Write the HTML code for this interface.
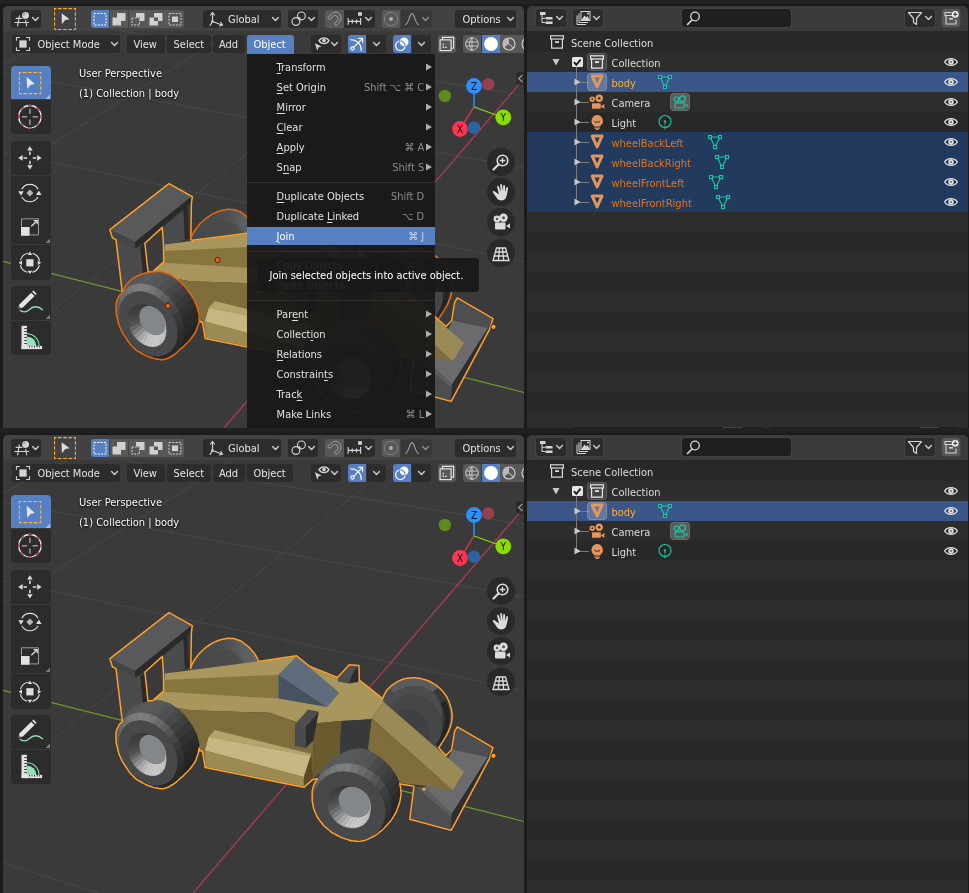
<!DOCTYPE html><html><head><meta charset="utf-8"><title>Blender - Join objects</title><style>
html,body{margin:0;padding:0;background:#1b1b1b;}
body{width:969px;height:893px;overflow:hidden;position:relative;font-family:"DejaVu Sans Condensed","DejaVu Sans","Liberation Sans",sans-serif;font-size:11px;font-stretch:condensed;color:#e0e0e0;}
div,span,svg{position:absolute;box-sizing:border-box;}
.panel{overflow:hidden;border-radius:5px 5px 0 0;will-change:transform;}
.vp{background:#3a3a3a;}
.hdr{background:#424242;left:0;top:0;width:100%;height:26px;}
.btn{background:#2c2c2c;border-radius:3px;height:18px;}
.tog{background:#585858;}
.on{background:#5680c2;}
.pd{background:rgba(32,32,32,.55);border-radius:3px;height:18px;top:30px;}
.t{white-space:nowrap;line-height:18px;height:18px;top:1px;color:#e3e3e3;}
.ol{background:#282828;}
.ol .hdr{background:#3b3b3b;}
.ol .hdr .btn{box-shadow:0 0 0 1px rgba(255,255,255,.045);}
.row{left:0;width:100%;height:20px;}
.alt{background:#2d2d2d;}
.rt{white-space:nowrap;line-height:20px;height:20px;margin-top:2px;color:#dcdcdc;}
.menu{background:rgba(24,24,24,.94);}
.mi{left:0;width:100%;height:20px;}
.ml{left:30px;top:1px;line-height:20px;white-space:nowrap;color:#e0e0e0;}
.ms{right:11px;top:1px;line-height:20px;white-space:nowrap;color:#8c8c8c;}
.ms2{right:5px;}
.sep{left:0;width:100%;height:1px;background:#2f2f2f;}
u{text-decoration:underline;text-underline-offset:1.5px;text-decoration-thickness:1px;}
.tool{left:8px;width:40px;background:#2c2c2c;}
.nav{width:28px;height:28px;border-radius:14px;background:rgba(36,36,36,.75);left:484px;}
.vt{white-space:nowrap;color:#fff;text-shadow:0 1px 2px rgba(0,0,0,.9),0 0 1px rgba(0,0,0,.8);left:76px;line-height:14px;}
</style></head><body>
<div style="left:0;top:0;width:969px;height:4px;background:#232323"></div><div style="left:0;top:428px;width:969px;height:5px;background:#212121"></div>
<div class="panel vp" style="left:3px;top:6px;width:521px;height:422px"><div style="left:0;top:-1px;width:521px;height:423px">
<svg style="left:0;top:0" width="521" height="423" viewBox="3 5 521 423"><defs><linearGradient id="ttra" gradientUnits="userSpaceOnUse" x1="143" y1="700" x2="192" y2="768"><stop offset="0" stop-color="#55575a"/><stop offset="0.22" stop-color="#5a5c5e"/><stop offset="0.36" stop-color="#4e4f51"/><stop offset="0.5" stop-color="#3c3d3e"/><stop offset="0.64" stop-color="#2d2d2e"/><stop offset="0.8" stop-color="#232324"/><stop offset="1" stop-color="#1a1a1a"/></linearGradient><linearGradient id="ttrb" gradientUnits="userSpaceOnUse" x1="343" y1="748" x2="396" y2="824"><stop offset="0" stop-color="#55575a"/><stop offset="0.22" stop-color="#5a5c5e"/><stop offset="0.36" stop-color="#4e4f51"/><stop offset="0.5" stop-color="#3c3d3e"/><stop offset="0.64" stop-color="#2d2d2e"/><stop offset="0.8" stop-color="#232324"/><stop offset="1" stop-color="#1a1a1a"/></linearGradient><linearGradient id="tsha" gradientUnits="userSpaceOnUse" x1="131" y1="712" x2="172" y2="790"><stop offset="0" stop-color="#5a5c5e"/><stop offset="0.1" stop-color="#6e7072"/><stop offset="0.2" stop-color="#7e8082"/><stop offset="0.32" stop-color="#626466"/><stop offset="0.45" stop-color="#505153"/><stop offset="0.6" stop-color="#38393a"/><stop offset="0.75" stop-color="#2a2a2b"/><stop offset="1" stop-color="#1e1e1e"/></linearGradient><linearGradient id="tshb" gradientUnits="userSpaceOnUse" x1="330" y1="762" x2="376" y2="842"><stop offset="0" stop-color="#5a5c5e"/><stop offset="0.1" stop-color="#6e7072"/><stop offset="0.2" stop-color="#7e8082"/><stop offset="0.32" stop-color="#626466"/><stop offset="0.45" stop-color="#505153"/><stop offset="0.6" stop-color="#38393a"/><stop offset="0.75" stop-color="#2a2a2b"/><stop offset="1" stop-color="#1e1e1e"/></linearGradient><linearGradient id="trma" gradientUnits="userSpaceOnUse" x1="138" y1="734" x2="156" y2="776"><stop offset="0" stop-color="#3f3e3e"/><stop offset="0.3" stop-color="#555657"/><stop offset="0.5" stop-color="#7a7b7c"/><stop offset="0.68" stop-color="#a2a3a4"/><stop offset="0.85" stop-color="#c6c7c8"/><stop offset="1" stop-color="#d0d0d0"/></linearGradient><linearGradient id="trmb" gradientUnits="userSpaceOnUse" x1="338" y1="786" x2="360" y2="829"><stop offset="0" stop-color="#3f3e3e"/><stop offset="0.3" stop-color="#555657"/><stop offset="0.5" stop-color="#7a7b7c"/><stop offset="0.68" stop-color="#a2a3a4"/><stop offset="0.85" stop-color="#c6c7c8"/><stop offset="1" stop-color="#d0d0d0"/></linearGradient><linearGradient id="trr" gradientUnits="userSpaceOnUse" x1="195" y1="660" x2="258" y2="650"><stop offset="0" stop-color="#474849"/><stop offset="0.45" stop-color="#4b4c4d"/><stop offset="0.62" stop-color="#545556"/><stop offset="0.8" stop-color="#5e5f60"/><stop offset="1" stop-color="#626364"/></linearGradient></defs><g transform="translate(0,-429)"><line x1="3" y1="862.9" x2="524" y2="1027.3" stroke="#484848" stroke-width="1"/><line x1="3" y1="580.7" x2="524" y2="690.7" stroke="#484848" stroke-width="1"/><line x1="3" y1="502.0" x2="524" y2="596.9" stroke="#484848" stroke-width="1"/><line x1="3" y1="441.2" x2="524" y2="524.3" stroke="#484848" stroke-width="1"/><line x1="3" y1="393.2" x2="524" y2="467.1" stroke="#484848" stroke-width="1"/><line x1="434.3" y1="430" x2="-150.5" y2="905" stroke="#484848" stroke-width="1"/><line x1="280.5" y1="430" x2="-478.1" y2="905" stroke="#484848" stroke-width="1"/><line x1="126.7" y1="430" x2="-805.8" y2="905" stroke="#484848" stroke-width="1"/><line x1="3" y1="690.4" x2="524" y2="821.5" stroke="#6c9c27" stroke-width="1.2"/><line x1="524.5" y1="507" x2="193" y2="893" stroke="#a33c4e" stroke-width="1.4"/><path d="M190.5 668.6 C191.2 666.9 190.2 667.7 192.5 663.5 C194.8 659.3 193.9 660.5 197.4 656.0 C200.9 651.5 199.0 653.7 203.0 650.0 C207.0 646.3 205.0 647.9 209.5 645.0 C214.0 642.1 211.7 643.2 216.5 641.2 C221.3 639.2 219.2 639.9 224.0 639.0 C228.8 638.1 226.3 638.2 231.0 638.5 C235.7 638.8 233.3 638.2 238.0 640.0 C242.7 641.8 240.6 640.8 245.0 644.0 C249.4 647.2 247.6 645.7 251.3 649.7 C255.0 653.7 253.6 652.1 256.0 656.0 C258.4 659.9 257.7 659.7 258.5 661.5 L262 661 L262 695 L189 695 Z" fill="url(#trr)"/><path d="M200 672 C201 658 212 650 224 650 C233 650 239 655 243 663 L243 672 Z" fill="#484949" opacity=".7"/><path d="M382.7 698.5 C383.6 696.5 383.2 696.2 385.5 692.5 C387.8 688.8 386.2 690.7 389.5 687.5 C392.8 684.3 391.2 685.5 395.5 682.8 C399.8 680.1 397.7 681.1 402.5 679.5 C407.3 677.9 405.1 678.5 410.0 678.0 C414.9 677.5 412.3 677.4 417.3 678.0 C422.3 678.6 420.0 678.2 425.0 679.8 C430.0 681.4 427.7 680.4 432.2 682.9 C436.7 685.4 434.6 684.0 438.5 687.3 C442.4 690.6 440.7 688.9 443.8 692.8 C446.9 696.7 445.6 694.6 447.8 699.0 C450.0 703.4 449.1 701.7 450.4 706.0 C451.7 710.3 451.3 708.1 451.8 712.0 C452.3 715.9 452.3 713.6 452.0 717.6 C451.7 721.6 452.0 719.9 451.0 724.0 C450.0 728.1 450.8 725.7 449.0 730.0 C447.2 734.3 448.0 732.5 445.5 737.0 C443.0 741.5 443.8 739.9 441.5 743.5 C439.2 747.1 439.6 746.3 438.6 747.7 L420 760 L375 705 Z" fill="#4b4c4d"/><path d="M389.500 687.500 C400 677 425 675 438.500 687.300 L433 692 C422 683 405 684 394 693 Z" fill="#5b5c5d"/><path d="M438.500 687.300 C452 700 455 722 438.600 747.700 L432 741 C446 722 444 703 433 692 Z" fill="#38393a"/><path d="M445 700 C453 712 452 730 438.600 747.700 L436 744 C446 728 447 714 441 704 Z" fill="#252526"/><ellipse cx="415" cy="723" rx="26" ry="30" transform="rotate(-35 415 723)" fill="#454647" /><ellipse cx="411" cy="729" rx="17" ry="21" transform="rotate(-35 411 729)" fill="#3f4041" /><polygon points="163.6,655.4 183.4,638.9 185.0,668.6 164.4,676.0" fill="#4a4b4c" /><polygon points="183.4,638.0 187.5,634.7 189.2,667.7 185.0,668.6" fill="#2a2a2a" /><polygon points="187.5,634.7 191.0,632.0 191.0,667.4 189.2,667.7" fill="#3a3a3a" /><polygon points="116.2,668.6 140.5,676.8 143.3,706.0 123.0,724.0" fill="#4a4b4c" /><polygon points="140.5,676.8 144.6,672.7 147.9,700.8 143.3,706.0" fill="#2a2a2a" /><polygon points="111.2,658.7 135.0,670.7 135.5,677.7 113.2,666.9" fill="#444546" /><polygon points="135.0,670.7 190.5,625.6 191.0,632.2 135.5,677.7" fill="#2a2a2a" /><polygon points="110.5,658.7 169.0,613.3 191.5,625.6 135.0,670.7" fill="#58595a" /><polygon points="164.8,673.6 296.5,656.5 310.0,667.2 338.0,678.5 359.5,680.5 383.0,699.0 383.4,701.7 371.7,718.4 369.4,719.5 341.4,720.9 313.3,723.4 295.7,721.7 269.3,712.7 190.0,710.2 148.0,702.5 152.8,700.8 163.6,691.7" fill="#a8965c" /><polygon points="164.4,680.1 278.3,674.7 278.3,698.6 163.6,691.7" fill="#86753f" /><polygon points="146.0,702.0 190.0,710.2 269.3,712.7 296.0,722.0 313.3,723.4 313.0,780.0 205.7,767.0 201.6,750.6 196.6,754.0 192.0,768.0 160.0,760.0" fill="#7f6e3b" /><polygon points="313.3,723.4 341.4,720.9 339.7,757.0 325.0,768.0 312.0,780.0" fill="#6a5b2e" /><polygon points="341.4,720.9 369.6,719.3 368.0,750.0 339.7,757.0" fill="#38393a" /><polygon points="296.5,656.5 339.4,692.8 327.0,706.9 278.3,674.7" fill="#5f6c7b" /><polygon points="278.3,674.7 327.0,706.9 278.3,698.6" fill="#46525f" /><polygon points="338.0,677.5 349.5,665.6 354.0,671.5 348.5,683.5 338.0,681.5" fill="#4b4c4e" /><polygon points="349.5,665.6 358.2,666.3 358.2,682.0 348.5,683.5 354.0,671.5" fill="#2c2c2d" /><polygon points="338.0,677.5 349.5,665.6 358.2,666.3 347.5,679.5" fill="#4e4f51" /><polygon points="455.0,732.2 457.5,728.1 491.9,748.2 488.1,757.0 452.6,749.5" fill="#4d4e50" /><polygon points="452.6,749.5 488.1,757.0 451.7,813.9 424.5,787.5 440.0,775.0" fill="#6a6b6d" /><polygon points="488.1,757.0 492.2,749.5 450.9,829.6 451.7,813.9" fill="#2d2d2e" /><polygon points="414.6,787.0 424.5,787.5 451.7,813.9 450.9,829.6 411.0,818.6" fill="#4d4e50" /><polygon points="416.0,787.0 424.5,787.5 451.7,813.9 451.0,816.5" fill="#5c5d5f" /><polygon points="383.4,701.7 463.9,771.7 452.8,790.3 371.7,718.4" fill="#9a8a55" /><polygon points="371.7,718.4 452.8,790.3 426.8,786.0 399.5,783.0 380.0,762.0 368.0,749.0" fill="#7f6e3b" /><polygon points="294.9,724.2 308.1,709.6 318.8,711.8 305.6,726.7" fill="#4c4d4f" /><polygon points="294.9,724.2 305.6,726.7 305.6,748.2 294.9,745.7" fill="#494a4c" /><polygon points="305.6,726.7 318.8,711.8 313.2,740.7 305.6,748.2" fill="#2c2c2d" /><polygon points="214.8,730.0 311.4,753.9 310.5,756.0 208.7,737.0" fill="#b4a36b" /><polygon points="208.7,737.0 310.5,756.0 303.9,777.1 204.9,750.6" fill="#c6b682" /><polygon points="204.9,750.6 303.9,777.1 303.9,786.5 205.7,766.8" fill="#9b8a52" /><polygon points="311.4,753.9 303.9,777.1 303.9,786.5 312.5,779.0" fill="#5a4a27" /><clipPath id="tcla"><path d="M122.3 721.4 C119.8 725.4 119.6 722.5 117.5 728.0 C115.4 733.5 116.0 731.3 116.0 738.0 C116.0 744.7 116.0 741.5 117.5 748.0 C119.0 754.5 117.7 751.2 120.5 757.5 C123.3 763.8 121.8 760.8 126.0 767.0 C130.2 773.2 128.0 771.0 133.0 776.0 C138.0 781.0 135.5 778.7 141.0 782.0 C146.5 785.3 143.8 783.9 149.5 786.0 C155.2 788.1 152.8 787.6 158.0 788.3 C163.2 789.0 160.3 789.3 165.0 788.2 C169.7 787.1 167.2 788.0 172.0 785.0 C176.8 782.0 174.6 783.2 179.3 779.2 C184.0 775.2 181.6 777.6 186.0 773.0 C190.4 768.4 188.8 770.8 192.5 765.5 C196.2 760.2 194.8 762.8 197.0 757.0 C199.2 751.2 199.0 754.3 199.2 748.0 C199.4 741.7 199.3 744.3 197.6 738.0 C195.9 731.7 196.9 734.7 194.0 729.0 C191.1 723.3 192.8 726.3 189.0 721.0 C185.2 715.7 187.3 717.8 182.5 713.0 C177.7 708.2 180.2 710.2 174.5 706.5 C168.8 702.8 171.7 704.0 165.5 702.0 C159.3 700.0 162.5 700.6 156.0 700.6 C149.5 700.6 152.0 700.6 146.0 702.0 C140.0 703.4 143.2 702.3 138.0 704.8 C132.8 707.3 134.8 705.8 130.5 709.5 C126.2 713.2 127.7 712.0 125.0 716.0 C122.3 720.0 124.8 717.4 122.3 721.4 Z"/></clipPath><path d="M122.3 721.4 C119.8 725.4 119.6 722.5 117.5 728.0 C115.4 733.5 116.0 731.3 116.0 738.0 C116.0 744.7 116.0 741.5 117.5 748.0 C119.0 754.5 117.7 751.2 120.5 757.5 C123.3 763.8 121.8 760.8 126.0 767.0 C130.2 773.2 128.0 771.0 133.0 776.0 C138.0 781.0 135.5 778.7 141.0 782.0 C146.5 785.3 143.8 783.9 149.5 786.0 C155.2 788.1 152.8 787.6 158.0 788.3 C163.2 789.0 160.3 789.3 165.0 788.2 C169.7 787.1 167.2 788.0 172.0 785.0 C176.8 782.0 174.6 783.2 179.3 779.2 C184.0 775.2 181.6 777.6 186.0 773.0 C190.4 768.4 188.8 770.8 192.5 765.5 C196.2 760.2 194.8 762.8 197.0 757.0 C199.2 751.2 199.0 754.3 199.2 748.0 C199.4 741.7 199.3 744.3 197.6 738.0 C195.9 731.7 196.9 734.7 194.0 729.0 C191.1 723.3 192.8 726.3 189.0 721.0 C185.2 715.7 187.3 717.8 182.5 713.0 C177.7 708.2 180.2 710.2 174.5 706.5 C168.8 702.8 171.7 704.0 165.5 702.0 C159.3 700.0 162.5 700.6 156.0 700.6 C149.5 700.6 152.0 700.6 146.0 702.0 C140.0 703.4 143.2 702.3 138.0 704.8 C132.8 707.3 134.8 705.8 130.5 709.5 C126.2 713.2 127.7 712.0 125.0 716.0 C122.3 720.0 124.8 717.4 122.3 721.4 Z" fill="url(#ttra)"/><g clip-path="url(#tcla)"><polygon points="190.7,769.2 185.6,771.8 168.9,786.9 174.1,784.2" fill="#1f1f20" stroke="#1f1f20" stroke-width="0.4"/><polygon points="185.6,771.8 179.7,773.1 163.0,788.2 168.9,786.9" fill="#1e1e1f" stroke="#1e1e1f" stroke-width="0.4"/><polygon points="179.7,773.1 173.4,773.0 156.6,788.1 163.0,788.2" fill="#1e1e1e" stroke="#1e1e1e" stroke-width="0.4"/><polygon points="173.4,773.0 166.8,771.4 149.9,786.5 156.6,788.1" fill="#1d1d1d" stroke="#1d1d1d" stroke-width="0.4"/><polygon points="166.8,771.4 160.3,768.5 143.3,783.5 149.9,786.5" fill="#1b1b1c" stroke="#1b1b1c" stroke-width="0.4"/><polygon points="160.3,768.5 154.1,764.3 137.0,779.2 143.3,783.5" fill="#1b1b1b" stroke="#1b1b1b" stroke-width="0.4"/><polygon points="154.1,764.3 148.3,759.1 131.2,773.8 137.0,779.2" fill="#1a1a1a" stroke="#1a1a1a" stroke-width="0.4"/><polygon points="148.3,759.1 143.3,752.9 126.1,767.6 131.2,773.8" fill="#2f2f30" stroke="#2f2f30" stroke-width="0.4"/><polygon points="143.3,752.9 139.3,746.1 121.9,760.7 126.1,767.6" fill="#494a4b" stroke="#494a4b" stroke-width="0.4"/><polygon points="139.3,746.1 136.3,738.9 118.9,753.4 121.9,760.7" fill="#4e5052" stroke="#4e5052" stroke-width="0.4"/><polygon points="136.3,738.9 134.5,731.6 117.1,746.0 118.9,753.4" fill="#525355" stroke="#525355" stroke-width="0.4"/><polygon points="134.5,731.6 134.0,724.5 116.5,738.7 117.1,746.0" fill="#545658" stroke="#545658" stroke-width="0.4"/><polygon points="134.0,724.5 134.8,717.8 117.3,731.9 116.5,738.7" fill="#56585a" stroke="#56585a" stroke-width="0.4"/><polygon points="134.8,717.8 136.8,711.8 119.3,725.9 117.3,731.9" fill="#57595b" stroke="#57595b" stroke-width="0.4"/><polygon points="136.8,711.8 140.0,706.8 122.6,720.7 119.3,725.9" fill="#585a5c" stroke="#585a5c" stroke-width="0.4"/><polygon points="140.0,706.8 144.3,702.8 126.9,716.8 122.6,720.7" fill="#595b5d" stroke="#595b5d" stroke-width="0.4"/><polygon points="144.3,702.8 149.4,700.2 132.1,714.1 126.9,716.8" fill="#595b5d" stroke="#595b5d" stroke-width="0.4"/><polygon points="149.4,700.2 155.3,698.9 138.0,712.8 132.1,714.1" fill="#5a5b5d" stroke="#5a5b5d" stroke-width="0.4"/><polygon points="155.3,698.9 161.6,699.0 144.4,712.9 138.0,712.8" fill="#585a5c" stroke="#585a5c" stroke-width="0.4"/><polygon points="161.6,699.0 168.2,700.6 151.1,714.5 144.4,712.9" fill="#56585a" stroke="#56585a" stroke-width="0.4"/><polygon points="168.2,700.6 174.7,703.5 157.7,717.5 151.1,714.5" fill="#545557" stroke="#545557" stroke-width="0.4"/><polygon points="174.7,703.5 180.9,707.7 164.0,721.8 157.7,717.5" fill="#4e4f51" stroke="#4e4f51" stroke-width="0.4"/><polygon points="180.9,707.7 186.7,712.9 169.8,727.2 164.0,721.8" fill="#464748" stroke="#464748" stroke-width="0.4"/><polygon points="186.7,712.9 191.7,719.1 174.9,733.4 169.8,727.2" fill="#3e3f40" stroke="#3e3f40" stroke-width="0.4"/><polygon points="191.7,719.1 195.7,725.9 179.1,740.3 174.9,733.4" fill="#373738" stroke="#373738" stroke-width="0.4"/><polygon points="195.7,725.9 198.7,733.1 182.1,747.6 179.1,740.3" fill="#313132" stroke="#313132" stroke-width="0.4"/><polygon points="198.7,733.1 200.5,740.4 183.9,755.0 182.1,747.6" fill="#2b2b2c" stroke="#2b2b2c" stroke-width="0.4"/><polygon points="200.5,740.4 201.0,747.5 184.5,762.3 183.9,755.0" fill="#282829" stroke="#282829" stroke-width="0.4"/><polygon points="201.0,747.5 200.2,754.2 183.7,769.1 184.5,762.3" fill="#252526" stroke="#252526" stroke-width="0.4"/><polygon points="200.2,754.2 198.2,760.2 181.7,775.1 183.7,769.1" fill="#232324" stroke="#232324" stroke-width="0.4"/><polygon points="198.2,760.2 195.0,765.2 178.4,780.3 181.7,775.1" fill="#222223" stroke="#222223" stroke-width="0.4"/><polygon points="195.0,765.2 190.7,769.2 174.1,784.2 178.4,780.3" fill="#212122" stroke="#212122" stroke-width="0.4"/><polygon points="174.1,784.2 168.9,786.9 164.2,784.3 168.7,782.0" fill="#272728" stroke="#272728" stroke-width="0.4"/><polygon points="168.9,786.9 163.0,788.2 159.1,785.4 164.2,784.3" fill="#282829" stroke="#282829" stroke-width="0.4"/><polygon points="163.0,788.2 156.6,788.1 153.5,785.3 159.1,785.4" fill="#2a2a2b" stroke="#2a2a2b" stroke-width="0.4"/><polygon points="156.6,788.1 149.9,786.5 147.8,783.9 153.5,785.3" fill="#2b2b2c" stroke="#2b2b2c" stroke-width="0.4"/><polygon points="149.9,786.5 143.3,783.5 142.1,781.3 147.8,783.9" fill="#2f2f30" stroke="#2f2f30" stroke-width="0.4"/><polygon points="143.3,783.5 137.0,779.2 136.6,777.6 142.1,781.3" fill="#353536" stroke="#353536" stroke-width="0.4"/><polygon points="137.0,779.2 131.2,773.8 131.6,773.0 136.6,777.6" fill="#3b3c3d" stroke="#3b3c3d" stroke-width="0.4"/><polygon points="131.2,773.8 126.1,767.6 127.2,767.6 131.6,773.0" fill="#404142" stroke="#404142" stroke-width="0.4"/><polygon points="126.1,767.6 121.9,760.7 123.7,761.7 127.2,767.6" fill="#454647" stroke="#454647" stroke-width="0.4"/><polygon points="121.9,760.7 118.9,753.4 121.1,755.4 123.7,761.7" fill="#494a4b" stroke="#494a4b" stroke-width="0.4"/><polygon points="118.9,753.4 117.1,746.0 119.5,749.0 121.1,755.4" fill="#4d4e50" stroke="#4d4e50" stroke-width="0.4"/><polygon points="117.1,746.0 116.5,738.7 119.0,742.8 119.5,749.0" fill="#535557" stroke="#535557" stroke-width="0.4"/><polygon points="116.5,738.7 117.3,731.9 119.7,736.9 119.0,742.8" fill="#595b5d" stroke="#595b5d" stroke-width="0.4"/><polygon points="117.3,731.9 119.3,725.9 121.4,731.7 119.7,736.9" fill="#5f6163" stroke="#5f6163" stroke-width="0.4"/><polygon points="119.3,725.9 122.6,720.7 124.2,727.3 121.4,731.7" fill="#67696b" stroke="#67696b" stroke-width="0.4"/><polygon points="122.6,720.7 126.9,716.8 127.9,723.8 124.2,727.3" fill="#6e7072" stroke="#6e7072" stroke-width="0.4"/><polygon points="126.9,716.8 132.1,714.1 132.4,721.5 127.9,723.8" fill="#747678" stroke="#747678" stroke-width="0.4"/><polygon points="132.1,714.1 138.0,712.8 137.5,720.4 132.4,721.5" fill="#797b7d" stroke="#797b7d" stroke-width="0.4"/><polygon points="138.0,712.8 144.4,712.9 143.1,720.5 137.5,720.4" fill="#7e8082" stroke="#7e8082" stroke-width="0.4"/><polygon points="144.4,712.9 151.1,714.5 148.8,721.9 143.1,720.5" fill="#7b7d7f" stroke="#7b7d7f" stroke-width="0.4"/><polygon points="151.1,714.5 157.7,717.5 154.5,724.5 148.8,721.9" fill="#737577" stroke="#737577" stroke-width="0.4"/><polygon points="157.7,717.5 164.0,721.8 160.0,728.2 154.5,724.5" fill="#696b6d" stroke="#696b6d" stroke-width="0.4"/><polygon points="164.0,721.8 169.8,727.2 165.0,732.8 160.0,728.2" fill="#5e6062" stroke="#5e6062" stroke-width="0.4"/><polygon points="169.8,727.2 174.9,733.4 169.4,738.2 165.0,732.8" fill="#525355" stroke="#525355" stroke-width="0.4"/><polygon points="174.9,733.4 179.1,740.3 172.9,744.1 169.4,738.2" fill="#454647" stroke="#454647" stroke-width="0.4"/><polygon points="179.1,740.3 182.1,747.6 175.5,750.4 172.9,744.1" fill="#3a3b3c" stroke="#3a3b3c" stroke-width="0.4"/><polygon points="182.1,747.6 183.9,755.0 177.1,756.8 175.5,750.4" fill="#343435" stroke="#343435" stroke-width="0.4"/><polygon points="183.9,755.0 184.5,762.3 177.6,763.0 177.1,756.8" fill="#303031" stroke="#303031" stroke-width="0.4"/><polygon points="184.5,762.3 183.7,769.1 176.9,768.9 177.6,763.0" fill="#2d2d2e" stroke="#2d2d2e" stroke-width="0.4"/><polygon points="183.7,769.1 181.7,775.1 175.2,774.1 176.9,768.9" fill="#2a2a2b" stroke="#2a2a2b" stroke-width="0.4"/><polygon points="181.7,775.1 178.4,780.3 172.4,778.5 175.2,774.1" fill="#29292a" stroke="#29292a" stroke-width="0.4"/><polygon points="178.4,780.3 174.1,784.2 168.7,782.0 172.4,778.5" fill="#282829" stroke="#282829" stroke-width="0.4"/><ellipse cx="148.3" cy="752.9" rx="35.5" ry="25.7" transform="rotate(55 148.3 752.9)" fill="#47484a" /><polygon points="160.2,773.5 157.3,775.0 159.6,763.6 161.6,762.5" fill="#c8c9ca" stroke="#c8c9ca" stroke-width="0.4"/><polygon points="157.3,775.0 154.0,775.7 157.3,764.1 159.6,763.6" fill="#cacbcc" stroke="#cacbcc" stroke-width="0.4"/><polygon points="154.0,775.7 150.5,775.6 154.8,764.0 157.3,764.1" fill="#cbcccd" stroke="#cbcccd" stroke-width="0.4"/><polygon points="150.5,775.6 146.8,774.7 152.3,763.4 154.8,764.0" fill="#c7c8c9" stroke="#c7c8c9" stroke-width="0.4"/><polygon points="146.8,774.7 143.1,773.0 149.7,762.2 152.3,763.4" fill="#c3c4c5" stroke="#c3c4c5" stroke-width="0.4"/><polygon points="143.1,773.0 139.5,770.6 147.3,760.6 149.7,762.2" fill="#b7b8b9" stroke="#b7b8b9" stroke-width="0.4"/><polygon points="139.5,770.6 136.2,767.6 145.0,758.5 147.3,760.6" fill="#a6a7a8" stroke="#a6a7a8" stroke-width="0.4"/><polygon points="136.2,767.6 133.4,764.1 143.1,756.1 145.0,758.5" fill="#8f9091" stroke="#8f9091" stroke-width="0.4"/><polygon points="133.4,764.1 131.1,760.2 141.5,753.4 143.1,756.1" fill="#78797a" stroke="#78797a" stroke-width="0.4"/><polygon points="131.1,760.2 129.4,756.2 140.3,750.6 141.5,753.4" fill="#636364" stroke="#636364" stroke-width="0.4"/><polygon points="129.4,756.2 128.3,752.0 139.6,747.7 140.3,750.6" fill="#515151" stroke="#515151" stroke-width="0.4"/><polygon points="128.3,752.0 128.0,748.0 139.4,745.0 139.6,747.7" fill="#4b4b4a" stroke="#4b4b4a" stroke-width="0.4"/><polygon points="128.0,748.0 128.4,744.2 139.7,742.3 139.4,745.0" fill="#464544" stroke="#464544" stroke-width="0.4"/><polygon points="128.4,744.2 129.6,740.8 140.5,740.0 139.7,742.3" fill="#424140" stroke="#424140" stroke-width="0.4"/><polygon points="129.6,740.8 131.4,737.9 141.7,738.0 140.5,740.0" fill="#403f3e" stroke="#403f3e" stroke-width="0.4"/><polygon points="131.4,737.9 133.8,735.7 143.4,736.5 141.7,738.0" fill="#3e3d3c" stroke="#3e3d3c" stroke-width="0.4"/><polygon points="133.8,735.7 136.7,734.2 145.4,735.4 143.4,736.5" fill="#3c3b3a" stroke="#3c3b3a" stroke-width="0.4"/><polygon points="136.7,734.2 140.0,733.5 147.7,734.9 145.4,735.4" fill="#3c3b3a" stroke="#3c3b3a" stroke-width="0.4"/><polygon points="140.0,733.5 143.5,733.6 150.2,735.0 147.7,734.9" fill="#3b3a3a" stroke="#3b3a3a" stroke-width="0.4"/><polygon points="143.5,733.6 147.2,734.5 152.7,735.6 150.2,735.0" fill="#3a3a3a" stroke="#3a3a3a" stroke-width="0.4"/><polygon points="147.2,734.5 150.9,736.2 155.3,736.8 152.7,735.6" fill="#3c3c3c" stroke="#3c3c3c" stroke-width="0.4"/><polygon points="150.9,736.2 154.5,738.6 157.7,738.4 155.3,736.8" fill="#414141" stroke="#414141" stroke-width="0.4"/><polygon points="154.5,738.6 157.8,741.6 160.0,740.5 157.7,738.4" fill="#454545" stroke="#454545" stroke-width="0.4"/><polygon points="157.8,741.6 160.6,745.1 161.9,742.9 160.0,740.5" fill="#4d4d4e" stroke="#4d4d4e" stroke-width="0.4"/><polygon points="160.6,745.1 162.9,749.0 163.5,745.6 161.9,742.9" fill="#656666" stroke="#656666" stroke-width="0.4"/><polygon points="162.9,749.0 164.6,753.0 164.7,748.4 163.5,745.6" fill="#7d7e7f" stroke="#7d7e7f" stroke-width="0.4"/><polygon points="164.6,753.0 165.7,757.2 165.4,751.3 164.7,748.4" fill="#98999a" stroke="#98999a" stroke-width="0.4"/><polygon points="165.7,757.2 166.0,761.2 165.6,754.0 165.4,751.3" fill="#b1b2b3" stroke="#b1b2b3" stroke-width="0.4"/><polygon points="166.0,761.2 165.6,765.0 165.3,756.7 165.6,754.0" fill="#babbbc" stroke="#babbbc" stroke-width="0.4"/><polygon points="165.6,765.0 164.4,768.4 164.5,759.0 165.3,756.7" fill="#bfc0c1" stroke="#bfc0c1" stroke-width="0.4"/><polygon points="164.4,768.4 162.6,771.3 163.3,761.0 164.5,759.0" fill="#c5c6c7" stroke="#c5c6c7" stroke-width="0.4"/><polygon points="162.6,771.3 160.2,773.5 161.6,762.5 163.3,761.0" fill="#c7c8c9" stroke="#c7c8c9" stroke-width="0.4"/><ellipse cx="152.5" cy="749.5" rx="15.9" ry="11.5" transform="rotate(55 152.5 749.5)" fill="#84878a" /></g><clipPath id="tclb"><path d="M317.2 778.8 C314.1 784.6 314.9 781.3 313.2 787.0 C311.5 792.7 312.3 790.0 312.2 796.0 C312.1 802.0 311.9 799.3 313.0 805.0 C314.1 810.7 313.0 807.5 315.5 813.0 C318.0 818.5 316.4 816.1 320.5 821.5 C324.6 826.9 322.6 824.7 327.9 829.2 C333.2 833.7 330.4 831.7 336.5 835.0 C342.6 838.3 340.1 837.1 346.1 839.1 C352.1 841.1 349.0 840.5 354.5 841.0 C360.0 841.5 357.1 841.8 362.6 840.7 C368.1 839.6 365.5 840.3 371.0 837.6 C376.5 834.9 373.8 836.7 379.1 832.5 C384.4 828.3 382.1 830.5 387.0 825.0 C391.9 819.5 390.2 821.9 393.9 815.9 C397.6 809.9 395.8 813.0 398.0 807.0 C400.2 801.0 399.6 803.5 400.5 797.8 C401.4 792.1 401.1 794.7 400.8 790.0 C400.5 785.3 401.1 788.3 399.7 783.8 C398.3 779.3 399.0 781.2 396.5 776.5 C394.0 771.8 395.8 774.4 392.3 769.7 C388.8 765.0 390.4 766.9 386.0 762.5 C381.6 758.1 384.1 760.0 379.1 756.5 C374.1 753.0 376.5 754.5 371.0 752.0 C365.5 749.5 368.3 750.0 362.6 749.1 C356.9 748.2 359.5 748.4 354.0 749.2 C348.5 750.0 351.6 749.4 346.1 751.6 C340.6 753.8 343.0 752.5 337.5 755.8 C332.0 759.1 334.5 756.9 329.5 761.5 C324.5 766.1 326.6 763.7 322.5 769.5 C318.4 775.3 320.3 773.0 317.2 778.8 Z"/></clipPath><path d="M317.2 778.8 C314.1 784.6 314.9 781.3 313.2 787.0 C311.5 792.7 312.3 790.0 312.2 796.0 C312.1 802.0 311.9 799.3 313.0 805.0 C314.1 810.7 313.0 807.5 315.5 813.0 C318.0 818.5 316.4 816.1 320.5 821.5 C324.6 826.9 322.6 824.7 327.9 829.2 C333.2 833.7 330.4 831.7 336.5 835.0 C342.6 838.3 340.1 837.1 346.1 839.1 C352.1 841.1 349.0 840.5 354.5 841.0 C360.0 841.5 357.1 841.8 362.6 840.7 C368.1 839.6 365.5 840.3 371.0 837.6 C376.5 834.9 373.8 836.7 379.1 832.5 C384.4 828.3 382.1 830.5 387.0 825.0 C391.9 819.5 390.2 821.9 393.9 815.9 C397.6 809.9 395.8 813.0 398.0 807.0 C400.2 801.0 399.6 803.5 400.5 797.8 C401.4 792.1 401.1 794.7 400.8 790.0 C400.5 785.3 401.1 788.3 399.7 783.8 C398.3 779.3 399.0 781.2 396.5 776.5 C394.0 771.8 395.8 774.4 392.3 769.7 C388.8 765.0 390.4 766.9 386.0 762.5 C381.6 758.1 384.1 760.0 379.1 756.5 C374.1 753.0 376.5 754.5 371.0 752.0 C365.5 749.5 368.3 750.0 362.6 749.1 C356.9 748.2 359.5 748.4 354.0 749.2 C348.5 750.0 351.6 749.4 346.1 751.6 C340.6 753.8 343.0 752.5 337.5 755.8 C332.0 759.1 334.5 756.9 329.5 761.5 C324.5 766.1 326.6 763.7 322.5 769.5 C318.4 775.3 320.3 773.0 317.2 778.8 Z" fill="url(#ttrb)"/><g clip-path="url(#tclb)"><polygon points="398.3,811.2 393.4,816.3 379.9,832.9 384.9,827.7" fill="#222223" stroke="#222223" stroke-width="0.4"/><polygon points="393.4,816.3 387.4,820.2 373.8,836.8 379.9,832.9" fill="#202021" stroke="#202021" stroke-width="0.4"/><polygon points="387.4,820.2 380.5,822.7 366.9,839.4 373.8,836.8" fill="#1f1f20" stroke="#1f1f20" stroke-width="0.4"/><polygon points="380.5,822.7 373.2,823.9 359.4,840.5 366.9,839.4" fill="#1e1e1e" stroke="#1e1e1e" stroke-width="0.4"/><polygon points="373.2,823.9 365.5,823.6 351.6,840.2 359.4,840.5" fill="#1c1c1c" stroke="#1c1c1c" stroke-width="0.4"/><polygon points="365.5,823.6 357.9,821.9 343.8,838.4 351.6,840.2" fill="#1b1b1b" stroke="#1b1b1b" stroke-width="0.4"/><polygon points="357.9,821.9 350.6,818.7 336.4,835.2 343.8,838.4" fill="#1a1a1a" stroke="#1a1a1a" stroke-width="0.4"/><polygon points="350.6,818.7 343.8,814.4 329.5,830.8 336.4,835.2" fill="#232424" stroke="#232424" stroke-width="0.4"/><polygon points="343.8,814.4 338.0,808.9 323.5,825.2 329.5,830.8" fill="#333434" stroke="#333434" stroke-width="0.4"/><polygon points="338.0,808.9 333.2,802.5 318.6,818.7 323.5,825.2" fill="#414243" stroke="#414243" stroke-width="0.4"/><polygon points="333.2,802.5 329.6,795.6 315.0,811.6 318.6,818.7" fill="#4a4b4c" stroke="#4a4b4c" stroke-width="0.4"/><polygon points="329.6,795.6 327.5,788.2 312.8,804.1 315.0,811.6" fill="#4d4e4f" stroke="#4d4e4f" stroke-width="0.4"/><polygon points="327.5,788.2 326.8,780.8 312.1,796.6 312.8,804.1" fill="#4f5052" stroke="#4f5052" stroke-width="0.4"/><polygon points="326.8,780.8 327.7,773.5 313.0,789.2 312.1,796.6" fill="#525355" stroke="#525355" stroke-width="0.4"/><polygon points="327.7,773.5 330.0,766.8 315.3,782.4 313.0,789.2" fill="#545658" stroke="#545658" stroke-width="0.4"/><polygon points="330.0,766.8 333.7,760.8 319.1,776.3 315.3,782.4" fill="#56585a" stroke="#56585a" stroke-width="0.4"/><polygon points="333.7,760.8 338.6,755.7 324.1,771.1 319.1,776.3" fill="#57595b" stroke="#57595b" stroke-width="0.4"/><polygon points="338.6,755.7 344.6,751.8 330.2,767.2 324.1,771.1" fill="#585a5c" stroke="#585a5c" stroke-width="0.4"/><polygon points="344.6,751.8 351.5,749.3 337.1,764.6 330.2,767.2" fill="#595b5d" stroke="#595b5d" stroke-width="0.4"/><polygon points="351.5,749.3 358.8,748.1 344.6,763.5 337.1,764.6" fill="#595b5d" stroke="#595b5d" stroke-width="0.4"/><polygon points="358.8,748.1 366.5,748.4 352.4,763.8 344.6,763.5" fill="#57595b" stroke="#57595b" stroke-width="0.4"/><polygon points="366.5,748.4 374.1,750.1 360.2,765.6 352.4,763.8" fill="#555759" stroke="#555759" stroke-width="0.4"/><polygon points="374.1,750.1 381.4,753.3 367.6,768.8 360.2,765.6" fill="#525355" stroke="#525355" stroke-width="0.4"/><polygon points="381.4,753.3 388.2,757.6 374.5,773.2 367.6,768.8" fill="#4a4b4d" stroke="#4a4b4d" stroke-width="0.4"/><polygon points="388.2,757.6 394.0,763.1 380.5,778.8 374.5,773.2" fill="#434445" stroke="#434445" stroke-width="0.4"/><polygon points="394.0,763.1 398.8,769.5 385.4,785.3 380.5,778.8" fill="#3c3c3d" stroke="#3c3c3d" stroke-width="0.4"/><polygon points="398.8,769.5 402.4,776.4 389.0,792.4 385.4,785.3" fill="#353536" stroke="#353536" stroke-width="0.4"/><polygon points="402.4,776.4 404.5,783.8 391.2,799.9 389.0,792.4" fill="#303031" stroke="#303031" stroke-width="0.4"/><polygon points="404.5,783.8 405.2,791.2 391.9,807.4 391.2,799.9" fill="#2b2b2c" stroke="#2b2b2c" stroke-width="0.4"/><polygon points="405.2,791.2 404.3,798.5 391.0,814.8 391.9,807.4" fill="#282829" stroke="#282829" stroke-width="0.4"/><polygon points="404.3,798.5 402.0,805.2 388.7,821.6 391.0,814.8" fill="#252526" stroke="#252526" stroke-width="0.4"/><polygon points="402.0,805.2 398.3,811.2 384.9,827.7 388.7,821.6" fill="#242425" stroke="#242425" stroke-width="0.4"/><polygon points="384.9,827.7 379.9,832.9 374.6,834.9 379.1,830.6" fill="#29292a" stroke="#29292a" stroke-width="0.4"/><polygon points="379.9,832.9 373.8,836.8 369.1,838.1 374.6,834.9" fill="#282829" stroke="#282829" stroke-width="0.4"/><polygon points="373.8,836.8 366.9,839.4 362.8,840.0 369.1,838.1" fill="#282829" stroke="#282829" stroke-width="0.4"/><polygon points="366.9,839.4 359.4,840.5 356.1,840.6 362.8,840.0" fill="#29292a" stroke="#29292a" stroke-width="0.4"/><polygon points="359.4,840.5 351.6,840.2 349.1,839.9 356.1,840.6" fill="#2b2b2c" stroke="#2b2b2c" stroke-width="0.4"/><polygon points="351.6,840.2 343.8,838.4 342.1,837.9 349.1,839.9" fill="#2f2f30" stroke="#2f2f30" stroke-width="0.4"/><polygon points="343.8,838.4 336.4,835.2 335.5,834.7 342.1,837.9" fill="#353536" stroke="#353536" stroke-width="0.4"/><polygon points="336.4,835.2 329.5,830.8 329.4,830.4 335.5,834.7" fill="#3b3c3d" stroke="#3b3c3d" stroke-width="0.4"/><polygon points="329.5,830.8 323.5,825.2 324.0,825.1 329.4,830.4" fill="#3f4041" stroke="#3f4041" stroke-width="0.4"/><polygon points="323.5,825.2 318.6,818.7 319.7,819.1 324.0,825.1" fill="#434445" stroke="#434445" stroke-width="0.4"/><polygon points="318.6,818.7 315.0,811.6 316.5,812.6 319.7,819.1" fill="#474849" stroke="#474849" stroke-width="0.4"/><polygon points="315.0,811.6 312.8,804.1 314.6,805.8 316.5,812.6" fill="#4a4b4c" stroke="#4a4b4c" stroke-width="0.4"/><polygon points="312.8,804.1 312.1,796.6 314.0,799.1 314.6,805.8" fill="#4d4e50" stroke="#4d4e50" stroke-width="0.4"/><polygon points="312.1,796.6 313.0,789.2 314.9,792.6 314.0,799.1" fill="#535456" stroke="#535456" stroke-width="0.4"/><polygon points="313.0,789.2 315.3,782.4 317.0,786.6 314.9,792.6" fill="#585a5c" stroke="#585a5c" stroke-width="0.4"/><polygon points="315.3,782.4 319.1,776.3 320.5,781.4 317.0,786.6" fill="#5f6163" stroke="#5f6163" stroke-width="0.4"/><polygon points="319.1,776.3 324.1,771.1 325.0,777.1 320.5,781.4" fill="#67696b" stroke="#67696b" stroke-width="0.4"/><polygon points="324.1,771.1 330.2,767.2 330.5,773.9 325.0,777.1" fill="#707274" stroke="#707274" stroke-width="0.4"/><polygon points="330.2,767.2 337.1,764.6 336.8,772.0 330.5,773.9" fill="#76787a" stroke="#76787a" stroke-width="0.4"/><polygon points="337.1,764.6 344.6,763.5 343.5,771.4 336.8,772.0" fill="#7c7e80" stroke="#7c7e80" stroke-width="0.4"/><polygon points="344.6,763.5 352.4,763.8 350.5,772.1 343.5,771.4" fill="#7c7e80" stroke="#7c7e80" stroke-width="0.4"/><polygon points="352.4,763.8 360.2,765.6 357.5,774.1 350.5,772.1" fill="#737577" stroke="#737577" stroke-width="0.4"/><polygon points="360.2,765.6 367.6,768.8 364.1,777.3 357.5,774.1" fill="#696b6d" stroke="#696b6d" stroke-width="0.4"/><polygon points="367.6,768.8 374.5,773.2 370.2,781.6 364.1,777.3" fill="#5f6163" stroke="#5f6163" stroke-width="0.4"/><polygon points="374.5,773.2 380.5,778.8 375.6,786.9 370.2,781.6" fill="#545658" stroke="#545658" stroke-width="0.4"/><polygon points="380.5,778.8 385.4,785.3 379.9,792.9 375.6,786.9" fill="#4a4b4c" stroke="#4a4b4c" stroke-width="0.4"/><polygon points="385.4,785.3 389.0,792.4 383.1,799.4 379.9,792.9" fill="#3e3f41" stroke="#3e3f41" stroke-width="0.4"/><polygon points="389.0,792.4 391.2,799.9 385.0,806.2 383.1,799.4" fill="#38393a" stroke="#38393a" stroke-width="0.4"/><polygon points="391.2,799.9 391.9,807.4 385.6,812.9 385.0,806.2" fill="#333334" stroke="#333334" stroke-width="0.4"/><polygon points="391.9,807.4 391.0,814.8 384.7,819.4 385.6,812.9" fill="#303031" stroke="#303031" stroke-width="0.4"/><polygon points="391.0,814.8 388.7,821.6 382.6,825.4 384.7,819.4" fill="#2d2d2e" stroke="#2d2d2e" stroke-width="0.4"/><polygon points="388.7,821.6 384.9,827.7 379.1,830.6 382.6,825.4" fill="#2b2b2c" stroke="#2b2b2c" stroke-width="0.4"/><ellipse cx="349.8" cy="806" rx="38.3" ry="31.8" transform="rotate(40 349.8 806)" fill="#47484a" /><polygon points="366.2,822.1 363.5,824.6 365.5,814.8 367.5,812.9" fill="#c6c7c8" stroke="#c6c7c8" stroke-width="0.4"/><polygon points="363.5,824.6 360.2,826.5 363.1,816.2 365.5,814.8" fill="#c8c9ca" stroke="#c8c9ca" stroke-width="0.4"/><polygon points="360.2,826.5 356.5,827.6 360.3,817.1 363.1,816.2" fill="#c9cacb" stroke="#c9cacb" stroke-width="0.4"/><polygon points="356.5,827.6 352.5,828.0 357.3,817.4 360.3,817.1" fill="#cbcccd" stroke="#cbcccd" stroke-width="0.4"/><polygon points="352.5,828.0 348.3,827.6 354.2,817.1 357.3,817.4" fill="#c7c8c9" stroke="#c7c8c9" stroke-width="0.4"/><polygon points="348.3,827.6 344.2,826.4 351.1,816.2 354.2,817.1" fill="#c3c4c5" stroke="#c3c4c5" stroke-width="0.4"/><polygon points="344.2,826.4 340.2,824.5 348.2,814.7 351.1,816.2" fill="#b5b6b7" stroke="#b5b6b7" stroke-width="0.4"/><polygon points="340.2,824.5 336.6,821.9 345.4,812.8 348.2,814.7" fill="#a4a5a6" stroke="#a4a5a6" stroke-width="0.4"/><polygon points="336.6,821.9 333.4,818.7 343.1,810.5 345.4,812.8" fill="#909192" stroke="#909192" stroke-width="0.4"/><polygon points="333.4,818.7 330.8,815.2 341.1,807.8 343.1,810.5" fill="#7c7d7e" stroke="#7c7d7e" stroke-width="0.4"/><polygon points="330.8,815.2 328.9,811.3 339.7,804.9 341.1,807.8" fill="#6a6b6b" stroke="#6a6b6b" stroke-width="0.4"/><polygon points="328.9,811.3 327.8,807.3 338.9,801.9 339.7,804.9" fill="#595a5a" stroke="#595a5a" stroke-width="0.4"/><polygon points="327.8,807.3 327.4,803.3 338.6,798.9 338.9,801.9" fill="#4f4f4f" stroke="#4f4f4f" stroke-width="0.4"/><polygon points="327.4,803.3 327.9,799.4 339.0,796.0 338.6,798.9" fill="#4a4949" stroke="#4a4949" stroke-width="0.4"/><polygon points="327.9,799.4 329.2,795.9 340.0,793.4 339.0,796.0" fill="#454443" stroke="#454443" stroke-width="0.4"/><polygon points="329.2,795.9 331.2,792.7 341.5,791.1 340.0,793.4" fill="#424140" stroke="#424140" stroke-width="0.4"/><polygon points="331.2,792.7 333.9,790.2 343.5,789.2 341.5,791.1" fill="#403f3e" stroke="#403f3e" stroke-width="0.4"/><polygon points="333.9,790.2 337.2,788.3 345.9,787.8 343.5,789.2" fill="#3d3c3b" stroke="#3d3c3b" stroke-width="0.4"/><polygon points="337.2,788.3 340.9,787.2 348.7,786.9 345.9,787.8" fill="#3c3b3a" stroke="#3c3b3a" stroke-width="0.4"/><polygon points="340.9,787.2 344.9,786.8 351.7,786.6 348.7,786.9" fill="#3b3b3a" stroke="#3b3b3a" stroke-width="0.4"/><polygon points="344.9,786.8 349.1,787.2 354.8,786.9 351.7,786.6" fill="#3a3a3a" stroke="#3a3a3a" stroke-width="0.4"/><polygon points="349.1,787.2 353.2,788.4 357.9,787.8 354.8,786.9" fill="#3d3d3d" stroke="#3d3d3d" stroke-width="0.4"/><polygon points="353.2,788.4 357.2,790.3 360.8,789.3 357.9,787.8" fill="#414141" stroke="#414141" stroke-width="0.4"/><polygon points="357.2,790.3 360.8,792.9 363.6,791.2 360.8,789.3" fill="#464646" stroke="#464646" stroke-width="0.4"/><polygon points="360.8,792.9 364.0,796.1 365.9,793.5 363.6,791.2" fill="#4d4d4d" stroke="#4d4d4d" stroke-width="0.4"/><polygon points="364.0,796.1 366.6,799.6 367.9,796.2 365.9,793.5" fill="#616262" stroke="#616262" stroke-width="0.4"/><polygon points="366.6,799.6 368.5,803.5 369.3,799.1 367.9,796.2" fill="#757677" stroke="#757677" stroke-width="0.4"/><polygon points="368.5,803.5 369.6,807.5 370.1,802.1 369.3,799.1" fill="#8a8b8c" stroke="#8a8b8c" stroke-width="0.4"/><polygon points="369.6,807.5 370.0,811.5 370.4,805.1 370.1,802.1" fill="#a1a2a3" stroke="#a1a2a3" stroke-width="0.4"/><polygon points="370.0,811.5 369.5,815.4 370.0,808.0 370.4,805.1" fill="#b5b6b7" stroke="#b5b6b7" stroke-width="0.4"/><polygon points="369.5,815.4 368.2,818.9 369.0,810.6 370.0,808.0" fill="#bbbcbd" stroke="#bbbcbd" stroke-width="0.4"/><polygon points="368.2,818.9 366.2,822.1 367.5,812.9 369.0,810.6" fill="#c0c1c2" stroke="#c0c1c2" stroke-width="0.4"/><ellipse cx="354.5" cy="802" rx="17" ry="14.1" transform="rotate(40 354.5 802)" fill="#84878a" /></g><path d="M122.300 721.4 L116 668.6 L112.500 666.9 L109.9 658.7 L169 612.6 L192.300 625.6 L191.400 632.5 L190.800 668.6 L192.5 669.3 L296.5 655.8 L310 666.5 L337.5 677.5 L349.3 664.8 L359 665.6 L359.3 680 L382.7 698.5 L446 755.5" stroke="#ffa028" stroke-width="1.5" fill="none" stroke-linejoin="round"/><path d="M144.900 672.2 L162.300 656.4 L163.400 671 L163.700 690.9 L152.800 700.6 L148 701 Z" stroke="#ffa028" stroke-width="1.5" fill="none" stroke-linejoin="round"/><path d="M199 750 L202.500 751.500 L205.200 767.500 L304 787.300 L312.600 779.600" stroke="#ffa028" stroke-width="1.5" fill="none" stroke-linejoin="round"/><path d="M446 755.500 L451.700 749.500 L454.600 731.400 L457.300 726.900 L493 747.600 L489.400 758.600 L451.200 830.400 L409.800 819.300 L414 786.200 L400.500 784" stroke="#ffa028" stroke-width="1.5" fill="none" stroke-linejoin="round"/><path d="M122.3 721.4 C119.8 725.4 119.6 722.5 117.5 728.0 C115.4 733.5 116.0 731.3 116.0 738.0 C116.0 744.7 116.0 741.5 117.5 748.0 C119.0 754.5 117.7 751.2 120.5 757.5 C123.3 763.8 121.8 760.8 126.0 767.0 C130.2 773.2 128.0 771.0 133.0 776.0 C138.0 781.0 135.5 778.7 141.0 782.0 C146.5 785.3 143.8 783.9 149.5 786.0 C155.2 788.1 152.8 787.6 158.0 788.3 C163.2 789.0 160.3 789.3 165.0 788.2 C169.7 787.1 167.2 788.0 172.0 785.0 C176.8 782.0 174.6 783.2 179.3 779.2 C184.0 775.2 181.6 777.6 186.0 773.0 C190.4 768.4 188.8 770.8 192.5 765.5 C196.2 760.2 194.8 762.8 197.0 757.0 C199.2 751.2 199.0 754.3 199.2 748.0 C199.4 741.7 199.3 744.3 197.6 738.0 C195.9 731.7 196.9 734.7 194.0 729.0 C191.1 723.3 192.8 726.3 189.0 721.0 C185.2 715.7 187.3 717.8 182.5 713.0 C177.7 708.2 180.2 710.2 174.5 706.5 C168.8 702.8 171.7 704.0 165.5 702.0 C159.3 700.0 162.5 700.6 156.0 700.6 C149.5 700.6 152.0 700.6 146.0 702.0 C140.0 703.4 143.2 702.3 138.0 704.8 C132.8 707.3 134.8 705.8 130.5 709.5 C126.2 713.2 127.7 712.0 125.0 716.0 C122.3 720.0 124.8 717.4 122.3 721.4 Z" stroke="#e8670a" stroke-width="1.5" fill="none" stroke-linejoin="round"/><path d="M317.2 778.8 C314.1 784.6 314.9 781.3 313.2 787.0 C311.5 792.7 312.3 790.0 312.2 796.0 C312.1 802.0 311.9 799.3 313.0 805.0 C314.1 810.7 313.0 807.5 315.5 813.0 C318.0 818.5 316.4 816.1 320.5 821.5 C324.6 826.9 322.6 824.7 327.9 829.2 C333.2 833.7 330.4 831.7 336.5 835.0 C342.6 838.3 340.1 837.1 346.1 839.1 C352.1 841.1 349.0 840.5 354.5 841.0 C360.0 841.5 357.1 841.8 362.6 840.7 C368.1 839.6 365.5 840.3 371.0 837.6 C376.5 834.9 373.8 836.7 379.1 832.5 C384.4 828.3 382.1 830.5 387.0 825.0 C391.9 819.5 390.2 821.9 393.9 815.9 C397.6 809.9 395.8 813.0 398.0 807.0 C400.2 801.0 399.6 803.5 400.5 797.8 C401.4 792.1 401.1 794.7 400.8 790.0 C400.5 785.3 401.1 788.3 399.7 783.8 C398.3 779.3 399.0 781.2 396.5 776.5 C394.0 771.8 395.8 774.4 392.3 769.7 C388.8 765.0 390.4 766.9 386.0 762.5 C381.6 758.1 384.1 760.0 379.1 756.5 C374.1 753.0 376.5 754.5 371.0 752.0 C365.5 749.5 368.3 750.0 362.6 749.1 C356.9 748.2 359.5 748.4 354.0 749.2 C348.5 750.0 351.6 749.4 346.1 751.6 C340.6 753.8 343.0 752.5 337.5 755.8 C332.0 759.1 334.5 756.9 329.5 761.5 C324.5 766.1 326.6 763.7 322.5 769.5 C318.4 775.3 320.3 773.0 317.2 778.8 Z" stroke="#e8670a" stroke-width="1.5" fill="none" stroke-linejoin="round"/><path d="M190.5 668.6 C191.2 666.9 190.2 667.7 192.5 663.5 C194.8 659.3 193.9 660.5 197.4 656.0 C200.9 651.5 199.0 653.7 203.0 650.0 C207.0 646.3 205.0 647.9 209.5 645.0 C214.0 642.1 211.7 643.2 216.5 641.2 C221.3 639.2 219.2 639.9 224.0 639.0 C228.8 638.1 226.3 638.2 231.0 638.5 C235.7 638.8 233.3 638.2 238.0 640.0 C242.7 641.8 240.6 640.8 245.0 644.0 C249.4 647.2 247.6 645.7 251.3 649.7 C255.0 653.7 253.6 652.1 256.0 656.0 C258.4 659.9 257.7 659.7 258.5 661.5" stroke="#e8670a" stroke-width="1.5" fill="none" stroke-linejoin="round"/><path d="M382.7 698.5 C383.6 696.5 383.2 696.2 385.5 692.5 C387.8 688.8 386.2 690.7 389.5 687.5 C392.8 684.3 391.2 685.5 395.5 682.8 C399.8 680.1 397.7 681.1 402.5 679.5 C407.3 677.9 405.1 678.5 410.0 678.0 C414.9 677.5 412.3 677.4 417.3 678.0 C422.3 678.6 420.0 678.2 425.0 679.8 C430.0 681.4 427.7 680.4 432.2 682.9 C436.7 685.4 434.6 684.0 438.5 687.3 C442.4 690.6 440.7 688.9 443.8 692.8 C446.9 696.7 445.6 694.6 447.8 699.0 C450.0 703.4 449.1 701.7 450.4 706.0 C451.7 710.3 451.3 708.1 451.8 712.0 C452.3 715.9 452.3 713.6 452.0 717.6 C451.7 721.6 452.0 719.9 451.0 724.0 C450.0 728.1 450.8 725.7 449.0 730.0 C447.2 734.3 448.0 732.5 445.5 737.0 C443.0 741.5 443.8 739.9 441.5 743.5 C439.2 747.1 439.6 746.3 438.6 747.7" stroke="#e8670a" stroke-width="1.5" fill="none" stroke-linejoin="round"/><circle cx="493.5" cy="755.8" r="2.6" fill="#ffa028" stroke="#1a1a1a" stroke-width="0.8"/><circle cx="167.9" cy="735" r="2.6" fill="#f0600a" stroke="#1a1a1a" stroke-width="0.8"/><circle cx="217.6" cy="689.1" r="2.6" fill="#f0600a" stroke="#1a1a1a" stroke-width="0.8"/><circle cx="364.9" cy="784.6" r="2.6" fill="#f0600a" stroke="#1a1a1a" stroke-width="0.8"/><circle cx="404.1" cy="732.4" r="2.6" fill="#f0600a" stroke="#1a1a1a" stroke-width="0.8"/></g></svg>
<div class="hdr">
<div class="btn" style="left:8px;top:5px;width:30px"><svg style="left:2px;top:1px" width="16" height="16" viewBox="0 0 16 16"><g fill="none" stroke="#d4d4d4" stroke-width="1.1" stroke-linecap="round"><path d="M3.100 7.400 H8.900 M1.900 11.500 H15.900 M6.400 4.900 L4.600 15 M12.600 9.200 L13.700 15"/></g><circle cx="12.600" cy="4.500" r="3.500" fill="#d4d4d4"/><path d="M10.600 4.300 A2.300 2.300 0 0 1 12.400 2.300" fill="none" stroke="#555" stroke-width="0.700"/></svg><svg style="left:20.4px;top:6.3px" width="9" height="7" viewBox="0 0 9 7"><path d="M1.600 1.500 L4.500 4.500 L7.400 1.500" fill="none" stroke="#c6c6c6" stroke-width="1.500" stroke-linecap="round" stroke-linejoin="round"/></svg></div>
<svg style="left:51px;top:3px" width="22" height="22" viewBox="0 0 22 22"><rect x="0.6" y="0.6" width="20.8" height="20.8" fill="none" stroke="#ffa92a" stroke-width="1.05" stroke-dasharray="3.65 1.55" stroke-dashoffset="1.82"/><path d="M7.6 5.2 L15.6 11.3 L11.2 12 L7.9 16.3 Z" fill="#dedede"/></svg>
<div class="btn on" style="left:88.0px;top:5px;width:18.2px;border-radius:3px 0 0 3px;"><svg style="left:1px;top:1px" width="16" height="16" viewBox="0 0 16 16"><rect x="2" y="2.5" width="12" height="11.5" fill="none" stroke="#fff" stroke-width="1" stroke-dasharray="2.1 1.2"/></svg></div>
<div class="btn tog" style="left:106.8px;top:5px;width:18.2px;border-radius:0;"><svg style="left:1px;top:1px" width="16" height="16" viewBox="0 0 16 16"><path d="M6 2 H14.5 V10 H10 V14.5 H1.5 V6.5 H6 Z" fill="#d0d0d0"/></svg></div>
<div class="btn tog" style="left:125.6px;top:5px;width:18.2px;border-radius:0;"><svg style="left:1px;top:1px" width="16" height="16" viewBox="0 0 16 16"><path d="M6 2 H14.5 V10 H10 V6.5 H6 Z" fill="#d0d0d0"/><rect x="2" y="7" width="7.5" height="7" fill="none" stroke="#d0d0d0" stroke-width="1" stroke-dasharray="1.8 1.2"/></svg></div>
<div class="btn tog" style="left:144.4px;top:5px;width:18.2px;border-radius:0;"><svg style="left:1px;top:1px" width="16" height="16" viewBox="0 0 16 16"><path d="M6 2 H14.5 V10 H10 V14.5 H1.5 V6.5 H6 Z M6 6.5 V10 H10 V6.5 Z" fill="#d0d0d0" fill-rule="evenodd"/></svg></div>
<div class="btn tog" style="left:163.2px;top:5px;width:18.2px;border-radius:0 3px 3px 0;"><svg style="left:1px;top:1px" width="16" height="16" viewBox="0 0 16 16"><rect x="2" y="2.5" width="12" height="11.5" fill="none" stroke="#d0d0d0" stroke-width="1" stroke-dasharray="2 1.3"/><rect x="5" y="5.5" width="6" height="5.5" fill="#d0d0d0"/></svg></div>
<div class="btn" style="left:200px;top:5px;width:78px"><svg style="left:5px;top:1px" width="16" height="16" viewBox="0 0 16 16"><g fill="none" stroke="#d4d4d4" stroke-width="1.2" stroke-linecap="round" stroke-linejoin="round"><path d="M4.5 2 V10.5 L14 14 M4.5 10.5 L2 14.5"/><path d="M2.5 4 L4.5 1.5 L6.5 4 M11.5 15 L14.5 14 L12.8 11.5"/></g><circle cx="4.5" cy="10.5" r="1.3" fill="#d4d4d4"/></svg><span class="t" style="left:25px">Global</span><svg style="left:67.9px;top:6.3px" width="9" height="7" viewBox="0 0 9 7"><path d="M1.600 1.500 L4.500 4.500 L7.400 1.500" fill="none" stroke="#c6c6c6" stroke-width="1.500" stroke-linecap="round" stroke-linejoin="round"/></svg></div>
<div class="btn" style="left:285px;top:5px;width:30px"><svg style="left:3px;top:1px" width="16" height="16" viewBox="0 0 16 16"><g fill="none" stroke="#d4d4d4" stroke-width="1.150"><circle cx="4.900" cy="10.500" r="3.900"/><circle cx="10.400" cy="4.900" r="3.900"/></g><circle cx="8.200" cy="7.500" r="1.350" fill="#d4d4d4"/></svg><svg style="left:19.4px;top:6.3px" width="9" height="7" viewBox="0 0 9 7"><path d="M1.600 1.500 L4.500 4.500 L7.400 1.500" fill="none" stroke="#c6c6c6" stroke-width="1.500" stroke-linecap="round" stroke-linejoin="round"/></svg></div>
<div class="btn tog" style="left:322px;top:5px;width:18.5px;border-radius:3px 0 0 3px"><svg style="left:1px;top:1px" width="16" height="16" viewBox="0 0 16 16"><path d="M1.600 6.600 L6.500 2.300 C9.500 0 13.500 1.500 14.600 5.400 C15.400 8 14.500 10.500 12.500 12.400 L10.100 14.700 L8.300 12.600 L10.800 10.300 C12.200 9 12.400 7.300 11.600 6 C10.600 4.300 8.700 4 7.600 4.900 L3.600 8.500 Z" fill="none" stroke="#a2a2a2" stroke-width="1" stroke-linejoin="round"/></svg></div>
<div class="btn" style="left:341px;top:5px;width:31px;border-radius:0 3px 3px 0"><svg style="left:2px;top:1px" width="16" height="16" viewBox="0 0 16 16"><g stroke="#d4d4d4" stroke-width="1.150" fill="none"><path d="M2.200 10.300 H14.600 M2.200 6.900 V13.800 M14.600 6.900 V13.800 M6.300 8.400 V12.400 M10.500 8.400 V12.400"/></g><rect x="12.100" y="1.200" width="3.800" height="3.600" fill="#d4d4d4"/></svg><svg style="left:20.4px;top:6.3px" width="9" height="7" viewBox="0 0 9 7"><path d="M1.600 1.500 L4.500 4.500 L7.400 1.500" fill="none" stroke="#c6c6c6" stroke-width="1.500" stroke-linecap="round" stroke-linejoin="round"/></svg></div>
<div class="btn tog" style="left:379px;top:5px;width:18px;border-radius:3px 0 0 3px"><svg style="left:1px;top:1px" width="16" height="16" viewBox="0 0 16 16"><circle cx="8" cy="8" r="6.700" fill="none" stroke="#8a8a8a" stroke-width="0.900"/><circle cx="8" cy="8" r="2" fill="#b0b0b0"/></svg></div>
<div class="btn" style="left:397.5px;top:5px;width:31px;border-radius:0 3px 3px 0;background:#383838"><svg style="left:2px;top:1px" width="16" height="16" viewBox="0 0 16 16"><path d="M2 13.500 C6 13.500 6.200 2.600 9 2.600 C11.800 2.600 12 13.500 16 13.500" fill="none" stroke="#a0a0a0" stroke-width="1.100"/></svg><svg style="left:20.4px;top:6.3px" width="9" height="7" viewBox="0 0 9 7"><path d="M1.600 1.500 L4.500 4.500 L7.400 1.500" fill="none" stroke="#8a8a8a" stroke-width="1.500" stroke-linecap="round" stroke-linejoin="round"/></svg></div>
<div class="btn" style="left:452px;top:5px;width:61px"><span class="t" style="left:7.5px">Options</span><svg style="left:50.9px;top:6.3px" width="9" height="7" viewBox="0 0 9 7"><path d="M1.600 1.500 L4.500 4.500 L7.400 1.500" fill="none" stroke="#c6c6c6" stroke-width="1.500" stroke-linecap="round" stroke-linejoin="round"/></svg></div>
</div>
<div class="btn" style="left:9px;top:30px;width:108px"><svg style="left:3px;top:1px" width="16" height="16" viewBox="0 0 16.5 16.5"><rect x="4.5" y="4.5" width="7.5" height="7.5" fill="#d4d4d4"/><path d="M1.5 5 V1.5 H5 M11.5 1.5 H15 V5 M15 11.5 V15 H11.5 M5 15 H1.5 V11.5" fill="none" stroke="#d4d4d4" stroke-width="1.1"/></svg><span class="t" style="left:25.5px">Object Mode</span><svg style="left:97.9px;top:6.3px" width="9" height="7" viewBox="0 0 9 7"><path d="M1.600 1.500 L4.500 4.500 L7.400 1.500" fill="none" stroke="#c6c6c6" stroke-width="1.500" stroke-linecap="round" stroke-linejoin="round"/></svg></div>
<div class="pd" style="left:124px;width:38px"><span class="t" style="left:6.5px">View</span></div>
<div class="pd" style="left:164px;width:44px"><span class="t" style="left:6.5px">Select</span></div>
<div class="pd" style="left:210px;width:32px"><span class="t" style="left:6px">Add</span></div>
<div class="pd" style="left:243.5px;width:47.5px;background:#5680c2;border-radius:3px 3px 0 0;height:19px"><span class="t" style="left:7px;color:#fff">Object</span></div>
<div class="btn" style="left:308px;top:30px;width:30px"><svg style="left:2px;top:1px" width="17" height="16" viewBox="0 0 17 16"><path d="M6 4.700 C8.200 0.900 13.800 0.900 16 4.700 C13.800 8.500 8.200 8.500 6 4.700 Z" fill="none" stroke="#d4d4d4" stroke-width="1.300"/><circle cx="11" cy="4.600" r="1.800" fill="#d4d4d4"/><path d="M1.900 7.200 L8.600 10.400 L5.600 11.300 L4.300 14.700 Z" fill="#d4d4d4"/></svg><svg style="left:19.4px;top:6.3px" width="9" height="7" viewBox="0 0 9 7"><path d="M1.600 1.500 L4.500 4.500 L7.400 1.500" fill="none" stroke="#c6c6c6" stroke-width="1.500" stroke-linecap="round" stroke-linejoin="round"/></svg></div>
<div class="btn on" style="left:345px;top:30px;width:18px;border-radius:3px 0 0 3px"><svg style="left:1px;top:1px" width="16" height="16" viewBox="0 0 16 16"><g fill="none" stroke="#fff" stroke-width="1.100" stroke-linecap="round"><path d="M4.600 11.400 L13.600 2.400 M9.800 2.400 H13.600 V6.200"/><path d="M1.800 3.800 C7.800 3.800 12.300 8 12.300 14.400"/><circle cx="3.500" cy="12.500" r="1.600"/></g></svg></div>
<div class="btn" style="left:363.5px;top:30px;width:19px;border-radius:0 3px 3px 0"><svg style="left:5.9px;top:6.3px" width="9" height="7" viewBox="0 0 9 7"><path d="M1.600 1.500 L4.500 4.500 L7.400 1.500" fill="none" stroke="#c6c6c6" stroke-width="1.500" stroke-linecap="round" stroke-linejoin="round"/></svg></div>
<div class="btn on" style="left:390px;top:30px;width:18px;border-radius:3px 0 0 3px"><svg style="left:1px;top:1px" width="16" height="16" viewBox="0 0 16 16"><circle cx="6.400" cy="9.700" r="4.800" fill="none" stroke="#fff" stroke-width="1.200"/><circle cx="10.100" cy="5.900" r="5" fill="#5680c2"/><circle cx="10.100" cy="5.900" r="4.400" fill="#fff"/><path d="M6.400 4.900 A4.800 4.800 0 0 1 11.200 9.700" fill="none" stroke="#5680c2" stroke-width="1.100"/></svg></div>
<div class="btn" style="left:408.5px;top:30px;width:19px;border-radius:0 3px 3px 0"><svg style="left:5.9px;top:6.3px" width="9" height="7" viewBox="0 0 9 7"><path d="M1.600 1.500 L4.500 4.500 L7.400 1.500" fill="none" stroke="#c6c6c6" stroke-width="1.500" stroke-linecap="round" stroke-linejoin="round"/></svg></div>
<div class="btn tog" style="left:435px;top:30px;width:18px"><svg style="left:1px;top:1px" width="16" height="16" viewBox="0 0 16 16"><g fill="none" stroke="#e6e6e6" stroke-width="1.150"><path d="M3.400 3.900 V1.400 H14.600 V12.200 H12.100"/><rect x="1.100" y="3.900" width="11" height="10.700"/><path d="M4.200 7.500 V11.300 H8" stroke-dasharray="1.700 1.100"/></g></svg></div>
<div class="btn tog" style="left:460.0px;top:30px;width:18.2px;border-radius:3px 0 0 3px;"><svg style="left:1px;top:1px" width="16" height="16" viewBox="0 0 16 16"><g fill="none" stroke="#d4d4d4" stroke-width="0.9"><circle cx="8" cy="8" r="6.300"/><path d="M2.200 6 H13.800 M2.200 10 H13.800 M8 1.700 V14.300 M8 1.700 C4.800 5 4.800 11 8 14.300"/></g></svg></div>
<div class="btn on" style="left:478.7px;top:30px;width:18.2px;border-radius:0;"><svg style="left:1px;top:1px" width="16" height="16" viewBox="0 0 16 16"><circle cx="8" cy="8" r="6.9" fill="#fff"/></svg></div>
<div class="btn tog" style="left:497.4px;top:30px;width:18.2px;border-radius:0;"><svg style="left:1px;top:1px" width="16" height="16" viewBox="0 0 16 16"><circle cx="8" cy="8" r="6" fill="none" stroke="#d4d4d4" stroke-width="1.1"/><path d="M8 2 A6 6 0 0 0 3 11.5 L8 8 Z" fill="#b8b8b8"/><path d="M8 8 L12.5 12" stroke="#d4d4d4" stroke-width="1"/></svg></div>
<div class="btn tog" style="left:516.1px;top:30px;width:18.2px;border-radius:0;"><svg style="left:1px;top:1px" width="16" height="16" viewBox="0 0 16 16"><circle cx="8" cy="8" r="6" fill="none" stroke="#d4d4d4" stroke-width="1.1"/></svg></div>
<span class="vt" style="top:62px">User Perspective</span>
<span class="vt" style="top:82px">(1) Collection | body</span>
<div class="tool" style="top:61px;height:33px;border-radius:4px 4px 0 0;background:#5680c2;"><svg style="left:0px;top:0px" width="40" height="34" viewBox="0 0 40 34"><rect x="8.4" y="6.4" width="21.4" height="21.2" fill="none" stroke="#ffb347" stroke-width="1.05" stroke-dasharray="3.7 1.6" stroke-dashoffset="1.85"/><path d="M15.6 10.8 L24 18 L19.4 18.9 L16.2 23 Z" fill="#dfe3ea"/><path d="M39 28.5 V33 H34.5 Z" fill="#a9bfe3"/></svg></div>
<div class="tool" style="top:95px;height:34px;border-radius:0 0 4px 4px;"><svg style="left:0px;top:0px" width="40" height="34" viewBox="0 0 40 34"><circle cx="18.9" cy="16.7" r="11.2" fill="none" stroke="#ececec" stroke-width="1.3"/><circle cx="18.9" cy="16.7" r="11.2" fill="none" stroke="#b23a45" stroke-width="1.3" stroke-dasharray="4.4 4.4" stroke-dashoffset="2.2"/><path d="M18.9 8.7 V14 M18.9 19.400 V24.700 M10.900 16.700 H16.200 M21.600 16.700 H26.900" stroke="#9c9c9c" stroke-width="1.5"/></svg></div>
<div class="tool" style="top:136px;height:34px;border-radius:4px 4px 0 0;"><svg style="left:0px;top:0px" width="40" height="34" viewBox="0 0 40 34"><g fill="#dedede"><path d="M18.9 5.200 L21.700 9.600 H16.100 Z M18.900 28.600 L21.700 24.200 H16.100 Z M7.200 16.900 L11.600 14.100 V19.700 Z M30.600 16.900 L26.200 14.100 V19.700 Z"/></g><path d="M18.900 10.500 V14 M18.900 19.800 V23.300 M12.500 16.900 H16 M21.800 16.900 H25.300" stroke="#dedede" stroke-width="1.5"/></svg></div>
<div class="tool" style="top:170.5px;height:34px;border-radius:0;"><svg style="left:0px;top:0px" width="40" height="34" viewBox="0 0 40 34"><g fill="none" stroke="#dedede" stroke-width="1.2"><path d="M10.800 13.200 A9.300 9.300 0 0 1 27 13.200"/><path d="M27 21 A9.300 9.300 0 0 1 10.800 21"/></g><path d="M7.300 15.300 H12.700 L10 19.800 Z M25.100 18.900 H30.500 L27.800 14.400 Z" fill="#dedede"/><path d="M18.900 13.600 L22.400 17.100 L18.900 20.600 L15.400 17.100 Z" fill="#b8b8b8"/></svg></div>
<div class="tool" style="top:205px;height:34px;border-radius:0;"><svg style="left:0px;top:0px" width="40" height="34" viewBox="0 0 40 34"><rect x="10" y="17" width="8.600" height="8.800" fill="#e2e2e2"/><path d="M10.500 16.500 V8.800 H27.500 V24.900 H19" fill="none" stroke="#9c9c9c" stroke-width="1"/><path d="M20.300 16.200 L25.600 11.200 M22.600 10.700 H26.200 V14.300" fill="none" stroke="#e2e2e2" stroke-width="1.2"/><path d="M39 28.500 V33 H34.500 Z" fill="#7c7c7c"/></svg></div>
<div class="tool" style="top:239.5px;height:35px;border-radius:0 0 4px 4px;"><svg style="left:0px;top:0px" width="40" height="35" viewBox="0 0 40 35"><circle cx="18.900" cy="17.800" r="9.800" fill="none" stroke="#dedede" stroke-width="1.100" stroke-dasharray="10.400 5" stroke-dashoffset="-2.500"/><rect x="15.300" y="14.200" width="7.200" height="7.200" fill="#dedede"/><g fill="#dedede"><path d="M18.900 6.500 L21.200 9.900 H16.600 Z M18.900 29.100 L21.200 25.700 H16.600 Z M7.600 17.800 L11 15.500 V20.100 Z M30.200 17.800 L26.800 15.500 V20.100 Z"/></g></svg></div>
<div class="tool" style="top:281px;height:34px;border-radius:4px 4px 0 0;"><svg style="left:0px;top:0px" width="40" height="34" viewBox="0 0 40 34"><path d="M7.300 22.600 L8.600 18.300 L20.200 6.700 L23.500 10 L11.900 21.600 Z" fill="#e4e4e4"/><path d="M21.200 5.700 L22.400 4.500 L25.700 7.800 L24.500 9 Z" fill="#e4e4e4"/><path d="M7.300 22.600 L8 20.300 L9.600 21.900 Z" fill="#555"/><path d="M8.700 24.300 C12 26.500 15 26.800 18.500 23.500 C22 20 26.500 19.500 32 24" fill="none" stroke="#8fe3b8" stroke-width="1.300"/><path d="M39 28.500 V33 H34.500 Z" fill="#7c7c7c"/></svg></div>
<div class="tool" style="top:315.5px;height:34px;border-radius:0 0 4px 4px;"><svg style="left:0px;top:0px" width="40" height="34" viewBox="0 0 40 34"><path d="M15.900 24.900 V15.400 A9.500 9.500 0 0 1 25.400 24.900 Z" fill="#8fe3b8"/><path d="M15.900 12.700 A12.200 12.200 0 0 1 28.100 24.900" fill="none" stroke="#8fe3b8" stroke-width="1.100"/><rect x="10.500" y="4.800" width="5.400" height="23.300" fill="#e4e4e4"/><rect x="10.500" y="24.900" width="20.600" height="3.200" fill="#e4e4e4"/><path d="M13.200 7.500 H15.900 M13.200 10.500 H15.900 M13.200 13.500 H15.900 M13.200 16.500 H15.900 M13.200 19.500 H15.900 M13.200 22.500 H15.900 M18.500 24.900 V26.500 M21 24.900 V26.500 M23.500 24.900 V26.500 M26 24.900 V26.500 M28.500 24.900 V26.500" stroke="#2c2c2c" stroke-width="0.9"/></svg></div>
<svg style="left:425px;top:60px" width="96" height="90" viewBox="428 65 96 90"><line x1="474" y1="107" x2="474" y2="90" stroke="#2f83e8" stroke-width="1.700"/><line x1="474" y1="107" x2="462" y2="126" stroke="#ee3352" stroke-width="1.3"/><line x1="474" y1="107" x2="499" y2="116" stroke="#8bdc00" stroke-width="1.3"/><circle cx="488.200" cy="84.400" r="6.2" fill="#96404f"/><circle cx="444.900" cy="96" r="6.2" fill="#5f8a20"/><circle cx="474" cy="127.700" r="6.2" fill="#2c64a3"/><circle cx="474" cy="86" r="7.9" fill="#2e8fff"/><circle cx="503.300" cy="117.300" r="7.9" fill="#8bdc00"/><circle cx="460" cy="129" r="7.9" fill="#ff3352"/><text x="474" y="89.7" style="font-family:'DejaVu Sans Condensed','DejaVu Sans',sans-serif;font-size:10px;font-stretch:condensed;fill:#0a0a0a;text-anchor:middle">Z</text><text x="503.3" y="121" style="font-family:'DejaVu Sans Condensed','DejaVu Sans',sans-serif;font-size:10px;font-stretch:condensed;fill:#0a0a0a;text-anchor:middle">Y</text><text x="460" y="132.700" style="font-family:'DejaVu Sans Condensed','DejaVu Sans',sans-serif;font-size:10px;font-stretch:condensed;fill:#0a0a0a;text-anchor:middle">X</text></svg>
<div class="nav" style="top:142.5px"><svg style="left:0px;top:1px" width="28" height="28" viewBox="0 0 28 28"><circle cx="15.500" cy="11.500" r="5.300" fill="none" stroke="#dcdcdc" stroke-width="1.600"/><path d="M11.500 15.500 L6.500 20.500" stroke="#dcdcdc" stroke-width="2.200" stroke-linecap="round"/><path d="M15.500 8.700 V14.300 M12.700 11.500 H18.300" stroke="#dcdcdc" stroke-width="1.300"/></svg></div>
<div class="nav" style="top:172.7px"><svg style="left:0px;top:1px" width="28" height="28" viewBox="0 0 28 28"><path d="M8.500 13 C7 11.500 5 12 6 13.500 L10.500 20 C12 22 17 22 18.500 19.500 C20 16.500 21 11 21 9 C21 7.800 19.500 7.800 19.300 9 L18.500 13 L18 7 C18 5.500 16.200 5.500 16.200 7 L16 12.500 L15 6 C14.800 4.500 13 4.800 13.200 6.200 L13.700 12.800 L11.800 7.500 C11.300 6.200 9.700 6.800 10.200 8.200 L12 15.500 Z" fill="#dcdcdc"/></svg></div>
<div class="nav" style="top:203.3px"><svg style="left:0px;top:1px" width="28" height="28" viewBox="0 0 28 28"><g fill="#dcdcdc"><circle cx="10" cy="10" r="3.400"/><circle cx="16.500" cy="8.800" r="4.200"/><rect x="8" y="13.500" width="10.500" height="7" rx="1"/><path d="M19 17 L23 14.500 V19.500 Z"/></g><circle cx="10" cy="10" r="1.200" fill="#555"/><circle cx="16.500" cy="8.800" r="1.500" fill="#555"/></svg></div>
<div class="nav" style="top:233.5px"><svg style="left:0px;top:1px" width="28" height="28" viewBox="0 0 28 28"><g fill="none" stroke="#dcdcdc" stroke-width="1.300"><path d="M9.500 8 H18.500 L22 20.500 H6 Z M8.300 12 H19.700 M7.200 16 H20.800 M12.500 8 L11.300 20.500 M15.500 8 L16.700 20.500"/></g></svg></div>
<div style="left:513px;top:67px;width:9px;height:13px;background:rgba(30,30,30,.55);border-radius:3px 0 0 3px"><svg style="left:1px;top:2px" width="7" height="9" viewBox="0 0 7 9"><path d="M5.500 1 L1.500 4.500 L5.500 8" fill="none" stroke="#a0a0a0" stroke-width="1.100"/></svg></div>
<div class="menu" style="left:243.6px;top:48.5px;width:188.6px;height:380px">
<div class="mi" style="top:3px"><span class="ml"><u>T</u>ransform</span><svg style="right:3.2px;top:6.5px" width="6" height="8" viewBox="0 0 6 8"><path d="M0 0.5 L6 4 L0 7.5 Z" fill="#adadad"/></svg></div>
<div class="mi" style="top:23px"><span class="ml"><u>S</u>et Origin</span><span class="ms" style="">Shift ⌥ ⌘ C</span><svg style="right:3.2px;top:6.5px" width="6" height="8" viewBox="0 0 6 8"><path d="M0 0.5 L6 4 L0 7.5 Z" fill="#adadad"/></svg></div>
<div class="mi" style="top:43px"><span class="ml"><u>M</u>irror</span><svg style="right:3.2px;top:6.5px" width="6" height="8" viewBox="0 0 6 8"><path d="M0 0.5 L6 4 L0 7.5 Z" fill="#adadad"/></svg></div>
<div class="mi" style="top:63px"><span class="ml"><u>C</u>lear</span><svg style="right:3.2px;top:6.5px" width="6" height="8" viewBox="0 0 6 8"><path d="M0 0.5 L6 4 L0 7.5 Z" fill="#adadad"/></svg></div>
<div class="mi" style="top:83px"><span class="ml"><u>A</u>pply</span><span class="ms" style="">⌘ A</span><svg style="right:3.2px;top:6.5px" width="6" height="8" viewBox="0 0 6 8"><path d="M0 0.5 L6 4 L0 7.5 Z" fill="#adadad"/></svg></div>
<div class="mi" style="top:103px"><span class="ml">S<u>n</u>ap</span><span class="ms" style="">Shift S</span><svg style="right:3.2px;top:6.5px" width="6" height="8" viewBox="0 0 6 8"><path d="M0 0.5 L6 4 L0 7.5 Z" fill="#adadad"/></svg></div>
<div class="sep" style="top:128px"></div>
<div class="mi" style="top:132px"><span class="ml"><u>D</u>uplicate Objects</span><span class="ms ms3" style="">Shift D</span></div>
<div class="mi" style="top:152px"><span class="ml">Duplicate <u>L</u>inked</span><span class="ms ms3" style="">⌥ D</span></div>
<div class="mi" style="top:172px"><div style="left:0;top:1px;width:100%;height:18px;background:#5680c2"></div><span class="ml" style=color:#fff><u>J</u>oin</span><span class="ms ms3" style="color:#c9d6ec;">⌘ J</span></div>
<div class="sep" style="top:197px"></div>
<div class="mi" style="top:201px"><span class="ml"><u>C</u>opy Objects</span><span class="ms ms3" style="">⌘ C</span></div>
<div class="mi" style="top:221px"><span class="ml"><u>P</u>aste Objects</span><span class="ms ms3" style="">⌘ V</span></div>
<svg style="left:9px;top:203px" width="16" height="16" viewBox="0 0 16 16"><g fill="none" stroke="#5a5a5a" stroke-width="1.1"><rect x="2" y="5" width="9" height="9"/><path d="M5 5 V2 H14 V11 H11"/></g></svg>
<svg style="left:9px;top:223px" width="16" height="16" viewBox="0 0 16 16"><g fill="none" stroke="#5a5a5a" stroke-width="1.1"><rect x="2.500" y="3" width="11" height="11.500"/><rect x="5.500" y="1.500" width="5" height="3"/></g></svg>
<div class="sep" style="top:246px"></div>
<div class="mi" style="top:250px"><span class="ml">Par<u>e</u>nt</span><svg style="right:3.2px;top:6.5px" width="6" height="8" viewBox="0 0 6 8"><path d="M0 0.5 L6 4 L0 7.5 Z" fill="#adadad"/></svg></div>
<div class="mi" style="top:270px"><span class="ml">Collect<u>i</u>on</span><svg style="right:3.2px;top:6.5px" width="6" height="8" viewBox="0 0 6 8"><path d="M0 0.5 L6 4 L0 7.5 Z" fill="#adadad"/></svg></div>
<div class="mi" style="top:290px"><span class="ml"><u>R</u>elations</span><svg style="right:3.2px;top:6.5px" width="6" height="8" viewBox="0 0 6 8"><path d="M0 0.5 L6 4 L0 7.5 Z" fill="#adadad"/></svg></div>
<div class="mi" style="top:310px"><span class="ml">Constrain<u>t</u>s</span><svg style="right:3.2px;top:6.5px" width="6" height="8" viewBox="0 0 6 8"><path d="M0 0.5 L6 4 L0 7.5 Z" fill="#adadad"/></svg></div>
<div class="mi" style="top:330px"><span class="ml">Trac<u>k</u></span><svg style="right:3.2px;top:6.5px" width="6" height="8" viewBox="0 0 6 8"><path d="M0 0.5 L6 4 L0 7.5 Z" fill="#adadad"/></svg></div>
<div class="mi" style="top:350px"><span class="ml">Make Links</span><span class="ms" style="">⌘ L</span><svg style="right:3.2px;top:6.5px" width="6" height="8" viewBox="0 0 6 8"><path d="M0 0.5 L6 4 L0 7.5 Z" fill="#adadad"/></svg></div>
</div>
<div style="left:253.5px;top:252.5px;width:222px;height:34.5px;background:rgba(25,25,25,.93);border-radius:4px"><span style="left:13px;top:0;line-height:35px;white-space:nowrap;color:#fff">Join selected objects into active object.</span></div>
</div></div>
<div class="panel ol" style="left:527px;top:6px;width:441px;height:422px"><div style="left:0;top:-1px;width:441px;height:423px">
<div class="row alt" style="top:47px"></div>
<div class="row alt" style="top:87px"></div>
<div class="row alt" style="top:127px"></div>
<div class="row alt" style="top:167px"></div>
<div class="row alt" style="top:207px"></div>
<div class="row alt" style="top:247px"></div>
<div class="row alt" style="top:287px"></div>
<div class="row alt" style="top:327px"></div>
<div class="row alt" style="top:367px"></div>
<div class="row alt" style="top:407px"></div>
<div class="row" style="top:67px;background:#3b5689"></div>
<div class="row" style="top:127px;background:#223a5d"></div>
<div class="row" style="top:147px;background:#223a5d"></div>
<div class="row" style="top:167px;background:#223a5d"></div>
<div class="row" style="top:187px;background:#223a5d"></div>
<div style="left:49px;top:62px;width:1px;height:135px;background:#7a7a7a"></div>
<svg style="left:22px;top:29px" width="16" height="16" viewBox="0 0 16 16"><g fill="none" stroke="#d8d8d8" stroke-width="1.200"><rect x="1.600" y="1.800" width="12.800" height="3.200"/><path d="M2.600 5 V14.200 H13.400 V5"/></g><rect x="6" y="7.200" width="4" height="1.800" fill="#d8d8d8"/></svg>
<span class="rt" style="left:44px;top:27px">Scene Collection</span>
<svg style="left:25px;top:53px" width="8" height="8" viewBox="0 0 8 8"><path d="M0.5 1 L7.5 1 L4 7.5 Z" fill="#c8c8c8"/></svg>
<div style="left:45px;top:51.5px;width:10.5px;height:10.5px;background:#e6e6e6;border-radius:1.5px"><svg style="left:0;top:0" width="10.5" height="10.5" viewBox="0 0 10.5 10.5"><path d="M2 5.2 L4.3 7.8 L8.6 2.6" fill="none" stroke="#1a1a1a" stroke-width="1.8"/></svg></div>
<div style="left:60.200px;top:48px;width:19.600px;height:18px;border-radius:4px;background:rgba(255,255,255,.12);border:1px solid rgba(255,255,255,.12)"></div>
<svg style="left:62px;top:49px" width="16" height="16" viewBox="0 0 16 16"><g fill="none" stroke="#e8e8e8" stroke-width="1.200"><rect x="1.600" y="1.800" width="12.800" height="3.200"/><path d="M2.600 5 V14.200 H13.400 V5"/></g><rect x="6" y="7.200" width="4" height="1.800" fill="#e8e8e8"/></svg>
<span class="rt" style="left:84.5px;top:47px">Collection</span>
<svg style="left:416px;top:50px" width="16" height="14" viewBox="0 0 16 14"><path d="M1.600 7 C4.200 2.600 11.800 2.600 14.400 7 C11.800 11.400 4.200 11.400 1.600 7 Z" fill="none" stroke="#e2e2e2" stroke-width="1.300"/><circle cx="8" cy="7" r="2.700" fill="#e2e2e2"/><circle cx="8" cy="7" r="0.900" fill="#555"/></svg>
<div style="left:50px;top:77px;width:12px;height:1px;background:#7a7a7a"></div>
<svg style="left:46.700px;top:73px" width="7" height="8" viewBox="0 0 7 8"><path d="M0.500 0.500 L6.500 4 L0.500 7.500 Z" fill="#c8c8c8"/></svg>
<div style="left:60.200px;top:68px;width:19.600px;height:18px;border-radius:4px;background:rgba(255,255,255,.2);border:1px solid rgba(255,255,255,.15)"></div>
<svg style="left:62px;top:69px" width="16" height="16" viewBox="0 0 16 16"><path d="M3.200 2.100 H13 L8.100 12.900 Z" fill="none" stroke="#e2955c" stroke-width="3" stroke-linejoin="round"/></svg>
<span class="rt" style="left:84.5px;top:67px;color:#ffaf29">body</span>
<svg style="left:130px;top:69px" width="16" height="16" viewBox="0 0 16 16"><path d="M3 3 H13 L8 13 Z" fill="none" stroke="#19c9a5" stroke-width="1.100"/><g fill="#223a5d" stroke="#19c9a5" stroke-width="1.100"><rect x="1.500" y="1.500" width="3" height="3"/><rect x="11.500" y="1.500" width="3" height="3"/><rect x="6.500" y="11.500" width="3" height="3"/></g></svg>
<svg style="left:416px;top:70px" width="16" height="14" viewBox="0 0 16 14"><path d="M1.600 7 C4.200 2.600 11.800 2.600 14.400 7 C11.800 11.400 4.200 11.400 1.600 7 Z" fill="none" stroke="#e2e2e2" stroke-width="1.300"/><circle cx="8" cy="7" r="2.700" fill="#e2e2e2"/><circle cx="8" cy="7" r="0.900" fill="#555"/></svg>
<div style="left:50px;top:97px;width:12px;height:1px;background:#7a7a7a"></div>
<svg style="left:46.700px;top:93px" width="7" height="8" viewBox="0 0 7 8"><path d="M0.500 0.500 L6.500 4 L0.500 7.500 Z" fill="#c8c8c8"/></svg>
<svg style="left:62px;top:89px" width="16" height="16" viewBox="0 0 16 16"><g fill="#e2955c"><circle cx="3.200" cy="5.200" r="2.700"/><circle cx="10.200" cy="4.300" r="3.700"/><rect x="3" y="9.300" width="8.800" height="5.400" rx="0.800"/><path d="M12.200 12 L15.400 10 V14.700 L12.200 13 Z"/></g><circle cx="3.200" cy="5.200" r="0.900" fill="#2b2b2b"/><circle cx="10.200" cy="4.300" r="1.200" fill="#2b2b2b"/></svg>
<span class="rt" style="left:84.5px;top:87px;color:#dcdcdc">Camera</span>
<div style="left:143.2px;top:88px;width:19.600px;height:18px;border-radius:4px;background:rgba(255,255,255,.22);border:1px solid rgba(255,255,255,.1)"></div>
<svg style="left:145px;top:89px" width="16" height="16" viewBox="0 0 16 16"><g fill="none" stroke="#19c9a5" stroke-width="1.200"><circle cx="4.500" cy="5.300" r="2.300"/><circle cx="10.500" cy="4.800" r="3"/><rect x="3" y="8.800" width="9" height="5.200" rx="1"/></g><path d="M13 11.500 L15.500 9.800 V13.500 Z" fill="#19c9a5"/></svg>
<svg style="left:416px;top:90px" width="16" height="14" viewBox="0 0 16 14"><path d="M1.600 7 C4.200 2.600 11.800 2.600 14.400 7 C11.800 11.400 4.200 11.400 1.600 7 Z" fill="none" stroke="#e2e2e2" stroke-width="1.300"/><circle cx="8" cy="7" r="2.700" fill="#e2e2e2"/><circle cx="8" cy="7" r="0.900" fill="#555"/></svg>
<div style="left:50px;top:117px;width:12px;height:1px;background:#7a7a7a"></div>
<svg style="left:46.700px;top:113px" width="7" height="8" viewBox="0 0 7 8"><path d="M0.500 0.500 L6.500 4 L0.500 7.500 Z" fill="#c8c8c8"/></svg>
<svg style="left:62px;top:109px" width="16" height="16" viewBox="0 0 16 16"><path d="M8.200 1.100 A5.900 5.900 0 0 1 11.400 11.800 V12.600 H5 V11.800 A5.900 5.900 0 0 1 8.200 1.100 Z" fill="#e2955c"/><path d="M5.500 14.100 H10.900 M6.700 15.600 H9.700" stroke="#e2955c" stroke-width="1.100"/><path d="M5.800 6.700 L6.800 8.900 L8.200 7.400 L9.600 8.900 L10.600 6.700" fill="none" stroke="#2b2b2b" stroke-width="0.900"/></svg>
<span class="rt" style="left:84.5px;top:107px;color:#dcdcdc">Light</span>
<svg style="left:130px;top:109px" width="16" height="16" viewBox="0 0 16 16"><circle cx="8" cy="7.500" r="6" fill="none" stroke="#19c9a5" stroke-width="1.100"/><circle cx="8" cy="7.500" r="1.200" fill="#19c9a5"/><path d="M8 9 V16" stroke="#19c9a5" stroke-width="1" stroke-dasharray="1.500 1"/></svg>
<svg style="left:416px;top:110px" width="16" height="14" viewBox="0 0 16 14"><path d="M1.600 7 C4.200 2.600 11.800 2.600 14.400 7 C11.800 11.400 4.200 11.400 1.600 7 Z" fill="none" stroke="#e2e2e2" stroke-width="1.300"/><circle cx="8" cy="7" r="2.700" fill="#e2e2e2"/><circle cx="8" cy="7" r="0.900" fill="#555"/></svg>
<div style="left:50px;top:137px;width:12px;height:1px;background:#7a7a7a"></div>
<svg style="left:46.700px;top:133px" width="7" height="8" viewBox="0 0 7 8"><path d="M0.500 0.500 L6.500 4 L0.500 7.500 Z" fill="#c8c8c8"/></svg>
<svg style="left:62px;top:129px" width="16" height="16" viewBox="0 0 16 16"><path d="M3.200 2.100 H13 L8.100 12.900 Z" fill="none" stroke="#e2955c" stroke-width="3" stroke-linejoin="round"/></svg>
<span class="rt" style="left:84.5px;top:127px;color:#e2731c">wheelBackLeft</span>
<svg style="left:180px;top:129px" width="16" height="16" viewBox="0 0 16 16"><path d="M3 3 H13 L8 13 Z" fill="none" stroke="#19c9a5" stroke-width="1.100"/><g fill="#223a5d" stroke="#19c9a5" stroke-width="1.100"><rect x="1.500" y="1.500" width="3" height="3"/><rect x="11.500" y="1.500" width="3" height="3"/><rect x="6.500" y="11.500" width="3" height="3"/></g></svg>
<svg style="left:416px;top:130px" width="16" height="14" viewBox="0 0 16 14"><path d="M1.600 7 C4.200 2.600 11.800 2.600 14.400 7 C11.800 11.400 4.200 11.400 1.600 7 Z" fill="none" stroke="#e2e2e2" stroke-width="1.300"/><circle cx="8" cy="7" r="2.700" fill="#e2e2e2"/><circle cx="8" cy="7" r="0.900" fill="#555"/></svg>
<div style="left:50px;top:157px;width:12px;height:1px;background:#7a7a7a"></div>
<svg style="left:46.700px;top:153px" width="7" height="8" viewBox="0 0 7 8"><path d="M0.500 0.500 L6.500 4 L0.500 7.500 Z" fill="#c8c8c8"/></svg>
<svg style="left:62px;top:149px" width="16" height="16" viewBox="0 0 16 16"><path d="M3.200 2.100 H13 L8.100 12.900 Z" fill="none" stroke="#e2955c" stroke-width="3" stroke-linejoin="round"/></svg>
<span class="rt" style="left:84.5px;top:147px;color:#e2731c">wheelBackRight</span>
<svg style="left:187px;top:149px" width="16" height="16" viewBox="0 0 16 16"><path d="M3 3 H13 L8 13 Z" fill="none" stroke="#19c9a5" stroke-width="1.100"/><g fill="#223a5d" stroke="#19c9a5" stroke-width="1.100"><rect x="1.500" y="1.500" width="3" height="3"/><rect x="11.500" y="1.500" width="3" height="3"/><rect x="6.500" y="11.500" width="3" height="3"/></g></svg>
<svg style="left:416px;top:150px" width="16" height="14" viewBox="0 0 16 14"><path d="M1.600 7 C4.200 2.600 11.800 2.600 14.400 7 C11.800 11.400 4.200 11.400 1.600 7 Z" fill="none" stroke="#e2e2e2" stroke-width="1.300"/><circle cx="8" cy="7" r="2.700" fill="#e2e2e2"/><circle cx="8" cy="7" r="0.900" fill="#555"/></svg>
<div style="left:50px;top:177px;width:12px;height:1px;background:#7a7a7a"></div>
<svg style="left:46.700px;top:173px" width="7" height="8" viewBox="0 0 7 8"><path d="M0.500 0.500 L6.500 4 L0.500 7.500 Z" fill="#c8c8c8"/></svg>
<svg style="left:62px;top:169px" width="16" height="16" viewBox="0 0 16 16"><path d="M3.200 2.100 H13 L8.100 12.900 Z" fill="none" stroke="#e2955c" stroke-width="3" stroke-linejoin="round"/></svg>
<span class="rt" style="left:84.5px;top:167px;color:#e2731c">wheelFrontLeft</span>
<svg style="left:181px;top:169px" width="16" height="16" viewBox="0 0 16 16"><path d="M3 3 H13 L8 13 Z" fill="none" stroke="#19c9a5" stroke-width="1.100"/><g fill="#223a5d" stroke="#19c9a5" stroke-width="1.100"><rect x="1.500" y="1.500" width="3" height="3"/><rect x="11.500" y="1.500" width="3" height="3"/><rect x="6.500" y="11.500" width="3" height="3"/></g></svg>
<svg style="left:416px;top:170px" width="16" height="14" viewBox="0 0 16 14"><path d="M1.600 7 C4.200 2.600 11.800 2.600 14.400 7 C11.800 11.400 4.200 11.400 1.600 7 Z" fill="none" stroke="#e2e2e2" stroke-width="1.300"/><circle cx="8" cy="7" r="2.700" fill="#e2e2e2"/><circle cx="8" cy="7" r="0.900" fill="#555"/></svg>
<div style="left:50px;top:197px;width:12px;height:1px;background:#7a7a7a"></div>
<svg style="left:46.700px;top:193px" width="7" height="8" viewBox="0 0 7 8"><path d="M0.500 0.500 L6.500 4 L0.500 7.500 Z" fill="#c8c8c8"/></svg>
<svg style="left:62px;top:189px" width="16" height="16" viewBox="0 0 16 16"><path d="M3.200 2.100 H13 L8.100 12.900 Z" fill="none" stroke="#e2955c" stroke-width="3" stroke-linejoin="round"/></svg>
<span class="rt" style="left:84.5px;top:187px;color:#e2731c">wheelFrontRight</span>
<svg style="left:188px;top:189px" width="16" height="16" viewBox="0 0 16 16"><path d="M3 3 H13 L8 13 Z" fill="none" stroke="#19c9a5" stroke-width="1.100"/><g fill="#223a5d" stroke="#19c9a5" stroke-width="1.100"><rect x="1.500" y="1.500" width="3" height="3"/><rect x="11.500" y="1.500" width="3" height="3"/><rect x="6.500" y="11.500" width="3" height="3"/></g></svg>
<svg style="left:416px;top:190px" width="16" height="14" viewBox="0 0 16 14"><path d="M1.600 7 C4.200 2.600 11.800 2.600 14.400 7 C11.800 11.400 4.200 11.400 1.600 7 Z" fill="none" stroke="#e2e2e2" stroke-width="1.300"/><circle cx="8" cy="7" r="2.700" fill="#e2e2e2"/><circle cx="8" cy="7" r="0.900" fill="#555"/></svg>
<div class="hdr">
<div class="btn" style="left:9px;top:4px;width:30px"><svg style="left:2px;top:1px" width="16" height="16" viewBox="0 0 16 16"><rect x="2" y="2" width="5.500" height="3" fill="#d4d4d4"/><rect x="7.500" y="7" width="7" height="2.500" fill="#d4d4d4"/><rect x="7.500" y="11.500" width="7" height="2.500" fill="#d4d4d4"/><path d="M4 5 V12.500 H7 M4 8.300 H7" fill="none" stroke="#d4d4d4" stroke-width="1"/></svg><svg style="left:19.4px;top:6.3px" width="9" height="7" viewBox="0 0 9 7"><path d="M1.600 1.500 L4.500 4.500 L7.400 1.500" fill="none" stroke="#c6c6c6" stroke-width="1.500" stroke-linecap="round" stroke-linejoin="round"/></svg></div>
<div class="btn" style="left:46px;top:4px;width:30px"><svg style="left:2px;top:1px" width="16" height="16" viewBox="0 0 16 16"><g fill="none" stroke="#d4d4d4" stroke-width="1"><path d="M2 5.500 V14.500 H11"/><path d="M4 3.500 V12.500 H13"/><rect x="6" y="1.500" width="9" height="9"/></g><path d="M6.500 10 L9.500 5.500 L11 7.500 L12.500 6 L14.500 10 Z" fill="#d4d4d4"/><circle cx="13" cy="3.500" r="1" fill="#d4d4d4"/></svg><svg style="left:19.4px;top:6.3px" width="9" height="7" viewBox="0 0 9 7"><path d="M1.600 1.500 L4.500 4.500 L7.400 1.500" fill="none" stroke="#c6c6c6" stroke-width="1.500" stroke-linecap="round" stroke-linejoin="round"/></svg></div>
<div class="btn" style="left:155px;top:4px;width:109px;background:#1f1f1f"><svg style="left:3px;top:1px" width="16" height="16" viewBox="0 0 16 16"><circle cx="10" cy="6.500" r="4.300" fill="none" stroke="#d4d4d4" stroke-width="1.300"/><path d="M7 10 L2.500 14.500" stroke="#d4d4d4" stroke-width="1.600" stroke-linecap="round"/></svg></div>
<div class="btn" style="left:378px;top:4px;width:29.5px"><svg style="left:2px;top:1px" width="16" height="16" viewBox="0 0 16 16"><path d="M1.500 2.500 H14.500 L9.500 8.500 V14.500 L6.500 12.500 V8.500 Z" fill="none" stroke="#d4d4d4" stroke-width="1.200" stroke-linejoin="round"/></svg><svg style="left:19.4px;top:6.3px" width="9" height="7" viewBox="0 0 9 7"><path d="M1.600 1.500 L4.500 4.500 L7.400 1.500" fill="none" stroke="#c6c6c6" stroke-width="1.500" stroke-linecap="round" stroke-linejoin="round"/></svg></div>
<div class="btn tog" style="left:415px;top:4px;width:18px"><svg style="left:1px;top:1px" width="16" height="16" viewBox="0 0 16 16"><g fill="none" stroke="#d4d4d4" stroke-width="1.100"><path d="M8.500 2.500 H2 V5.500 H9"/><path d="M3 5.500 V14 H13 V9.500"/></g><rect x="6" y="8" width="4" height="1.600" fill="#d4d4d4"/><circle cx="12.200" cy="4.300" r="3.400" fill="#f2f2f2"/><path d="M12.200 2.300 V6.300 M10.200 4.300 H14.200" stroke="#444" stroke-width="1.200"/></svg></div>
</div>
</div></div>
<div class="panel vp" style="left:3px;top:435px;width:521px;height:469px"><div style="left:0;top:-1px;width:521px;height:470px">
<svg style="left:0;top:0" width="521" height="470" viewBox="3 434 521 470"><defs><linearGradient id="btra" gradientUnits="userSpaceOnUse" x1="143" y1="700" x2="192" y2="768"><stop offset="0" stop-color="#55575a"/><stop offset="0.22" stop-color="#5a5c5e"/><stop offset="0.36" stop-color="#4e4f51"/><stop offset="0.5" stop-color="#3c3d3e"/><stop offset="0.64" stop-color="#2d2d2e"/><stop offset="0.8" stop-color="#232324"/><stop offset="1" stop-color="#1a1a1a"/></linearGradient><linearGradient id="btrb" gradientUnits="userSpaceOnUse" x1="343" y1="748" x2="396" y2="824"><stop offset="0" stop-color="#55575a"/><stop offset="0.22" stop-color="#5a5c5e"/><stop offset="0.36" stop-color="#4e4f51"/><stop offset="0.5" stop-color="#3c3d3e"/><stop offset="0.64" stop-color="#2d2d2e"/><stop offset="0.8" stop-color="#232324"/><stop offset="1" stop-color="#1a1a1a"/></linearGradient><linearGradient id="bsha" gradientUnits="userSpaceOnUse" x1="131" y1="712" x2="172" y2="790"><stop offset="0" stop-color="#5a5c5e"/><stop offset="0.1" stop-color="#6e7072"/><stop offset="0.2" stop-color="#7e8082"/><stop offset="0.32" stop-color="#626466"/><stop offset="0.45" stop-color="#505153"/><stop offset="0.6" stop-color="#38393a"/><stop offset="0.75" stop-color="#2a2a2b"/><stop offset="1" stop-color="#1e1e1e"/></linearGradient><linearGradient id="bshb" gradientUnits="userSpaceOnUse" x1="330" y1="762" x2="376" y2="842"><stop offset="0" stop-color="#5a5c5e"/><stop offset="0.1" stop-color="#6e7072"/><stop offset="0.2" stop-color="#7e8082"/><stop offset="0.32" stop-color="#626466"/><stop offset="0.45" stop-color="#505153"/><stop offset="0.6" stop-color="#38393a"/><stop offset="0.75" stop-color="#2a2a2b"/><stop offset="1" stop-color="#1e1e1e"/></linearGradient><linearGradient id="brma" gradientUnits="userSpaceOnUse" x1="138" y1="734" x2="156" y2="776"><stop offset="0" stop-color="#3f3e3e"/><stop offset="0.3" stop-color="#555657"/><stop offset="0.5" stop-color="#7a7b7c"/><stop offset="0.68" stop-color="#a2a3a4"/><stop offset="0.85" stop-color="#c6c7c8"/><stop offset="1" stop-color="#d0d0d0"/></linearGradient><linearGradient id="brmb" gradientUnits="userSpaceOnUse" x1="338" y1="786" x2="360" y2="829"><stop offset="0" stop-color="#3f3e3e"/><stop offset="0.3" stop-color="#555657"/><stop offset="0.5" stop-color="#7a7b7c"/><stop offset="0.68" stop-color="#a2a3a4"/><stop offset="0.85" stop-color="#c6c7c8"/><stop offset="1" stop-color="#d0d0d0"/></linearGradient><linearGradient id="brr" gradientUnits="userSpaceOnUse" x1="195" y1="660" x2="258" y2="650"><stop offset="0" stop-color="#474849"/><stop offset="0.45" stop-color="#4b4c4d"/><stop offset="0.62" stop-color="#545556"/><stop offset="0.8" stop-color="#5e5f60"/><stop offset="1" stop-color="#626364"/></linearGradient></defs><g><line x1="3" y1="862.9" x2="524" y2="1027.3" stroke="#484848" stroke-width="1"/><line x1="3" y1="580.7" x2="524" y2="690.7" stroke="#484848" stroke-width="1"/><line x1="3" y1="502.0" x2="524" y2="596.9" stroke="#484848" stroke-width="1"/><line x1="3" y1="441.2" x2="524" y2="524.3" stroke="#484848" stroke-width="1"/><line x1="3" y1="393.2" x2="524" y2="467.1" stroke="#484848" stroke-width="1"/><line x1="434.3" y1="430" x2="-150.5" y2="905" stroke="#484848" stroke-width="1"/><line x1="280.5" y1="430" x2="-478.1" y2="905" stroke="#484848" stroke-width="1"/><line x1="126.7" y1="430" x2="-805.8" y2="905" stroke="#484848" stroke-width="1"/><line x1="3" y1="690.4" x2="524" y2="821.5" stroke="#6c9c27" stroke-width="1.2"/><line x1="524.5" y1="507" x2="193" y2="893" stroke="#a33c4e" stroke-width="1.4"/><path d="M190.5 668.6 C191.2 666.9 190.2 667.7 192.5 663.5 C194.8 659.3 193.9 660.5 197.4 656.0 C200.9 651.5 199.0 653.7 203.0 650.0 C207.0 646.3 205.0 647.9 209.5 645.0 C214.0 642.1 211.7 643.2 216.5 641.2 C221.3 639.2 219.2 639.9 224.0 639.0 C228.8 638.1 226.3 638.2 231.0 638.5 C235.7 638.8 233.3 638.2 238.0 640.0 C242.7 641.8 240.6 640.8 245.0 644.0 C249.4 647.2 247.6 645.7 251.3 649.7 C255.0 653.7 253.6 652.1 256.0 656.0 C258.4 659.9 257.7 659.7 258.5 661.5 L262 661 L262 695 L189 695 Z" fill="url(#brr)"/><path d="M200 672 C201 658 212 650 224 650 C233 650 239 655 243 663 L243 672 Z" fill="#484949" opacity=".7"/><path d="M382.7 698.5 C383.6 696.5 383.2 696.2 385.5 692.5 C387.8 688.8 386.2 690.7 389.5 687.5 C392.8 684.3 391.2 685.5 395.5 682.8 C399.8 680.1 397.7 681.1 402.5 679.5 C407.3 677.9 405.1 678.5 410.0 678.0 C414.9 677.5 412.3 677.4 417.3 678.0 C422.3 678.6 420.0 678.2 425.0 679.8 C430.0 681.4 427.7 680.4 432.2 682.9 C436.7 685.4 434.6 684.0 438.5 687.3 C442.4 690.6 440.7 688.9 443.8 692.8 C446.9 696.7 445.6 694.6 447.8 699.0 C450.0 703.4 449.1 701.7 450.4 706.0 C451.7 710.3 451.3 708.1 451.8 712.0 C452.3 715.9 452.3 713.6 452.0 717.6 C451.7 721.6 452.0 719.9 451.0 724.0 C450.0 728.1 450.8 725.7 449.0 730.0 C447.2 734.3 448.0 732.5 445.5 737.0 C443.0 741.5 443.8 739.9 441.5 743.5 C439.2 747.1 439.6 746.3 438.6 747.7 L420 760 L375 705 Z" fill="#4b4c4d"/><path d="M389.500 687.500 C400 677 425 675 438.500 687.300 L433 692 C422 683 405 684 394 693 Z" fill="#5b5c5d"/><path d="M438.500 687.300 C452 700 455 722 438.600 747.700 L432 741 C446 722 444 703 433 692 Z" fill="#38393a"/><path d="M445 700 C453 712 452 730 438.600 747.700 L436 744 C446 728 447 714 441 704 Z" fill="#252526"/><ellipse cx="415" cy="723" rx="26" ry="30" transform="rotate(-35 415 723)" fill="#454647" /><ellipse cx="411" cy="729" rx="17" ry="21" transform="rotate(-35 411 729)" fill="#3f4041" /><polygon points="163.6,655.4 183.4,638.9 185.0,668.6 164.4,676.0" fill="#4a4b4c" /><polygon points="183.4,638.0 187.5,634.7 189.2,667.7 185.0,668.6" fill="#2a2a2a" /><polygon points="187.5,634.7 191.0,632.0 191.0,667.4 189.2,667.7" fill="#3a3a3a" /><polygon points="116.2,668.6 140.5,676.8 143.3,706.0 123.0,724.0" fill="#4a4b4c" /><polygon points="140.5,676.8 144.6,672.7 147.9,700.8 143.3,706.0" fill="#2a2a2a" /><polygon points="111.2,658.7 135.0,670.7 135.5,677.7 113.2,666.9" fill="#444546" /><polygon points="135.0,670.7 190.5,625.6 191.0,632.2 135.5,677.7" fill="#2a2a2a" /><polygon points="110.5,658.7 169.0,613.3 191.5,625.6 135.0,670.7" fill="#58595a" /><polygon points="164.8,673.6 296.5,656.5 310.0,667.2 338.0,678.5 359.5,680.5 383.0,699.0 383.4,701.7 371.7,718.4 369.4,719.5 341.4,720.9 313.3,723.4 295.7,721.7 269.3,712.7 190.0,710.2 148.0,702.5 152.8,700.8 163.6,691.7" fill="#a8965c" /><polygon points="164.4,680.1 278.3,674.7 278.3,698.6 163.6,691.7" fill="#86753f" /><polygon points="146.0,702.0 190.0,710.2 269.3,712.7 296.0,722.0 313.3,723.4 313.0,780.0 205.7,767.0 201.6,750.6 196.6,754.0 192.0,768.0 160.0,760.0" fill="#7f6e3b" /><polygon points="313.3,723.4 341.4,720.9 339.7,757.0 325.0,768.0 312.0,780.0" fill="#6a5b2e" /><polygon points="341.4,720.9 369.6,719.3 368.0,750.0 339.7,757.0" fill="#38393a" /><polygon points="296.5,656.5 339.4,692.8 327.0,706.9 278.3,674.7" fill="#5f6c7b" /><polygon points="278.3,674.7 327.0,706.9 278.3,698.6" fill="#46525f" /><polygon points="338.0,677.5 349.5,665.6 354.0,671.5 348.5,683.5 338.0,681.5" fill="#4b4c4e" /><polygon points="349.5,665.6 358.2,666.3 358.2,682.0 348.5,683.5 354.0,671.5" fill="#2c2c2d" /><polygon points="338.0,677.5 349.5,665.6 358.2,666.3 347.5,679.5" fill="#4e4f51" /><polygon points="455.0,732.2 457.5,728.1 491.9,748.2 488.1,757.0 452.6,749.5" fill="#4d4e50" /><polygon points="452.6,749.5 488.1,757.0 451.7,813.9 424.5,787.5 440.0,775.0" fill="#6a6b6d" /><polygon points="488.1,757.0 492.2,749.5 450.9,829.6 451.7,813.9" fill="#2d2d2e" /><polygon points="414.6,787.0 424.5,787.5 451.7,813.9 450.9,829.6 411.0,818.6" fill="#4d4e50" /><polygon points="416.0,787.0 424.5,787.5 451.7,813.9 451.0,816.5" fill="#5c5d5f" /><polygon points="383.4,701.7 463.9,771.7 452.8,790.3 371.7,718.4" fill="#9a8a55" /><polygon points="371.7,718.4 452.8,790.3 426.8,786.0 399.5,783.0 380.0,762.0 368.0,749.0" fill="#7f6e3b" /><polygon points="294.9,724.2 308.1,709.6 318.8,711.8 305.6,726.7" fill="#4c4d4f" /><polygon points="294.9,724.2 305.6,726.7 305.6,748.2 294.9,745.7" fill="#494a4c" /><polygon points="305.6,726.7 318.8,711.8 313.2,740.7 305.6,748.2" fill="#2c2c2d" /><polygon points="214.8,730.0 311.4,753.9 310.5,756.0 208.7,737.0" fill="#b4a36b" /><polygon points="208.7,737.0 310.5,756.0 303.9,777.1 204.9,750.6" fill="#c6b682" /><polygon points="204.9,750.6 303.9,777.1 303.9,786.5 205.7,766.8" fill="#9b8a52" /><polygon points="311.4,753.9 303.9,777.1 303.9,786.5 312.5,779.0" fill="#5a4a27" /><clipPath id="bcla"><path d="M122.3 721.4 C119.8 725.4 119.6 722.5 117.5 728.0 C115.4 733.5 116.0 731.3 116.0 738.0 C116.0 744.7 116.0 741.5 117.5 748.0 C119.0 754.5 117.7 751.2 120.5 757.5 C123.3 763.8 121.8 760.8 126.0 767.0 C130.2 773.2 128.0 771.0 133.0 776.0 C138.0 781.0 135.5 778.7 141.0 782.0 C146.5 785.3 143.8 783.9 149.5 786.0 C155.2 788.1 152.8 787.6 158.0 788.3 C163.2 789.0 160.3 789.3 165.0 788.2 C169.7 787.1 167.2 788.0 172.0 785.0 C176.8 782.0 174.6 783.2 179.3 779.2 C184.0 775.2 181.6 777.6 186.0 773.0 C190.4 768.4 188.8 770.8 192.5 765.5 C196.2 760.2 194.8 762.8 197.0 757.0 C199.2 751.2 199.0 754.3 199.2 748.0 C199.4 741.7 199.3 744.3 197.6 738.0 C195.9 731.7 196.9 734.7 194.0 729.0 C191.1 723.3 192.8 726.3 189.0 721.0 C185.2 715.7 187.3 717.8 182.5 713.0 C177.7 708.2 180.2 710.2 174.5 706.5 C168.8 702.8 171.7 704.0 165.5 702.0 C159.3 700.0 162.5 700.6 156.0 700.6 C149.5 700.6 152.0 700.6 146.0 702.0 C140.0 703.4 143.2 702.3 138.0 704.8 C132.8 707.3 134.8 705.8 130.5 709.5 C126.2 713.2 127.7 712.0 125.0 716.0 C122.3 720.0 124.8 717.4 122.3 721.4 Z"/></clipPath><path d="M122.3 721.4 C119.8 725.4 119.6 722.5 117.5 728.0 C115.4 733.5 116.0 731.3 116.0 738.0 C116.0 744.7 116.0 741.5 117.5 748.0 C119.0 754.5 117.7 751.2 120.5 757.5 C123.3 763.8 121.8 760.8 126.0 767.0 C130.2 773.2 128.0 771.0 133.0 776.0 C138.0 781.0 135.5 778.7 141.0 782.0 C146.5 785.3 143.8 783.9 149.5 786.0 C155.2 788.1 152.8 787.6 158.0 788.3 C163.2 789.0 160.3 789.3 165.0 788.2 C169.7 787.1 167.2 788.0 172.0 785.0 C176.8 782.0 174.6 783.2 179.3 779.2 C184.0 775.2 181.6 777.6 186.0 773.0 C190.4 768.4 188.8 770.8 192.5 765.5 C196.2 760.2 194.8 762.8 197.0 757.0 C199.2 751.2 199.0 754.3 199.2 748.0 C199.4 741.7 199.3 744.3 197.6 738.0 C195.9 731.7 196.9 734.7 194.0 729.0 C191.1 723.3 192.8 726.3 189.0 721.0 C185.2 715.7 187.3 717.8 182.5 713.0 C177.7 708.2 180.2 710.2 174.5 706.5 C168.8 702.8 171.7 704.0 165.5 702.0 C159.3 700.0 162.5 700.6 156.0 700.6 C149.5 700.6 152.0 700.6 146.0 702.0 C140.0 703.4 143.2 702.3 138.0 704.8 C132.8 707.3 134.8 705.8 130.5 709.5 C126.2 713.2 127.7 712.0 125.0 716.0 C122.3 720.0 124.8 717.4 122.3 721.4 Z" fill="url(#btra)"/><g clip-path="url(#bcla)"><polygon points="190.7,769.2 185.6,771.8 168.9,786.9 174.1,784.2" fill="#1f1f20" stroke="#1f1f20" stroke-width="0.4"/><polygon points="185.6,771.8 179.7,773.1 163.0,788.2 168.9,786.9" fill="#1e1e1f" stroke="#1e1e1f" stroke-width="0.4"/><polygon points="179.7,773.1 173.4,773.0 156.6,788.1 163.0,788.2" fill="#1e1e1e" stroke="#1e1e1e" stroke-width="0.4"/><polygon points="173.4,773.0 166.8,771.4 149.9,786.5 156.6,788.1" fill="#1d1d1d" stroke="#1d1d1d" stroke-width="0.4"/><polygon points="166.8,771.4 160.3,768.5 143.3,783.5 149.9,786.5" fill="#1b1b1c" stroke="#1b1b1c" stroke-width="0.4"/><polygon points="160.3,768.5 154.1,764.3 137.0,779.2 143.3,783.5" fill="#1b1b1b" stroke="#1b1b1b" stroke-width="0.4"/><polygon points="154.1,764.3 148.3,759.1 131.2,773.8 137.0,779.2" fill="#1a1a1a" stroke="#1a1a1a" stroke-width="0.4"/><polygon points="148.3,759.1 143.3,752.9 126.1,767.6 131.2,773.8" fill="#2f2f30" stroke="#2f2f30" stroke-width="0.4"/><polygon points="143.3,752.9 139.3,746.1 121.9,760.7 126.1,767.6" fill="#494a4b" stroke="#494a4b" stroke-width="0.4"/><polygon points="139.3,746.1 136.3,738.9 118.9,753.4 121.9,760.7" fill="#4e5052" stroke="#4e5052" stroke-width="0.4"/><polygon points="136.3,738.9 134.5,731.6 117.1,746.0 118.9,753.4" fill="#525355" stroke="#525355" stroke-width="0.4"/><polygon points="134.5,731.6 134.0,724.5 116.5,738.7 117.1,746.0" fill="#545658" stroke="#545658" stroke-width="0.4"/><polygon points="134.0,724.5 134.8,717.8 117.3,731.9 116.5,738.7" fill="#56585a" stroke="#56585a" stroke-width="0.4"/><polygon points="134.8,717.8 136.8,711.8 119.3,725.9 117.3,731.9" fill="#57595b" stroke="#57595b" stroke-width="0.4"/><polygon points="136.8,711.8 140.0,706.8 122.6,720.7 119.3,725.9" fill="#585a5c" stroke="#585a5c" stroke-width="0.4"/><polygon points="140.0,706.8 144.3,702.8 126.9,716.8 122.6,720.7" fill="#595b5d" stroke="#595b5d" stroke-width="0.4"/><polygon points="144.3,702.8 149.4,700.2 132.1,714.1 126.9,716.8" fill="#595b5d" stroke="#595b5d" stroke-width="0.4"/><polygon points="149.4,700.2 155.3,698.9 138.0,712.8 132.1,714.1" fill="#5a5b5d" stroke="#5a5b5d" stroke-width="0.4"/><polygon points="155.3,698.9 161.6,699.0 144.4,712.9 138.0,712.8" fill="#585a5c" stroke="#585a5c" stroke-width="0.4"/><polygon points="161.6,699.0 168.2,700.6 151.1,714.5 144.4,712.9" fill="#56585a" stroke="#56585a" stroke-width="0.4"/><polygon points="168.2,700.6 174.7,703.5 157.7,717.5 151.1,714.5" fill="#545557" stroke="#545557" stroke-width="0.4"/><polygon points="174.7,703.5 180.9,707.7 164.0,721.8 157.7,717.5" fill="#4e4f51" stroke="#4e4f51" stroke-width="0.4"/><polygon points="180.9,707.7 186.7,712.9 169.8,727.2 164.0,721.8" fill="#464748" stroke="#464748" stroke-width="0.4"/><polygon points="186.7,712.9 191.7,719.1 174.9,733.4 169.8,727.2" fill="#3e3f40" stroke="#3e3f40" stroke-width="0.4"/><polygon points="191.7,719.1 195.7,725.9 179.1,740.3 174.9,733.4" fill="#373738" stroke="#373738" stroke-width="0.4"/><polygon points="195.7,725.9 198.7,733.1 182.1,747.6 179.1,740.3" fill="#313132" stroke="#313132" stroke-width="0.4"/><polygon points="198.7,733.1 200.5,740.4 183.9,755.0 182.1,747.6" fill="#2b2b2c" stroke="#2b2b2c" stroke-width="0.4"/><polygon points="200.5,740.4 201.0,747.5 184.5,762.3 183.9,755.0" fill="#282829" stroke="#282829" stroke-width="0.4"/><polygon points="201.0,747.5 200.2,754.2 183.7,769.1 184.5,762.3" fill="#252526" stroke="#252526" stroke-width="0.4"/><polygon points="200.2,754.2 198.2,760.2 181.7,775.1 183.7,769.1" fill="#232324" stroke="#232324" stroke-width="0.4"/><polygon points="198.2,760.2 195.0,765.2 178.4,780.3 181.7,775.1" fill="#222223" stroke="#222223" stroke-width="0.4"/><polygon points="195.0,765.2 190.7,769.2 174.1,784.2 178.4,780.3" fill="#212122" stroke="#212122" stroke-width="0.4"/><polygon points="174.1,784.2 168.9,786.9 164.2,784.3 168.7,782.0" fill="#272728" stroke="#272728" stroke-width="0.4"/><polygon points="168.9,786.9 163.0,788.2 159.1,785.4 164.2,784.3" fill="#282829" stroke="#282829" stroke-width="0.4"/><polygon points="163.0,788.2 156.6,788.1 153.5,785.3 159.1,785.4" fill="#2a2a2b" stroke="#2a2a2b" stroke-width="0.4"/><polygon points="156.6,788.1 149.9,786.5 147.8,783.9 153.5,785.3" fill="#2b2b2c" stroke="#2b2b2c" stroke-width="0.4"/><polygon points="149.9,786.5 143.3,783.5 142.1,781.3 147.8,783.9" fill="#2f2f30" stroke="#2f2f30" stroke-width="0.4"/><polygon points="143.3,783.5 137.0,779.2 136.6,777.6 142.1,781.3" fill="#353536" stroke="#353536" stroke-width="0.4"/><polygon points="137.0,779.2 131.2,773.8 131.6,773.0 136.6,777.6" fill="#3b3c3d" stroke="#3b3c3d" stroke-width="0.4"/><polygon points="131.2,773.8 126.1,767.6 127.2,767.6 131.6,773.0" fill="#404142" stroke="#404142" stroke-width="0.4"/><polygon points="126.1,767.6 121.9,760.7 123.7,761.7 127.2,767.6" fill="#454647" stroke="#454647" stroke-width="0.4"/><polygon points="121.9,760.7 118.9,753.4 121.1,755.4 123.7,761.7" fill="#494a4b" stroke="#494a4b" stroke-width="0.4"/><polygon points="118.9,753.4 117.1,746.0 119.5,749.0 121.1,755.4" fill="#4d4e50" stroke="#4d4e50" stroke-width="0.4"/><polygon points="117.1,746.0 116.5,738.7 119.0,742.8 119.5,749.0" fill="#535557" stroke="#535557" stroke-width="0.4"/><polygon points="116.5,738.7 117.3,731.9 119.7,736.9 119.0,742.8" fill="#595b5d" stroke="#595b5d" stroke-width="0.4"/><polygon points="117.3,731.9 119.3,725.9 121.4,731.7 119.7,736.9" fill="#5f6163" stroke="#5f6163" stroke-width="0.4"/><polygon points="119.3,725.9 122.6,720.7 124.2,727.3 121.4,731.7" fill="#67696b" stroke="#67696b" stroke-width="0.4"/><polygon points="122.6,720.7 126.9,716.8 127.9,723.8 124.2,727.3" fill="#6e7072" stroke="#6e7072" stroke-width="0.4"/><polygon points="126.9,716.8 132.1,714.1 132.4,721.5 127.9,723.8" fill="#747678" stroke="#747678" stroke-width="0.4"/><polygon points="132.1,714.1 138.0,712.8 137.5,720.4 132.4,721.5" fill="#797b7d" stroke="#797b7d" stroke-width="0.4"/><polygon points="138.0,712.8 144.4,712.9 143.1,720.5 137.5,720.4" fill="#7e8082" stroke="#7e8082" stroke-width="0.4"/><polygon points="144.4,712.9 151.1,714.5 148.8,721.9 143.1,720.5" fill="#7b7d7f" stroke="#7b7d7f" stroke-width="0.4"/><polygon points="151.1,714.5 157.7,717.5 154.5,724.5 148.8,721.9" fill="#737577" stroke="#737577" stroke-width="0.4"/><polygon points="157.7,717.5 164.0,721.8 160.0,728.2 154.5,724.5" fill="#696b6d" stroke="#696b6d" stroke-width="0.4"/><polygon points="164.0,721.8 169.8,727.2 165.0,732.8 160.0,728.2" fill="#5e6062" stroke="#5e6062" stroke-width="0.4"/><polygon points="169.8,727.2 174.9,733.4 169.4,738.2 165.0,732.8" fill="#525355" stroke="#525355" stroke-width="0.4"/><polygon points="174.9,733.4 179.1,740.3 172.9,744.1 169.4,738.2" fill="#454647" stroke="#454647" stroke-width="0.4"/><polygon points="179.1,740.3 182.1,747.6 175.5,750.4 172.9,744.1" fill="#3a3b3c" stroke="#3a3b3c" stroke-width="0.4"/><polygon points="182.1,747.6 183.9,755.0 177.1,756.8 175.5,750.4" fill="#343435" stroke="#343435" stroke-width="0.4"/><polygon points="183.9,755.0 184.5,762.3 177.6,763.0 177.1,756.8" fill="#303031" stroke="#303031" stroke-width="0.4"/><polygon points="184.5,762.3 183.7,769.1 176.9,768.9 177.6,763.0" fill="#2d2d2e" stroke="#2d2d2e" stroke-width="0.4"/><polygon points="183.7,769.1 181.7,775.1 175.2,774.1 176.9,768.9" fill="#2a2a2b" stroke="#2a2a2b" stroke-width="0.4"/><polygon points="181.7,775.1 178.4,780.3 172.4,778.5 175.2,774.1" fill="#29292a" stroke="#29292a" stroke-width="0.4"/><polygon points="178.4,780.3 174.1,784.2 168.7,782.0 172.4,778.5" fill="#282829" stroke="#282829" stroke-width="0.4"/><ellipse cx="148.3" cy="752.9" rx="35.5" ry="25.7" transform="rotate(55 148.3 752.9)" fill="#47484a" /><polygon points="160.2,773.5 157.3,775.0 159.6,763.6 161.6,762.5" fill="#c8c9ca" stroke="#c8c9ca" stroke-width="0.4"/><polygon points="157.3,775.0 154.0,775.7 157.3,764.1 159.6,763.6" fill="#cacbcc" stroke="#cacbcc" stroke-width="0.4"/><polygon points="154.0,775.7 150.5,775.6 154.8,764.0 157.3,764.1" fill="#cbcccd" stroke="#cbcccd" stroke-width="0.4"/><polygon points="150.5,775.6 146.8,774.7 152.3,763.4 154.8,764.0" fill="#c7c8c9" stroke="#c7c8c9" stroke-width="0.4"/><polygon points="146.8,774.7 143.1,773.0 149.7,762.2 152.3,763.4" fill="#c3c4c5" stroke="#c3c4c5" stroke-width="0.4"/><polygon points="143.1,773.0 139.5,770.6 147.3,760.6 149.7,762.2" fill="#b7b8b9" stroke="#b7b8b9" stroke-width="0.4"/><polygon points="139.5,770.6 136.2,767.6 145.0,758.5 147.3,760.6" fill="#a6a7a8" stroke="#a6a7a8" stroke-width="0.4"/><polygon points="136.2,767.6 133.4,764.1 143.1,756.1 145.0,758.5" fill="#8f9091" stroke="#8f9091" stroke-width="0.4"/><polygon points="133.4,764.1 131.1,760.2 141.5,753.4 143.1,756.1" fill="#78797a" stroke="#78797a" stroke-width="0.4"/><polygon points="131.1,760.2 129.4,756.2 140.3,750.6 141.5,753.4" fill="#636364" stroke="#636364" stroke-width="0.4"/><polygon points="129.4,756.2 128.3,752.0 139.6,747.7 140.3,750.6" fill="#515151" stroke="#515151" stroke-width="0.4"/><polygon points="128.3,752.0 128.0,748.0 139.4,745.0 139.6,747.7" fill="#4b4b4a" stroke="#4b4b4a" stroke-width="0.4"/><polygon points="128.0,748.0 128.4,744.2 139.7,742.3 139.4,745.0" fill="#464544" stroke="#464544" stroke-width="0.4"/><polygon points="128.4,744.2 129.6,740.8 140.5,740.0 139.7,742.3" fill="#424140" stroke="#424140" stroke-width="0.4"/><polygon points="129.6,740.8 131.4,737.9 141.7,738.0 140.5,740.0" fill="#403f3e" stroke="#403f3e" stroke-width="0.4"/><polygon points="131.4,737.9 133.8,735.7 143.4,736.5 141.7,738.0" fill="#3e3d3c" stroke="#3e3d3c" stroke-width="0.4"/><polygon points="133.8,735.7 136.7,734.2 145.4,735.4 143.4,736.5" fill="#3c3b3a" stroke="#3c3b3a" stroke-width="0.4"/><polygon points="136.7,734.2 140.0,733.5 147.7,734.9 145.4,735.4" fill="#3c3b3a" stroke="#3c3b3a" stroke-width="0.4"/><polygon points="140.0,733.5 143.5,733.6 150.2,735.0 147.7,734.9" fill="#3b3a3a" stroke="#3b3a3a" stroke-width="0.4"/><polygon points="143.5,733.6 147.2,734.5 152.7,735.6 150.2,735.0" fill="#3a3a3a" stroke="#3a3a3a" stroke-width="0.4"/><polygon points="147.2,734.5 150.9,736.2 155.3,736.8 152.7,735.6" fill="#3c3c3c" stroke="#3c3c3c" stroke-width="0.4"/><polygon points="150.9,736.2 154.5,738.6 157.7,738.4 155.3,736.8" fill="#414141" stroke="#414141" stroke-width="0.4"/><polygon points="154.5,738.6 157.8,741.6 160.0,740.5 157.7,738.4" fill="#454545" stroke="#454545" stroke-width="0.4"/><polygon points="157.8,741.6 160.6,745.1 161.9,742.9 160.0,740.5" fill="#4d4d4e" stroke="#4d4d4e" stroke-width="0.4"/><polygon points="160.6,745.1 162.9,749.0 163.5,745.6 161.9,742.9" fill="#656666" stroke="#656666" stroke-width="0.4"/><polygon points="162.9,749.0 164.6,753.0 164.7,748.4 163.5,745.6" fill="#7d7e7f" stroke="#7d7e7f" stroke-width="0.4"/><polygon points="164.6,753.0 165.7,757.2 165.4,751.3 164.7,748.4" fill="#98999a" stroke="#98999a" stroke-width="0.4"/><polygon points="165.7,757.2 166.0,761.2 165.6,754.0 165.4,751.3" fill="#b1b2b3" stroke="#b1b2b3" stroke-width="0.4"/><polygon points="166.0,761.2 165.6,765.0 165.3,756.7 165.6,754.0" fill="#babbbc" stroke="#babbbc" stroke-width="0.4"/><polygon points="165.6,765.0 164.4,768.4 164.5,759.0 165.3,756.7" fill="#bfc0c1" stroke="#bfc0c1" stroke-width="0.4"/><polygon points="164.4,768.4 162.6,771.3 163.3,761.0 164.5,759.0" fill="#c5c6c7" stroke="#c5c6c7" stroke-width="0.4"/><polygon points="162.6,771.3 160.2,773.5 161.6,762.5 163.3,761.0" fill="#c7c8c9" stroke="#c7c8c9" stroke-width="0.4"/><ellipse cx="152.5" cy="749.5" rx="15.9" ry="11.5" transform="rotate(55 152.5 749.5)" fill="#84878a" /></g><clipPath id="bclb"><path d="M317.2 778.8 C314.1 784.6 314.9 781.3 313.2 787.0 C311.5 792.7 312.3 790.0 312.2 796.0 C312.1 802.0 311.9 799.3 313.0 805.0 C314.1 810.7 313.0 807.5 315.5 813.0 C318.0 818.5 316.4 816.1 320.5 821.5 C324.6 826.9 322.6 824.7 327.9 829.2 C333.2 833.7 330.4 831.7 336.5 835.0 C342.6 838.3 340.1 837.1 346.1 839.1 C352.1 841.1 349.0 840.5 354.5 841.0 C360.0 841.5 357.1 841.8 362.6 840.7 C368.1 839.6 365.5 840.3 371.0 837.6 C376.5 834.9 373.8 836.7 379.1 832.5 C384.4 828.3 382.1 830.5 387.0 825.0 C391.9 819.5 390.2 821.9 393.9 815.9 C397.6 809.9 395.8 813.0 398.0 807.0 C400.2 801.0 399.6 803.5 400.5 797.8 C401.4 792.1 401.1 794.7 400.8 790.0 C400.5 785.3 401.1 788.3 399.7 783.8 C398.3 779.3 399.0 781.2 396.5 776.5 C394.0 771.8 395.8 774.4 392.3 769.7 C388.8 765.0 390.4 766.9 386.0 762.5 C381.6 758.1 384.1 760.0 379.1 756.5 C374.1 753.0 376.5 754.5 371.0 752.0 C365.5 749.5 368.3 750.0 362.6 749.1 C356.9 748.2 359.5 748.4 354.0 749.2 C348.5 750.0 351.6 749.4 346.1 751.6 C340.6 753.8 343.0 752.5 337.5 755.8 C332.0 759.1 334.5 756.9 329.5 761.5 C324.5 766.1 326.6 763.7 322.5 769.5 C318.4 775.3 320.3 773.0 317.2 778.8 Z"/></clipPath><path d="M317.2 778.8 C314.1 784.6 314.9 781.3 313.2 787.0 C311.5 792.7 312.3 790.0 312.2 796.0 C312.1 802.0 311.9 799.3 313.0 805.0 C314.1 810.7 313.0 807.5 315.5 813.0 C318.0 818.5 316.4 816.1 320.5 821.5 C324.6 826.9 322.6 824.7 327.9 829.2 C333.2 833.7 330.4 831.7 336.5 835.0 C342.6 838.3 340.1 837.1 346.1 839.1 C352.1 841.1 349.0 840.5 354.5 841.0 C360.0 841.5 357.1 841.8 362.6 840.7 C368.1 839.6 365.5 840.3 371.0 837.6 C376.5 834.9 373.8 836.7 379.1 832.5 C384.4 828.3 382.1 830.5 387.0 825.0 C391.9 819.5 390.2 821.9 393.9 815.9 C397.6 809.9 395.8 813.0 398.0 807.0 C400.2 801.0 399.6 803.5 400.5 797.8 C401.4 792.1 401.1 794.7 400.8 790.0 C400.5 785.3 401.1 788.3 399.7 783.8 C398.3 779.3 399.0 781.2 396.5 776.5 C394.0 771.8 395.8 774.4 392.3 769.7 C388.8 765.0 390.4 766.9 386.0 762.5 C381.6 758.1 384.1 760.0 379.1 756.5 C374.1 753.0 376.5 754.5 371.0 752.0 C365.5 749.5 368.3 750.0 362.6 749.1 C356.9 748.2 359.5 748.4 354.0 749.2 C348.5 750.0 351.6 749.4 346.1 751.6 C340.6 753.8 343.0 752.5 337.5 755.8 C332.0 759.1 334.5 756.9 329.5 761.5 C324.5 766.1 326.6 763.7 322.5 769.5 C318.4 775.3 320.3 773.0 317.2 778.8 Z" fill="url(#btrb)"/><g clip-path="url(#bclb)"><polygon points="398.3,811.2 393.4,816.3 379.9,832.9 384.9,827.7" fill="#222223" stroke="#222223" stroke-width="0.4"/><polygon points="393.4,816.3 387.4,820.2 373.8,836.8 379.9,832.9" fill="#202021" stroke="#202021" stroke-width="0.4"/><polygon points="387.4,820.2 380.5,822.7 366.9,839.4 373.8,836.8" fill="#1f1f20" stroke="#1f1f20" stroke-width="0.4"/><polygon points="380.5,822.7 373.2,823.9 359.4,840.5 366.9,839.4" fill="#1e1e1e" stroke="#1e1e1e" stroke-width="0.4"/><polygon points="373.2,823.9 365.5,823.6 351.6,840.2 359.4,840.5" fill="#1c1c1c" stroke="#1c1c1c" stroke-width="0.4"/><polygon points="365.5,823.6 357.9,821.9 343.8,838.4 351.6,840.2" fill="#1b1b1b" stroke="#1b1b1b" stroke-width="0.4"/><polygon points="357.9,821.9 350.6,818.7 336.4,835.2 343.8,838.4" fill="#1a1a1a" stroke="#1a1a1a" stroke-width="0.4"/><polygon points="350.6,818.7 343.8,814.4 329.5,830.8 336.4,835.2" fill="#232424" stroke="#232424" stroke-width="0.4"/><polygon points="343.8,814.4 338.0,808.9 323.5,825.2 329.5,830.8" fill="#333434" stroke="#333434" stroke-width="0.4"/><polygon points="338.0,808.9 333.2,802.5 318.6,818.7 323.5,825.2" fill="#414243" stroke="#414243" stroke-width="0.4"/><polygon points="333.2,802.5 329.6,795.6 315.0,811.6 318.6,818.7" fill="#4a4b4c" stroke="#4a4b4c" stroke-width="0.4"/><polygon points="329.6,795.6 327.5,788.2 312.8,804.1 315.0,811.6" fill="#4d4e4f" stroke="#4d4e4f" stroke-width="0.4"/><polygon points="327.5,788.2 326.8,780.8 312.1,796.6 312.8,804.1" fill="#4f5052" stroke="#4f5052" stroke-width="0.4"/><polygon points="326.8,780.8 327.7,773.5 313.0,789.2 312.1,796.6" fill="#525355" stroke="#525355" stroke-width="0.4"/><polygon points="327.7,773.5 330.0,766.8 315.3,782.4 313.0,789.2" fill="#545658" stroke="#545658" stroke-width="0.4"/><polygon points="330.0,766.8 333.7,760.8 319.1,776.3 315.3,782.4" fill="#56585a" stroke="#56585a" stroke-width="0.4"/><polygon points="333.7,760.8 338.6,755.7 324.1,771.1 319.1,776.3" fill="#57595b" stroke="#57595b" stroke-width="0.4"/><polygon points="338.6,755.7 344.6,751.8 330.2,767.2 324.1,771.1" fill="#585a5c" stroke="#585a5c" stroke-width="0.4"/><polygon points="344.6,751.8 351.5,749.3 337.1,764.6 330.2,767.2" fill="#595b5d" stroke="#595b5d" stroke-width="0.4"/><polygon points="351.5,749.3 358.8,748.1 344.6,763.5 337.1,764.6" fill="#595b5d" stroke="#595b5d" stroke-width="0.4"/><polygon points="358.8,748.1 366.5,748.4 352.4,763.8 344.6,763.5" fill="#57595b" stroke="#57595b" stroke-width="0.4"/><polygon points="366.5,748.4 374.1,750.1 360.2,765.6 352.4,763.8" fill="#555759" stroke="#555759" stroke-width="0.4"/><polygon points="374.1,750.1 381.4,753.3 367.6,768.8 360.2,765.6" fill="#525355" stroke="#525355" stroke-width="0.4"/><polygon points="381.4,753.3 388.2,757.6 374.5,773.2 367.6,768.8" fill="#4a4b4d" stroke="#4a4b4d" stroke-width="0.4"/><polygon points="388.2,757.6 394.0,763.1 380.5,778.8 374.5,773.2" fill="#434445" stroke="#434445" stroke-width="0.4"/><polygon points="394.0,763.1 398.8,769.5 385.4,785.3 380.5,778.8" fill="#3c3c3d" stroke="#3c3c3d" stroke-width="0.4"/><polygon points="398.8,769.5 402.4,776.4 389.0,792.4 385.4,785.3" fill="#353536" stroke="#353536" stroke-width="0.4"/><polygon points="402.4,776.4 404.5,783.8 391.2,799.9 389.0,792.4" fill="#303031" stroke="#303031" stroke-width="0.4"/><polygon points="404.5,783.8 405.2,791.2 391.9,807.4 391.2,799.9" fill="#2b2b2c" stroke="#2b2b2c" stroke-width="0.4"/><polygon points="405.2,791.2 404.3,798.5 391.0,814.8 391.9,807.4" fill="#282829" stroke="#282829" stroke-width="0.4"/><polygon points="404.3,798.5 402.0,805.2 388.7,821.6 391.0,814.8" fill="#252526" stroke="#252526" stroke-width="0.4"/><polygon points="402.0,805.2 398.3,811.2 384.9,827.7 388.7,821.6" fill="#242425" stroke="#242425" stroke-width="0.4"/><polygon points="384.9,827.7 379.9,832.9 374.6,834.9 379.1,830.6" fill="#29292a" stroke="#29292a" stroke-width="0.4"/><polygon points="379.9,832.9 373.8,836.8 369.1,838.1 374.6,834.9" fill="#282829" stroke="#282829" stroke-width="0.4"/><polygon points="373.8,836.8 366.9,839.4 362.8,840.0 369.1,838.1" fill="#282829" stroke="#282829" stroke-width="0.4"/><polygon points="366.9,839.4 359.4,840.5 356.1,840.6 362.8,840.0" fill="#29292a" stroke="#29292a" stroke-width="0.4"/><polygon points="359.4,840.5 351.6,840.2 349.1,839.9 356.1,840.6" fill="#2b2b2c" stroke="#2b2b2c" stroke-width="0.4"/><polygon points="351.6,840.2 343.8,838.4 342.1,837.9 349.1,839.9" fill="#2f2f30" stroke="#2f2f30" stroke-width="0.4"/><polygon points="343.8,838.4 336.4,835.2 335.5,834.7 342.1,837.9" fill="#353536" stroke="#353536" stroke-width="0.4"/><polygon points="336.4,835.2 329.5,830.8 329.4,830.4 335.5,834.7" fill="#3b3c3d" stroke="#3b3c3d" stroke-width="0.4"/><polygon points="329.5,830.8 323.5,825.2 324.0,825.1 329.4,830.4" fill="#3f4041" stroke="#3f4041" stroke-width="0.4"/><polygon points="323.5,825.2 318.6,818.7 319.7,819.1 324.0,825.1" fill="#434445" stroke="#434445" stroke-width="0.4"/><polygon points="318.6,818.7 315.0,811.6 316.5,812.6 319.7,819.1" fill="#474849" stroke="#474849" stroke-width="0.4"/><polygon points="315.0,811.6 312.8,804.1 314.6,805.8 316.5,812.6" fill="#4a4b4c" stroke="#4a4b4c" stroke-width="0.4"/><polygon points="312.8,804.1 312.1,796.6 314.0,799.1 314.6,805.8" fill="#4d4e50" stroke="#4d4e50" stroke-width="0.4"/><polygon points="312.1,796.6 313.0,789.2 314.9,792.6 314.0,799.1" fill="#535456" stroke="#535456" stroke-width="0.4"/><polygon points="313.0,789.2 315.3,782.4 317.0,786.6 314.9,792.6" fill="#585a5c" stroke="#585a5c" stroke-width="0.4"/><polygon points="315.3,782.4 319.1,776.3 320.5,781.4 317.0,786.6" fill="#5f6163" stroke="#5f6163" stroke-width="0.4"/><polygon points="319.1,776.3 324.1,771.1 325.0,777.1 320.5,781.4" fill="#67696b" stroke="#67696b" stroke-width="0.4"/><polygon points="324.1,771.1 330.2,767.2 330.5,773.9 325.0,777.1" fill="#707274" stroke="#707274" stroke-width="0.4"/><polygon points="330.2,767.2 337.1,764.6 336.8,772.0 330.5,773.9" fill="#76787a" stroke="#76787a" stroke-width="0.4"/><polygon points="337.1,764.6 344.6,763.5 343.5,771.4 336.8,772.0" fill="#7c7e80" stroke="#7c7e80" stroke-width="0.4"/><polygon points="344.6,763.5 352.4,763.8 350.5,772.1 343.5,771.4" fill="#7c7e80" stroke="#7c7e80" stroke-width="0.4"/><polygon points="352.4,763.8 360.2,765.6 357.5,774.1 350.5,772.1" fill="#737577" stroke="#737577" stroke-width="0.4"/><polygon points="360.2,765.6 367.6,768.8 364.1,777.3 357.5,774.1" fill="#696b6d" stroke="#696b6d" stroke-width="0.4"/><polygon points="367.6,768.8 374.5,773.2 370.2,781.6 364.1,777.3" fill="#5f6163" stroke="#5f6163" stroke-width="0.4"/><polygon points="374.5,773.2 380.5,778.8 375.6,786.9 370.2,781.6" fill="#545658" stroke="#545658" stroke-width="0.4"/><polygon points="380.5,778.8 385.4,785.3 379.9,792.9 375.6,786.9" fill="#4a4b4c" stroke="#4a4b4c" stroke-width="0.4"/><polygon points="385.4,785.3 389.0,792.4 383.1,799.4 379.9,792.9" fill="#3e3f41" stroke="#3e3f41" stroke-width="0.4"/><polygon points="389.0,792.4 391.2,799.9 385.0,806.2 383.1,799.4" fill="#38393a" stroke="#38393a" stroke-width="0.4"/><polygon points="391.2,799.9 391.9,807.4 385.6,812.9 385.0,806.2" fill="#333334" stroke="#333334" stroke-width="0.4"/><polygon points="391.9,807.4 391.0,814.8 384.7,819.4 385.6,812.9" fill="#303031" stroke="#303031" stroke-width="0.4"/><polygon points="391.0,814.8 388.7,821.6 382.6,825.4 384.7,819.4" fill="#2d2d2e" stroke="#2d2d2e" stroke-width="0.4"/><polygon points="388.7,821.6 384.9,827.7 379.1,830.6 382.6,825.4" fill="#2b2b2c" stroke="#2b2b2c" stroke-width="0.4"/><ellipse cx="349.8" cy="806" rx="38.3" ry="31.8" transform="rotate(40 349.8 806)" fill="#47484a" /><polygon points="366.2,822.1 363.5,824.6 365.5,814.8 367.5,812.9" fill="#c6c7c8" stroke="#c6c7c8" stroke-width="0.4"/><polygon points="363.5,824.6 360.2,826.5 363.1,816.2 365.5,814.8" fill="#c8c9ca" stroke="#c8c9ca" stroke-width="0.4"/><polygon points="360.2,826.5 356.5,827.6 360.3,817.1 363.1,816.2" fill="#c9cacb" stroke="#c9cacb" stroke-width="0.4"/><polygon points="356.5,827.6 352.5,828.0 357.3,817.4 360.3,817.1" fill="#cbcccd" stroke="#cbcccd" stroke-width="0.4"/><polygon points="352.5,828.0 348.3,827.6 354.2,817.1 357.3,817.4" fill="#c7c8c9" stroke="#c7c8c9" stroke-width="0.4"/><polygon points="348.3,827.6 344.2,826.4 351.1,816.2 354.2,817.1" fill="#c3c4c5" stroke="#c3c4c5" stroke-width="0.4"/><polygon points="344.2,826.4 340.2,824.5 348.2,814.7 351.1,816.2" fill="#b5b6b7" stroke="#b5b6b7" stroke-width="0.4"/><polygon points="340.2,824.5 336.6,821.9 345.4,812.8 348.2,814.7" fill="#a4a5a6" stroke="#a4a5a6" stroke-width="0.4"/><polygon points="336.6,821.9 333.4,818.7 343.1,810.5 345.4,812.8" fill="#909192" stroke="#909192" stroke-width="0.4"/><polygon points="333.4,818.7 330.8,815.2 341.1,807.8 343.1,810.5" fill="#7c7d7e" stroke="#7c7d7e" stroke-width="0.4"/><polygon points="330.8,815.2 328.9,811.3 339.7,804.9 341.1,807.8" fill="#6a6b6b" stroke="#6a6b6b" stroke-width="0.4"/><polygon points="328.9,811.3 327.8,807.3 338.9,801.9 339.7,804.9" fill="#595a5a" stroke="#595a5a" stroke-width="0.4"/><polygon points="327.8,807.3 327.4,803.3 338.6,798.9 338.9,801.9" fill="#4f4f4f" stroke="#4f4f4f" stroke-width="0.4"/><polygon points="327.4,803.3 327.9,799.4 339.0,796.0 338.6,798.9" fill="#4a4949" stroke="#4a4949" stroke-width="0.4"/><polygon points="327.9,799.4 329.2,795.9 340.0,793.4 339.0,796.0" fill="#454443" stroke="#454443" stroke-width="0.4"/><polygon points="329.2,795.9 331.2,792.7 341.5,791.1 340.0,793.4" fill="#424140" stroke="#424140" stroke-width="0.4"/><polygon points="331.2,792.7 333.9,790.2 343.5,789.2 341.5,791.1" fill="#403f3e" stroke="#403f3e" stroke-width="0.4"/><polygon points="333.9,790.2 337.2,788.3 345.9,787.8 343.5,789.2" fill="#3d3c3b" stroke="#3d3c3b" stroke-width="0.4"/><polygon points="337.2,788.3 340.9,787.2 348.7,786.9 345.9,787.8" fill="#3c3b3a" stroke="#3c3b3a" stroke-width="0.4"/><polygon points="340.9,787.2 344.9,786.8 351.7,786.6 348.7,786.9" fill="#3b3b3a" stroke="#3b3b3a" stroke-width="0.4"/><polygon points="344.9,786.8 349.1,787.2 354.8,786.9 351.7,786.6" fill="#3a3a3a" stroke="#3a3a3a" stroke-width="0.4"/><polygon points="349.1,787.2 353.2,788.4 357.9,787.8 354.8,786.9" fill="#3d3d3d" stroke="#3d3d3d" stroke-width="0.4"/><polygon points="353.2,788.4 357.2,790.3 360.8,789.3 357.9,787.8" fill="#414141" stroke="#414141" stroke-width="0.4"/><polygon points="357.2,790.3 360.8,792.9 363.6,791.2 360.8,789.3" fill="#464646" stroke="#464646" stroke-width="0.4"/><polygon points="360.8,792.9 364.0,796.1 365.9,793.5 363.6,791.2" fill="#4d4d4d" stroke="#4d4d4d" stroke-width="0.4"/><polygon points="364.0,796.1 366.6,799.6 367.9,796.2 365.9,793.5" fill="#616262" stroke="#616262" stroke-width="0.4"/><polygon points="366.6,799.6 368.5,803.5 369.3,799.1 367.9,796.2" fill="#757677" stroke="#757677" stroke-width="0.4"/><polygon points="368.5,803.5 369.6,807.5 370.1,802.1 369.3,799.1" fill="#8a8b8c" stroke="#8a8b8c" stroke-width="0.4"/><polygon points="369.6,807.5 370.0,811.5 370.4,805.1 370.1,802.1" fill="#a1a2a3" stroke="#a1a2a3" stroke-width="0.4"/><polygon points="370.0,811.5 369.5,815.4 370.0,808.0 370.4,805.1" fill="#b5b6b7" stroke="#b5b6b7" stroke-width="0.4"/><polygon points="369.5,815.4 368.2,818.9 369.0,810.6 370.0,808.0" fill="#bbbcbd" stroke="#bbbcbd" stroke-width="0.4"/><polygon points="368.2,818.9 366.2,822.1 367.5,812.9 369.0,810.6" fill="#c0c1c2" stroke="#c0c1c2" stroke-width="0.4"/><ellipse cx="354.5" cy="802" rx="17" ry="14.1" transform="rotate(40 354.5 802)" fill="#84878a" /></g><path d="M122.3 721.4 L116 668.6 L112.5 666.9 L109.9 658.7 L169 612.6 L192.3 625.6 L191.4 632.5 L190.8 668.6 L190.5 668.6 C191.2 666.9 190.2 667.7 192.5 663.5 C194.8 659.3 193.9 660.5 197.4 656.0 C200.9 651.5 199.0 653.7 203.0 650.0 C207.0 646.3 205.0 647.9 209.5 645.0 C214.0 642.1 211.7 643.2 216.5 641.2 C221.3 639.2 219.2 639.9 224.0 639.0 C228.8 638.1 226.3 638.2 231.0 638.5 C235.7 638.8 233.3 638.2 238.0 640.0 C242.7 641.8 240.6 640.8 245.0 644.0 C249.4 647.2 247.6 645.7 251.3 649.7 C255.0 653.7 253.6 652.1 256.0 656.0 C258.4 659.9 257.7 659.7 258.5 661.5 L296.5 655.8 L310 666.5 L337.5 677.5 L349.3 664.8 L359 665.6 L359.3 680 L382.7 698.5 L382.7 698.5 C383.6 696.5 383.2 696.2 385.5 692.5 C387.8 688.8 386.2 690.7 389.5 687.5 C392.8 684.3 391.2 685.5 395.5 682.8 C399.8 680.1 397.7 681.1 402.5 679.5 C407.3 677.9 405.1 678.5 410.0 678.0 C414.9 677.5 412.3 677.4 417.3 678.0 C422.3 678.6 420.0 678.2 425.0 679.8 C430.0 681.4 427.7 680.4 432.2 682.9 C436.7 685.4 434.6 684.0 438.5 687.3 C442.4 690.6 440.7 688.9 443.8 692.8 C446.9 696.7 445.6 694.6 447.8 699.0 C450.0 703.4 449.1 701.7 450.4 706.0 C451.7 710.3 451.3 708.1 451.8 712.0 C452.3 715.9 452.3 713.6 452.0 717.6 C451.7 721.6 452.0 719.9 451.0 724.0 C450.0 728.1 450.8 725.7 449.0 730.0 C447.2 734.3 448.0 732.5 445.5 737.0 C443.0 741.5 443.8 739.9 441.5 743.5 C439.2 747.1 439.6 746.3 438.6 747.7 L446 755.5 L451.7 749.5 L454.6 731.4 L457.3 726.9 L493 747.6 L489.4 758.6 L451.2 830.4 L409.8 819.3 L414 786.2 L400.5 784 L399.7 783.8 C400.1 785.9 400.5 785.3 400.8 790.0 C401.1 794.7 401.4 792.1 400.5 797.8 C399.6 803.5 400.2 801.0 398.0 807.0 C395.8 813.0 397.6 809.9 393.9 815.9 C390.2 821.9 391.9 819.5 387.0 825.0 C382.1 830.5 384.4 828.3 379.1 832.5 C373.8 836.7 376.5 834.9 371.0 837.6 C365.5 840.3 368.1 839.6 362.6 840.7 C357.1 841.8 360.0 841.5 354.5 841.0 C349.0 840.5 352.1 841.1 346.1 839.1 C340.1 837.1 342.6 838.3 336.5 835.0 C330.4 831.7 333.2 833.7 327.9 829.2 C322.6 824.7 324.6 826.9 320.5 821.5 C316.4 816.1 318.0 818.5 315.5 813.0 C313.0 807.5 314.1 810.7 313.0 805.0 C311.9 799.3 312.1 802.0 312.2 796.0 C312.3 790.0 311.5 792.7 313.2 787.0 C314.9 781.3 315.9 781.5 317.2 778.8 L312.6 779.6 L304 787.3 L205.2 767.5 L202.5 751.5 L199 750 L199.2 748.0 C198.5 751.0 199.2 751.2 197.0 757.0 C194.8 762.8 196.2 760.2 192.5 765.5 C188.8 770.8 190.4 768.4 186.0 773.0 C181.6 777.6 184.0 775.2 179.3 779.2 C174.6 783.2 176.8 782.0 172.0 785.0 C167.2 788.0 169.7 787.1 165.0 788.2 C160.3 789.3 163.2 789.0 158.0 788.3 C152.8 787.6 155.2 788.1 149.5 786.0 C143.8 783.9 146.5 785.3 141.0 782.0 C135.5 778.7 138.0 781.0 133.0 776.0 C128.0 771.0 130.2 773.2 126.0 767.0 C121.8 760.8 123.3 763.8 120.5 757.5 C117.7 751.2 119.0 754.5 117.5 748.0 C116.0 741.5 116.0 744.7 116.0 738.0 C116.0 731.3 115.4 733.5 117.5 728.0 C119.6 722.5 120.7 723.6 122.3 721.4 Z" stroke="#ffa028" stroke-width="1.5" fill="none" stroke-linejoin="round"/><path d="M144.9 672.2 L162.3 656.4 L163.4 671 L163.7 690.9 L152.8 700.6 L148 701 Z" stroke="#ffa028" stroke-width="1.5" fill="none" stroke-linejoin="round"/><circle cx="493.5" cy="755.8" r="2.6" fill="#ffa028" stroke="#1a1a1a" stroke-width="0.8"/><circle cx="424" cy="789.2" r="1.6" fill="#ffa028"/></g></svg>
<div class="hdr">
<div class="btn" style="left:8px;top:5px;width:30px"><svg style="left:2px;top:1px" width="16" height="16" viewBox="0 0 16 16"><g fill="none" stroke="#d4d4d4" stroke-width="1.1" stroke-linecap="round"><path d="M3.100 7.400 H8.900 M1.900 11.500 H15.900 M6.400 4.900 L4.600 15 M12.600 9.200 L13.700 15"/></g><circle cx="12.600" cy="4.500" r="3.500" fill="#d4d4d4"/><path d="M10.600 4.300 A2.300 2.300 0 0 1 12.400 2.300" fill="none" stroke="#555" stroke-width="0.700"/></svg><svg style="left:20.4px;top:6.3px" width="9" height="7" viewBox="0 0 9 7"><path d="M1.600 1.500 L4.500 4.500 L7.400 1.500" fill="none" stroke="#c6c6c6" stroke-width="1.500" stroke-linecap="round" stroke-linejoin="round"/></svg></div>
<svg style="left:51px;top:3px" width="22" height="22" viewBox="0 0 22 22"><rect x="0.6" y="0.6" width="20.8" height="20.8" fill="none" stroke="#ffa92a" stroke-width="1.05" stroke-dasharray="3.65 1.55" stroke-dashoffset="1.82"/><path d="M7.6 5.2 L15.6 11.3 L11.2 12 L7.9 16.3 Z" fill="#dedede"/></svg>
<div class="btn on" style="left:88.0px;top:5px;width:18.2px;border-radius:3px 0 0 3px;"><svg style="left:1px;top:1px" width="16" height="16" viewBox="0 0 16 16"><rect x="2" y="2.5" width="12" height="11.5" fill="none" stroke="#fff" stroke-width="1" stroke-dasharray="2.1 1.2"/></svg></div>
<div class="btn tog" style="left:106.8px;top:5px;width:18.2px;border-radius:0;"><svg style="left:1px;top:1px" width="16" height="16" viewBox="0 0 16 16"><path d="M6 2 H14.5 V10 H10 V14.5 H1.5 V6.5 H6 Z" fill="#d0d0d0"/></svg></div>
<div class="btn tog" style="left:125.6px;top:5px;width:18.2px;border-radius:0;"><svg style="left:1px;top:1px" width="16" height="16" viewBox="0 0 16 16"><path d="M6 2 H14.5 V10 H10 V6.5 H6 Z" fill="#d0d0d0"/><rect x="2" y="7" width="7.5" height="7" fill="none" stroke="#d0d0d0" stroke-width="1" stroke-dasharray="1.8 1.2"/></svg></div>
<div class="btn tog" style="left:144.4px;top:5px;width:18.2px;border-radius:0;"><svg style="left:1px;top:1px" width="16" height="16" viewBox="0 0 16 16"><path d="M6 2 H14.5 V10 H10 V14.5 H1.5 V6.5 H6 Z M6 6.5 V10 H10 V6.5 Z" fill="#d0d0d0" fill-rule="evenodd"/></svg></div>
<div class="btn tog" style="left:163.2px;top:5px;width:18.2px;border-radius:0 3px 3px 0;"><svg style="left:1px;top:1px" width="16" height="16" viewBox="0 0 16 16"><rect x="2" y="2.5" width="12" height="11.5" fill="none" stroke="#d0d0d0" stroke-width="1" stroke-dasharray="2 1.3"/><rect x="5" y="5.5" width="6" height="5.5" fill="#d0d0d0"/></svg></div>
<div class="btn" style="left:200px;top:5px;width:78px"><svg style="left:5px;top:1px" width="16" height="16" viewBox="0 0 16 16"><g fill="none" stroke="#d4d4d4" stroke-width="1.2" stroke-linecap="round" stroke-linejoin="round"><path d="M4.5 2 V10.5 L14 14 M4.5 10.5 L2 14.5"/><path d="M2.5 4 L4.5 1.5 L6.5 4 M11.5 15 L14.5 14 L12.8 11.5"/></g><circle cx="4.5" cy="10.5" r="1.3" fill="#d4d4d4"/></svg><span class="t" style="left:25px">Global</span><svg style="left:67.9px;top:6.3px" width="9" height="7" viewBox="0 0 9 7"><path d="M1.600 1.500 L4.500 4.500 L7.400 1.500" fill="none" stroke="#c6c6c6" stroke-width="1.500" stroke-linecap="round" stroke-linejoin="round"/></svg></div>
<div class="btn" style="left:285px;top:5px;width:30px"><svg style="left:3px;top:1px" width="16" height="16" viewBox="0 0 16 16"><g fill="none" stroke="#d4d4d4" stroke-width="1.150"><circle cx="4.900" cy="10.500" r="3.900"/><circle cx="10.400" cy="4.900" r="3.900"/></g><circle cx="8.200" cy="7.500" r="1.350" fill="#d4d4d4"/></svg><svg style="left:19.4px;top:6.3px" width="9" height="7" viewBox="0 0 9 7"><path d="M1.600 1.500 L4.500 4.500 L7.400 1.500" fill="none" stroke="#c6c6c6" stroke-width="1.500" stroke-linecap="round" stroke-linejoin="round"/></svg></div>
<div class="btn tog" style="left:322px;top:5px;width:18.5px;border-radius:3px 0 0 3px"><svg style="left:1px;top:1px" width="16" height="16" viewBox="0 0 16 16"><path d="M1.600 6.600 L6.500 2.300 C9.500 0 13.500 1.500 14.600 5.400 C15.400 8 14.500 10.500 12.500 12.400 L10.100 14.700 L8.300 12.600 L10.800 10.300 C12.200 9 12.400 7.300 11.600 6 C10.600 4.300 8.700 4 7.600 4.900 L3.600 8.500 Z" fill="none" stroke="#a2a2a2" stroke-width="1" stroke-linejoin="round"/></svg></div>
<div class="btn" style="left:341px;top:5px;width:31px;border-radius:0 3px 3px 0"><svg style="left:2px;top:1px" width="16" height="16" viewBox="0 0 16 16"><g stroke="#d4d4d4" stroke-width="1.150" fill="none"><path d="M2.200 10.300 H14.600 M2.200 6.900 V13.800 M14.600 6.900 V13.800 M6.300 8.400 V12.400 M10.500 8.400 V12.400"/></g><rect x="12.100" y="1.200" width="3.800" height="3.600" fill="#d4d4d4"/></svg><svg style="left:20.4px;top:6.3px" width="9" height="7" viewBox="0 0 9 7"><path d="M1.600 1.500 L4.500 4.500 L7.400 1.500" fill="none" stroke="#c6c6c6" stroke-width="1.500" stroke-linecap="round" stroke-linejoin="round"/></svg></div>
<div class="btn tog" style="left:379px;top:5px;width:18px;border-radius:3px 0 0 3px"><svg style="left:1px;top:1px" width="16" height="16" viewBox="0 0 16 16"><circle cx="8" cy="8" r="6.700" fill="none" stroke="#8a8a8a" stroke-width="0.900"/><circle cx="8" cy="8" r="2" fill="#b0b0b0"/></svg></div>
<div class="btn" style="left:397.5px;top:5px;width:31px;border-radius:0 3px 3px 0;background:#383838"><svg style="left:2px;top:1px" width="16" height="16" viewBox="0 0 16 16"><path d="M2 13.500 C6 13.500 6.200 2.600 9 2.600 C11.800 2.600 12 13.500 16 13.500" fill="none" stroke="#a0a0a0" stroke-width="1.100"/></svg><svg style="left:20.4px;top:6.3px" width="9" height="7" viewBox="0 0 9 7"><path d="M1.600 1.500 L4.500 4.500 L7.400 1.500" fill="none" stroke="#8a8a8a" stroke-width="1.500" stroke-linecap="round" stroke-linejoin="round"/></svg></div>
<div class="btn" style="left:452px;top:5px;width:61px"><span class="t" style="left:7.5px">Options</span><svg style="left:50.9px;top:6.3px" width="9" height="7" viewBox="0 0 9 7"><path d="M1.600 1.500 L4.500 4.500 L7.400 1.500" fill="none" stroke="#c6c6c6" stroke-width="1.500" stroke-linecap="round" stroke-linejoin="round"/></svg></div>
</div>
<div class="btn" style="left:9px;top:30px;width:108px"><svg style="left:3px;top:1px" width="16" height="16" viewBox="0 0 16.5 16.5"><rect x="4.5" y="4.5" width="7.5" height="7.5" fill="#d4d4d4"/><path d="M1.5 5 V1.5 H5 M11.5 1.5 H15 V5 M15 11.5 V15 H11.5 M5 15 H1.5 V11.5" fill="none" stroke="#d4d4d4" stroke-width="1.1"/></svg><span class="t" style="left:25.5px">Object Mode</span><svg style="left:97.9px;top:6.3px" width="9" height="7" viewBox="0 0 9 7"><path d="M1.600 1.500 L4.500 4.500 L7.400 1.500" fill="none" stroke="#c6c6c6" stroke-width="1.500" stroke-linecap="round" stroke-linejoin="round"/></svg></div>
<div class="pd" style="left:124px;width:38px"><span class="t" style="left:6.5px">View</span></div>
<div class="pd" style="left:164px;width:44px"><span class="t" style="left:6.5px">Select</span></div>
<div class="pd" style="left:210px;width:32px"><span class="t" style="left:6px">Add</span></div>
<div class="pd" style="left:244px;width:46px"><span class="t" style="left:6.5px">Object</span></div>
<div class="btn" style="left:308px;top:30px;width:30px"><svg style="left:2px;top:1px" width="17" height="16" viewBox="0 0 17 16"><path d="M6 4.700 C8.200 0.900 13.800 0.900 16 4.700 C13.800 8.500 8.200 8.500 6 4.700 Z" fill="none" stroke="#d4d4d4" stroke-width="1.300"/><circle cx="11" cy="4.600" r="1.800" fill="#d4d4d4"/><path d="M1.900 7.200 L8.600 10.400 L5.600 11.300 L4.300 14.700 Z" fill="#d4d4d4"/></svg><svg style="left:19.4px;top:6.3px" width="9" height="7" viewBox="0 0 9 7"><path d="M1.600 1.500 L4.500 4.500 L7.400 1.500" fill="none" stroke="#c6c6c6" stroke-width="1.500" stroke-linecap="round" stroke-linejoin="round"/></svg></div>
<div class="btn on" style="left:345px;top:30px;width:18px;border-radius:3px 0 0 3px"><svg style="left:1px;top:1px" width="16" height="16" viewBox="0 0 16 16"><g fill="none" stroke="#fff" stroke-width="1.100" stroke-linecap="round"><path d="M4.600 11.400 L13.600 2.400 M9.800 2.400 H13.600 V6.200"/><path d="M1.800 3.800 C7.800 3.800 12.300 8 12.300 14.400"/><circle cx="3.500" cy="12.500" r="1.600"/></g></svg></div>
<div class="btn" style="left:363.5px;top:30px;width:19px;border-radius:0 3px 3px 0"><svg style="left:5.9px;top:6.3px" width="9" height="7" viewBox="0 0 9 7"><path d="M1.600 1.500 L4.500 4.500 L7.400 1.500" fill="none" stroke="#c6c6c6" stroke-width="1.500" stroke-linecap="round" stroke-linejoin="round"/></svg></div>
<div class="btn on" style="left:390px;top:30px;width:18px;border-radius:3px 0 0 3px"><svg style="left:1px;top:1px" width="16" height="16" viewBox="0 0 16 16"><circle cx="6.400" cy="9.700" r="4.800" fill="none" stroke="#fff" stroke-width="1.200"/><circle cx="10.100" cy="5.900" r="5" fill="#5680c2"/><circle cx="10.100" cy="5.900" r="4.400" fill="#fff"/><path d="M6.400 4.900 A4.800 4.800 0 0 1 11.200 9.700" fill="none" stroke="#5680c2" stroke-width="1.100"/></svg></div>
<div class="btn" style="left:408.5px;top:30px;width:19px;border-radius:0 3px 3px 0"><svg style="left:5.9px;top:6.3px" width="9" height="7" viewBox="0 0 9 7"><path d="M1.600 1.500 L4.500 4.500 L7.400 1.500" fill="none" stroke="#c6c6c6" stroke-width="1.500" stroke-linecap="round" stroke-linejoin="round"/></svg></div>
<div class="btn tog" style="left:435px;top:30px;width:18px"><svg style="left:1px;top:1px" width="16" height="16" viewBox="0 0 16 16"><g fill="none" stroke="#e6e6e6" stroke-width="1.150"><path d="M3.400 3.900 V1.400 H14.600 V12.200 H12.100"/><rect x="1.100" y="3.900" width="11" height="10.700"/><path d="M4.200 7.500 V11.300 H8" stroke-dasharray="1.700 1.100"/></g></svg></div>
<div class="btn tog" style="left:460.0px;top:30px;width:18.2px;border-radius:3px 0 0 3px;"><svg style="left:1px;top:1px" width="16" height="16" viewBox="0 0 16 16"><g fill="none" stroke="#d4d4d4" stroke-width="0.9"><circle cx="8" cy="8" r="6.300"/><path d="M2.200 6 H13.800 M2.200 10 H13.800 M8 1.700 V14.300 M8 1.700 C4.800 5 4.800 11 8 14.300"/></g></svg></div>
<div class="btn on" style="left:478.7px;top:30px;width:18.2px;border-radius:0;"><svg style="left:1px;top:1px" width="16" height="16" viewBox="0 0 16 16"><circle cx="8" cy="8" r="6.9" fill="#fff"/></svg></div>
<div class="btn tog" style="left:497.4px;top:30px;width:18.2px;border-radius:0;"><svg style="left:1px;top:1px" width="16" height="16" viewBox="0 0 16 16"><circle cx="8" cy="8" r="6" fill="none" stroke="#d4d4d4" stroke-width="1.1"/><path d="M8 2 A6 6 0 0 0 3 11.5 L8 8 Z" fill="#b8b8b8"/><path d="M8 8 L12.5 12" stroke="#d4d4d4" stroke-width="1"/></svg></div>
<div class="btn tog" style="left:516.1px;top:30px;width:18.2px;border-radius:0;"><svg style="left:1px;top:1px" width="16" height="16" viewBox="0 0 16 16"><circle cx="8" cy="8" r="6" fill="none" stroke="#d4d4d4" stroke-width="1.1"/></svg></div>
<span class="vt" style="top:62px">User Perspective</span>
<span class="vt" style="top:82px">(1) Collection | body</span>
<div class="tool" style="top:61px;height:33px;border-radius:4px 4px 0 0;background:#5680c2;"><svg style="left:0px;top:0px" width="40" height="34" viewBox="0 0 40 34"><rect x="8.4" y="6.4" width="21.4" height="21.2" fill="none" stroke="#ffb347" stroke-width="1.05" stroke-dasharray="3.7 1.6" stroke-dashoffset="1.85"/><path d="M15.6 10.8 L24 18 L19.4 18.9 L16.2 23 Z" fill="#dfe3ea"/><path d="M39 28.5 V33 H34.5 Z" fill="#a9bfe3"/></svg></div>
<div class="tool" style="top:95px;height:34px;border-radius:0 0 4px 4px;"><svg style="left:0px;top:0px" width="40" height="34" viewBox="0 0 40 34"><circle cx="18.9" cy="16.7" r="11.2" fill="none" stroke="#ececec" stroke-width="1.3"/><circle cx="18.9" cy="16.7" r="11.2" fill="none" stroke="#b23a45" stroke-width="1.3" stroke-dasharray="4.4 4.4" stroke-dashoffset="2.2"/><path d="M18.9 8.7 V14 M18.9 19.400 V24.700 M10.900 16.700 H16.200 M21.600 16.700 H26.900" stroke="#9c9c9c" stroke-width="1.5"/></svg></div>
<div class="tool" style="top:136px;height:34px;border-radius:4px 4px 0 0;"><svg style="left:0px;top:0px" width="40" height="34" viewBox="0 0 40 34"><g fill="#dedede"><path d="M18.9 5.200 L21.700 9.600 H16.100 Z M18.900 28.600 L21.700 24.200 H16.100 Z M7.200 16.900 L11.600 14.100 V19.700 Z M30.600 16.900 L26.200 14.100 V19.700 Z"/></g><path d="M18.900 10.500 V14 M18.900 19.800 V23.300 M12.500 16.900 H16 M21.800 16.900 H25.300" stroke="#dedede" stroke-width="1.5"/></svg></div>
<div class="tool" style="top:170.5px;height:34px;border-radius:0;"><svg style="left:0px;top:0px" width="40" height="34" viewBox="0 0 40 34"><g fill="none" stroke="#dedede" stroke-width="1.2"><path d="M10.800 13.200 A9.300 9.300 0 0 1 27 13.200"/><path d="M27 21 A9.300 9.300 0 0 1 10.800 21"/></g><path d="M7.300 15.300 H12.700 L10 19.800 Z M25.100 18.900 H30.500 L27.800 14.400 Z" fill="#dedede"/><path d="M18.900 13.600 L22.400 17.100 L18.900 20.600 L15.400 17.100 Z" fill="#b8b8b8"/></svg></div>
<div class="tool" style="top:205px;height:34px;border-radius:0;"><svg style="left:0px;top:0px" width="40" height="34" viewBox="0 0 40 34"><rect x="10" y="17" width="8.600" height="8.800" fill="#e2e2e2"/><path d="M10.500 16.500 V8.800 H27.500 V24.900 H19" fill="none" stroke="#9c9c9c" stroke-width="1"/><path d="M20.300 16.200 L25.600 11.200 M22.600 10.700 H26.200 V14.300" fill="none" stroke="#e2e2e2" stroke-width="1.2"/><path d="M39 28.500 V33 H34.500 Z" fill="#7c7c7c"/></svg></div>
<div class="tool" style="top:239.5px;height:35px;border-radius:0 0 4px 4px;"><svg style="left:0px;top:0px" width="40" height="35" viewBox="0 0 40 35"><circle cx="18.900" cy="17.800" r="9.800" fill="none" stroke="#dedede" stroke-width="1.100" stroke-dasharray="10.400 5" stroke-dashoffset="-2.500"/><rect x="15.300" y="14.200" width="7.200" height="7.200" fill="#dedede"/><g fill="#dedede"><path d="M18.900 6.500 L21.200 9.900 H16.600 Z M18.900 29.100 L21.200 25.700 H16.600 Z M7.600 17.800 L11 15.500 V20.100 Z M30.200 17.800 L26.800 15.500 V20.100 Z"/></g></svg></div>
<div class="tool" style="top:281px;height:34px;border-radius:4px 4px 0 0;"><svg style="left:0px;top:0px" width="40" height="34" viewBox="0 0 40 34"><path d="M7.300 22.600 L8.600 18.300 L20.200 6.700 L23.500 10 L11.900 21.600 Z" fill="#e4e4e4"/><path d="M21.200 5.700 L22.400 4.500 L25.700 7.800 L24.500 9 Z" fill="#e4e4e4"/><path d="M7.300 22.600 L8 20.300 L9.600 21.900 Z" fill="#555"/><path d="M8.700 24.300 C12 26.500 15 26.800 18.500 23.500 C22 20 26.500 19.500 32 24" fill="none" stroke="#8fe3b8" stroke-width="1.300"/><path d="M39 28.500 V33 H34.500 Z" fill="#7c7c7c"/></svg></div>
<div class="tool" style="top:315.5px;height:34px;border-radius:0 0 4px 4px;"><svg style="left:0px;top:0px" width="40" height="34" viewBox="0 0 40 34"><path d="M15.900 24.900 V15.400 A9.500 9.500 0 0 1 25.400 24.900 Z" fill="#8fe3b8"/><path d="M15.900 12.700 A12.200 12.200 0 0 1 28.100 24.900" fill="none" stroke="#8fe3b8" stroke-width="1.100"/><rect x="10.500" y="4.800" width="5.400" height="23.300" fill="#e4e4e4"/><rect x="10.500" y="24.900" width="20.600" height="3.200" fill="#e4e4e4"/><path d="M13.200 7.500 H15.900 M13.200 10.500 H15.900 M13.200 13.500 H15.900 M13.200 16.500 H15.900 M13.200 19.500 H15.900 M13.200 22.500 H15.900 M18.500 24.900 V26.500 M21 24.900 V26.500 M23.500 24.900 V26.500 M26 24.900 V26.500 M28.500 24.900 V26.500" stroke="#2c2c2c" stroke-width="0.9"/></svg></div>
<svg style="left:425px;top:60px" width="96" height="90" viewBox="428 65 96 90"><line x1="474" y1="107" x2="474" y2="90" stroke="#2f83e8" stroke-width="1.700"/><line x1="474" y1="107" x2="462" y2="126" stroke="#ee3352" stroke-width="1.3"/><line x1="474" y1="107" x2="499" y2="116" stroke="#8bdc00" stroke-width="1.3"/><circle cx="488.200" cy="84.400" r="6.2" fill="#96404f"/><circle cx="444.900" cy="96" r="6.2" fill="#5f8a20"/><circle cx="474" cy="127.700" r="6.2" fill="#2c64a3"/><circle cx="474" cy="86" r="7.9" fill="#2e8fff"/><circle cx="503.300" cy="117.300" r="7.9" fill="#8bdc00"/><circle cx="460" cy="129" r="7.9" fill="#ff3352"/><text x="474" y="89.7" style="font-family:'DejaVu Sans Condensed','DejaVu Sans',sans-serif;font-size:10px;font-stretch:condensed;fill:#0a0a0a;text-anchor:middle">Z</text><text x="503.3" y="121" style="font-family:'DejaVu Sans Condensed','DejaVu Sans',sans-serif;font-size:10px;font-stretch:condensed;fill:#0a0a0a;text-anchor:middle">Y</text><text x="460" y="132.700" style="font-family:'DejaVu Sans Condensed','DejaVu Sans',sans-serif;font-size:10px;font-stretch:condensed;fill:#0a0a0a;text-anchor:middle">X</text></svg>
<div class="nav" style="top:142.5px"><svg style="left:0px;top:1px" width="28" height="28" viewBox="0 0 28 28"><circle cx="15.500" cy="11.500" r="5.300" fill="none" stroke="#dcdcdc" stroke-width="1.600"/><path d="M11.500 15.500 L6.500 20.500" stroke="#dcdcdc" stroke-width="2.200" stroke-linecap="round"/><path d="M15.500 8.700 V14.300 M12.700 11.500 H18.300" stroke="#dcdcdc" stroke-width="1.300"/></svg></div>
<div class="nav" style="top:172.7px"><svg style="left:0px;top:1px" width="28" height="28" viewBox="0 0 28 28"><path d="M8.500 13 C7 11.500 5 12 6 13.500 L10.500 20 C12 22 17 22 18.500 19.500 C20 16.500 21 11 21 9 C21 7.800 19.500 7.800 19.300 9 L18.500 13 L18 7 C18 5.500 16.200 5.500 16.200 7 L16 12.500 L15 6 C14.800 4.500 13 4.800 13.200 6.200 L13.700 12.800 L11.800 7.500 C11.300 6.200 9.700 6.800 10.200 8.200 L12 15.500 Z" fill="#dcdcdc"/></svg></div>
<div class="nav" style="top:203.3px"><svg style="left:0px;top:1px" width="28" height="28" viewBox="0 0 28 28"><g fill="#dcdcdc"><circle cx="10" cy="10" r="3.400"/><circle cx="16.500" cy="8.800" r="4.200"/><rect x="8" y="13.500" width="10.500" height="7" rx="1"/><path d="M19 17 L23 14.500 V19.500 Z"/></g><circle cx="10" cy="10" r="1.200" fill="#555"/><circle cx="16.500" cy="8.800" r="1.500" fill="#555"/></svg></div>
<div class="nav" style="top:233.5px"><svg style="left:0px;top:1px" width="28" height="28" viewBox="0 0 28 28"><g fill="none" stroke="#dcdcdc" stroke-width="1.300"><path d="M9.500 8 H18.500 L22 20.500 H6 Z M8.300 12 H19.700 M7.200 16 H20.800 M12.500 8 L11.300 20.500 M15.500 8 L16.700 20.500"/></g></svg></div>
<div style="left:513px;top:67px;width:9px;height:13px;background:rgba(30,30,30,.55);border-radius:3px 0 0 3px"><svg style="left:1px;top:2px" width="7" height="9" viewBox="0 0 7 9"><path d="M5.500 1 L1.500 4.500 L5.500 8" fill="none" stroke="#a0a0a0" stroke-width="1.100"/></svg></div>
</div></div>
<div class="panel ol" style="left:527px;top:435px;width:441px;height:469px"><div style="left:0;top:-1px;width:441px;height:470px">
<div class="row alt" style="top:47px"></div>
<div class="row alt" style="top:87px"></div>
<div class="row alt" style="top:127px"></div>
<div class="row alt" style="top:167px"></div>
<div class="row alt" style="top:207px"></div>
<div class="row alt" style="top:247px"></div>
<div class="row alt" style="top:287px"></div>
<div class="row alt" style="top:327px"></div>
<div class="row alt" style="top:367px"></div>
<div class="row alt" style="top:407px"></div>
<div class="row alt" style="top:447px"></div>
<div class="row" style="top:67px;background:#3b5689"></div>
<div style="left:49px;top:62px;width:1px;height:55px;background:#7a7a7a"></div>
<svg style="left:22px;top:29px" width="16" height="16" viewBox="0 0 16 16"><g fill="none" stroke="#d8d8d8" stroke-width="1.200"><rect x="1.600" y="1.800" width="12.800" height="3.200"/><path d="M2.600 5 V14.200 H13.400 V5"/></g><rect x="6" y="7.200" width="4" height="1.800" fill="#d8d8d8"/></svg>
<span class="rt" style="left:44px;top:27px">Scene Collection</span>
<svg style="left:25px;top:53px" width="8" height="8" viewBox="0 0 8 8"><path d="M0.5 1 L7.5 1 L4 7.5 Z" fill="#c8c8c8"/></svg>
<div style="left:45px;top:51.5px;width:10.5px;height:10.5px;background:#e6e6e6;border-radius:1.5px"><svg style="left:0;top:0" width="10.5" height="10.5" viewBox="0 0 10.5 10.5"><path d="M2 5.2 L4.3 7.8 L8.6 2.6" fill="none" stroke="#1a1a1a" stroke-width="1.8"/></svg></div>
<div style="left:60.200px;top:48px;width:19.600px;height:18px;border-radius:4px;background:rgba(255,255,255,.12);border:1px solid rgba(255,255,255,.12)"></div>
<svg style="left:62px;top:49px" width="16" height="16" viewBox="0 0 16 16"><g fill="none" stroke="#e8e8e8" stroke-width="1.200"><rect x="1.600" y="1.800" width="12.800" height="3.200"/><path d="M2.600 5 V14.200 H13.400 V5"/></g><rect x="6" y="7.200" width="4" height="1.800" fill="#e8e8e8"/></svg>
<span class="rt" style="left:84.5px;top:47px">Collection</span>
<svg style="left:416px;top:50px" width="16" height="14" viewBox="0 0 16 14"><path d="M1.600 7 C4.200 2.600 11.800 2.600 14.400 7 C11.800 11.400 4.200 11.400 1.600 7 Z" fill="none" stroke="#e2e2e2" stroke-width="1.300"/><circle cx="8" cy="7" r="2.700" fill="#e2e2e2"/><circle cx="8" cy="7" r="0.900" fill="#555"/></svg>
<div style="left:50px;top:77px;width:12px;height:1px;background:#7a7a7a"></div>
<svg style="left:46.700px;top:73px" width="7" height="8" viewBox="0 0 7 8"><path d="M0.500 0.500 L6.500 4 L0.500 7.500 Z" fill="#c8c8c8"/></svg>
<div style="left:60.200px;top:68px;width:19.600px;height:18px;border-radius:4px;background:rgba(255,255,255,.2);border:1px solid rgba(255,255,255,.15)"></div>
<svg style="left:62px;top:69px" width="16" height="16" viewBox="0 0 16 16"><path d="M3.200 2.100 H13 L8.100 12.900 Z" fill="none" stroke="#e2955c" stroke-width="3" stroke-linejoin="round"/></svg>
<span class="rt" style="left:84.5px;top:67px;color:#ffaf29">body</span>
<svg style="left:130px;top:69px" width="16" height="16" viewBox="0 0 16 16"><path d="M3 3 H13 L8 13 Z" fill="none" stroke="#19c9a5" stroke-width="1.100"/><g fill="#223a5d" stroke="#19c9a5" stroke-width="1.100"><rect x="1.500" y="1.500" width="3" height="3"/><rect x="11.500" y="1.500" width="3" height="3"/><rect x="6.500" y="11.500" width="3" height="3"/></g></svg>
<svg style="left:416px;top:70px" width="16" height="14" viewBox="0 0 16 14"><path d="M1.600 7 C4.200 2.600 11.800 2.600 14.400 7 C11.800 11.400 4.200 11.400 1.600 7 Z" fill="none" stroke="#e2e2e2" stroke-width="1.300"/><circle cx="8" cy="7" r="2.700" fill="#e2e2e2"/><circle cx="8" cy="7" r="0.900" fill="#555"/></svg>
<div style="left:50px;top:97px;width:12px;height:1px;background:#7a7a7a"></div>
<svg style="left:46.700px;top:93px" width="7" height="8" viewBox="0 0 7 8"><path d="M0.500 0.500 L6.500 4 L0.500 7.500 Z" fill="#c8c8c8"/></svg>
<svg style="left:62px;top:89px" width="16" height="16" viewBox="0 0 16 16"><g fill="#e2955c"><circle cx="3.200" cy="5.200" r="2.700"/><circle cx="10.200" cy="4.300" r="3.700"/><rect x="3" y="9.300" width="8.800" height="5.400" rx="0.800"/><path d="M12.200 12 L15.400 10 V14.700 L12.200 13 Z"/></g><circle cx="3.200" cy="5.200" r="0.900" fill="#2b2b2b"/><circle cx="10.200" cy="4.300" r="1.200" fill="#2b2b2b"/></svg>
<span class="rt" style="left:84.5px;top:87px;color:#dcdcdc">Camera</span>
<div style="left:143.2px;top:88px;width:19.600px;height:18px;border-radius:4px;background:rgba(255,255,255,.22);border:1px solid rgba(255,255,255,.1)"></div>
<svg style="left:145px;top:89px" width="16" height="16" viewBox="0 0 16 16"><g fill="none" stroke="#19c9a5" stroke-width="1.200"><circle cx="4.500" cy="5.300" r="2.300"/><circle cx="10.500" cy="4.800" r="3"/><rect x="3" y="8.800" width="9" height="5.200" rx="1"/></g><path d="M13 11.500 L15.500 9.800 V13.500 Z" fill="#19c9a5"/></svg>
<svg style="left:416px;top:90px" width="16" height="14" viewBox="0 0 16 14"><path d="M1.600 7 C4.200 2.600 11.800 2.600 14.400 7 C11.800 11.400 4.200 11.400 1.600 7 Z" fill="none" stroke="#e2e2e2" stroke-width="1.300"/><circle cx="8" cy="7" r="2.700" fill="#e2e2e2"/><circle cx="8" cy="7" r="0.900" fill="#555"/></svg>
<div style="left:50px;top:117px;width:12px;height:1px;background:#7a7a7a"></div>
<svg style="left:46.700px;top:113px" width="7" height="8" viewBox="0 0 7 8"><path d="M0.500 0.500 L6.500 4 L0.500 7.500 Z" fill="#c8c8c8"/></svg>
<svg style="left:62px;top:109px" width="16" height="16" viewBox="0 0 16 16"><path d="M8.200 1.100 A5.900 5.900 0 0 1 11.400 11.800 V12.600 H5 V11.800 A5.900 5.900 0 0 1 8.200 1.100 Z" fill="#e2955c"/><path d="M5.500 14.100 H10.900 M6.700 15.600 H9.700" stroke="#e2955c" stroke-width="1.100"/><path d="M5.800 6.700 L6.800 8.900 L8.200 7.400 L9.600 8.900 L10.600 6.700" fill="none" stroke="#2b2b2b" stroke-width="0.900"/></svg>
<span class="rt" style="left:84.5px;top:107px;color:#dcdcdc">Light</span>
<svg style="left:130px;top:109px" width="16" height="16" viewBox="0 0 16 16"><circle cx="8" cy="7.500" r="6" fill="none" stroke="#19c9a5" stroke-width="1.100"/><circle cx="8" cy="7.500" r="1.200" fill="#19c9a5"/><path d="M8 9 V16" stroke="#19c9a5" stroke-width="1" stroke-dasharray="1.500 1"/></svg>
<svg style="left:416px;top:110px" width="16" height="14" viewBox="0 0 16 14"><path d="M1.600 7 C4.200 2.600 11.800 2.600 14.400 7 C11.800 11.400 4.200 11.400 1.600 7 Z" fill="none" stroke="#e2e2e2" stroke-width="1.300"/><circle cx="8" cy="7" r="2.700" fill="#e2e2e2"/><circle cx="8" cy="7" r="0.900" fill="#555"/></svg>
<div class="hdr">
<div class="btn" style="left:9px;top:4px;width:30px"><svg style="left:2px;top:1px" width="16" height="16" viewBox="0 0 16 16"><rect x="2" y="2" width="5.500" height="3" fill="#d4d4d4"/><rect x="7.500" y="7" width="7" height="2.500" fill="#d4d4d4"/><rect x="7.500" y="11.500" width="7" height="2.500" fill="#d4d4d4"/><path d="M4 5 V12.500 H7 M4 8.300 H7" fill="none" stroke="#d4d4d4" stroke-width="1"/></svg><svg style="left:19.4px;top:6.3px" width="9" height="7" viewBox="0 0 9 7"><path d="M1.600 1.500 L4.500 4.500 L7.400 1.500" fill="none" stroke="#c6c6c6" stroke-width="1.500" stroke-linecap="round" stroke-linejoin="round"/></svg></div>
<div class="btn" style="left:46px;top:4px;width:30px"><svg style="left:2px;top:1px" width="16" height="16" viewBox="0 0 16 16"><g fill="none" stroke="#d4d4d4" stroke-width="1"><path d="M2 5.500 V14.500 H11"/><path d="M4 3.500 V12.500 H13"/><rect x="6" y="1.500" width="9" height="9"/></g><path d="M6.500 10 L9.500 5.500 L11 7.500 L12.500 6 L14.500 10 Z" fill="#d4d4d4"/><circle cx="13" cy="3.500" r="1" fill="#d4d4d4"/></svg><svg style="left:19.4px;top:6.3px" width="9" height="7" viewBox="0 0 9 7"><path d="M1.600 1.500 L4.500 4.500 L7.400 1.500" fill="none" stroke="#c6c6c6" stroke-width="1.500" stroke-linecap="round" stroke-linejoin="round"/></svg></div>
<div class="btn" style="left:155px;top:4px;width:109px;background:#1f1f1f"><svg style="left:3px;top:1px" width="16" height="16" viewBox="0 0 16 16"><circle cx="10" cy="6.500" r="4.300" fill="none" stroke="#d4d4d4" stroke-width="1.300"/><path d="M7 10 L2.500 14.500" stroke="#d4d4d4" stroke-width="1.600" stroke-linecap="round"/></svg></div>
<div class="btn" style="left:378px;top:4px;width:29.5px"><svg style="left:2px;top:1px" width="16" height="16" viewBox="0 0 16 16"><path d="M1.500 2.500 H14.500 L9.500 8.500 V14.500 L6.500 12.500 V8.500 Z" fill="none" stroke="#d4d4d4" stroke-width="1.200" stroke-linejoin="round"/></svg><svg style="left:19.4px;top:6.3px" width="9" height="7" viewBox="0 0 9 7"><path d="M1.600 1.500 L4.500 4.500 L7.400 1.500" fill="none" stroke="#c6c6c6" stroke-width="1.500" stroke-linecap="round" stroke-linejoin="round"/></svg></div>
<div class="btn tog" style="left:415px;top:4px;width:18px"><svg style="left:1px;top:1px" width="16" height="16" viewBox="0 0 16 16"><g fill="none" stroke="#d4d4d4" stroke-width="1.100"><path d="M8.500 2.500 H2 V5.500 H9"/><path d="M3 5.500 V14 H13 V9.500"/></g><rect x="6" y="8" width="4" height="1.600" fill="#d4d4d4"/><circle cx="12.200" cy="4.300" r="3.400" fill="#f2f2f2"/><path d="M12.200 2.300 V6.300 M10.200 4.300 H14.200" stroke="#444" stroke-width="1.200"/></svg></div>
</div>
</div></div>
<div style="left:573px;top:426.5px;width:190px;height:1.5px;background:#1e1e1e;border-radius:2px 2px 0 0"></div><div style="left:723px;top:426.5px;width:20px;height:1px;background:#444"></div><div style="left:770px;top:426.5px;width:188px;height:1.5px;background:#1e1e1e;border-radius:2px 2px 0 0"></div><div style="left:920px;top:426.5px;width:19px;height:1px;background:#444"></div>
</body></html>
